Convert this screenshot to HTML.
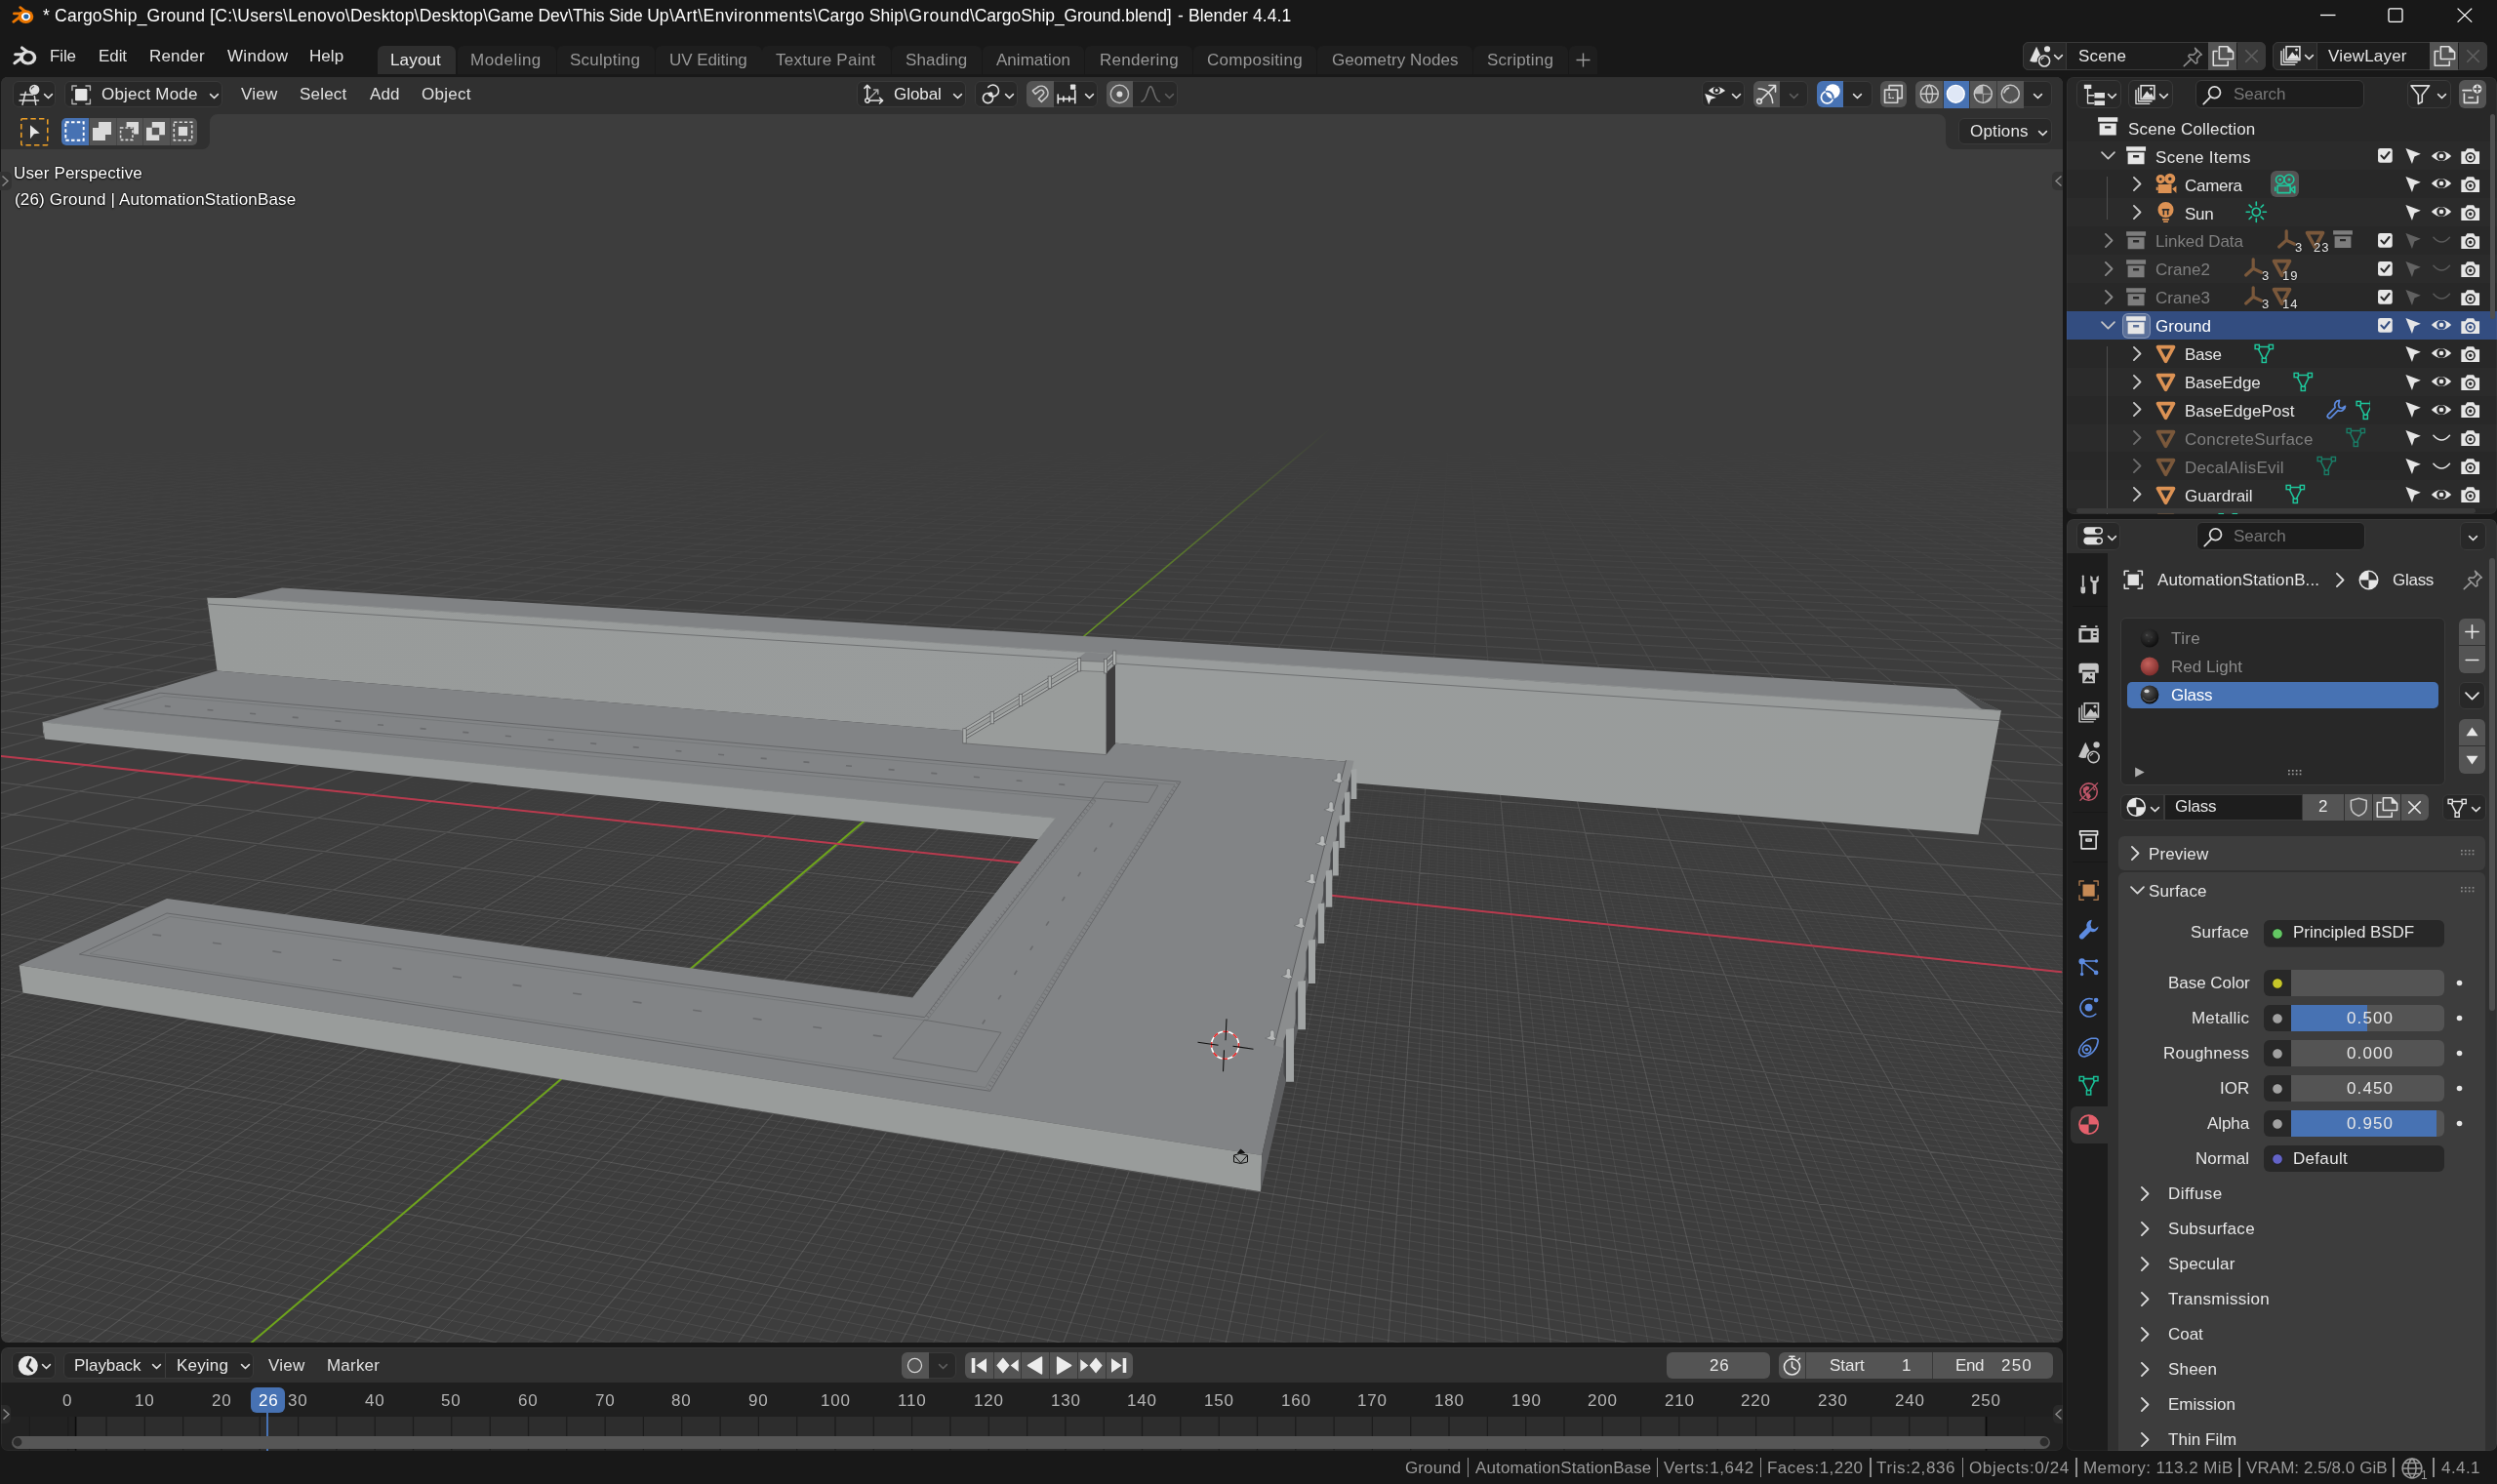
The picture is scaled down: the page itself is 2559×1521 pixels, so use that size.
<!DOCTYPE html>
<html><head><meta charset="utf-8"><title>Blender</title><style>html,body{margin:0;padding:0}
body{width:2559px;height:1521px;background:#181818;overflow:hidden;position:relative;font-family:"Liberation Sans",sans-serif;-webkit-font-smoothing:antialiased}
.b{position:absolute;box-sizing:border-box;display:block}
.t{position:absolute;white-space:nowrap;will-change:transform}
svg{overflow:visible}
#root{position:absolute;left:0;top:0;width:2559px;height:1521px;overflow:hidden;}
</style></head><body><div id="root">
<svg class="b" style="left:10.6px;top:4.6px" width="25.0" height="20.8" viewBox="0 0 24 20"><g fill="none" stroke="#ea7600" stroke-width="2.7" stroke-linecap="round" stroke-linejoin="round"><path d="M9.3 2.6L15.5 7.3"/><path d="M3.3 8.6H11"/><path d="M2.6 16.6L9.2 11.6"/></g><ellipse cx="14.8" cy="11.6" rx="7.6" ry="6.6" fill="#ea7600"/><ellipse cx="14.9" cy="11.5" rx="4.4" ry="3.9" fill="#fff"/><ellipse cx="15.2" cy="11.5" rx="2.5" ry="2.4" fill="#2265a8"/></svg>
<span class="t" style="left:44.00px;top:7px;font-size:17.5px;line-height:18px;color:#ffffff;letter-spacing:0.209px;">* CargoShip_Ground [C:\Users\Lenovo\Desktop\Desktop</span>
<span class="t" style="left:495.30px;top:7px;font-size:17.5px;line-height:18px;color:#ffffff;letter-spacing:-0.147px;">\Game Dev\This Side Up</span>
<span class="t" style="left:685.60px;top:7px;font-size:17.5px;line-height:18px;color:#ffffff;letter-spacing:0.484px;">\Art\Environments</span>
<span class="t" style="left:832.90px;top:7px;font-size:17.5px;line-height:18px;color:#ffffff;letter-spacing:0.053px;">\Cargo Ship</span>
<span class="t" style="left:925.90px;top:7px;font-size:17.5px;line-height:18px;color:#ffffff;letter-spacing:0.753px;">\Ground</span>
<span class="t" style="left:994.40px;top:7px;font-size:17.5px;line-height:18px;color:#ffffff;letter-spacing:-0.066px;">\CargoShip_Ground.blend]</span>
<span class="t" style="left:1206.60px;top:7px;font-size:17.5px;line-height:18px;color:#ffffff;letter-spacing:0.107px;">- Blender 4.4.1</span>
<svg class="b" style="left:2370px;top:0" width="189" height="32" viewBox="2370 0 189 32" fill="none" stroke="#fff" stroke-width="1.3"><path d="M2378 15.5H2393.5"/><rect x="2448" y="8.8" width="14" height="13.6" rx="1.6"/><path d="M2518.6 8.6L2533.2 22.6M2533.2 8.6L2518.6 22.6"/></svg>
<svg class="b" style="left:12.4px;top:46.4px" width="27.1" height="22.6" viewBox="0 0 24 20"><g fill="none" stroke="#dcdcdc" stroke-width="2.7" stroke-linecap="round" stroke-linejoin="round"><path d="M9.3 2.6L15.5 7.3"/><path d="M3.3 8.6H11"/><path d="M2.6 16.6L9.2 11.6"/></g><ellipse cx="14.8" cy="11.6" rx="7.6" ry="6.6" fill="#dcdcdc"/><ellipse cx="14.9" cy="11.5" rx="4.4" ry="3.9" fill="#181818"/></svg>
<span class="t" style="left:51.40px;top:49px;font-size:17px;line-height:17px;color:#e3e3e3;letter-spacing:-0.124px;">File</span>
<span class="t" style="left:101.00px;top:49px;font-size:17px;line-height:17px;color:#e3e3e3;letter-spacing:-0.074px;">Edit</span>
<span class="t" style="left:153.00px;top:49px;font-size:17px;line-height:17px;color:#e3e3e3;letter-spacing:0.157px;">Render</span>
<span class="t" style="left:232.50px;top:49px;font-size:17px;line-height:17px;color:#e3e3e3;letter-spacing:0.306px;">Window</span>
<span class="t" style="left:317.20px;top:49px;font-size:17px;line-height:17px;color:#e3e3e3;letter-spacing:0.059px;">Help</span>
<div class="b" style="left:386.60px;top:46.80px;width:80.40px;height:29.40px;background:#2e2e2e;border-radius:6px 6px 0 0;"></div>
<span class="t" style="left:400.00px;top:53px;font-size:17px;line-height:17px;color:#ededed;letter-spacing:0.160px;">Layout</span>
<div class="b" style="left:468.50px;top:46.80px;width:101.20px;height:29.40px;background:#1e1e1e;border-radius:6px 6px 0 0;"></div>
<span class="t" style="left:482.00px;top:53px;font-size:17px;line-height:17px;color:#989898;letter-spacing:0.476px;">Modeling</span>
<div class="b" style="left:570.80px;top:46.80px;width:100.20px;height:29.40px;background:#1e1e1e;border-radius:6px 6px 0 0;"></div>
<span class="t" style="left:584.30px;top:53px;font-size:17px;line-height:17px;color:#989898;letter-spacing:0.263px;">Sculpting</span>
<div class="b" style="left:672.00px;top:46.80px;width:108.50px;height:29.40px;background:#1e1e1e;border-radius:6px 6px 0 0;"></div>
<span class="t" style="left:686.00px;top:53px;font-size:17px;line-height:17px;color:#989898;letter-spacing:-0.062px;">UV Editing</span>
<div class="b" style="left:781.40px;top:46.80px;width:131.60px;height:29.40px;background:#1e1e1e;border-radius:6px 6px 0 0;"></div>
<span class="t" style="left:795.40px;top:53px;font-size:17px;line-height:17px;color:#989898;letter-spacing:0.237px;">Texture Paint</span>
<div class="b" style="left:914.00px;top:46.80px;width:92.00px;height:29.40px;background:#1e1e1e;border-radius:6px 6px 0 0;"></div>
<span class="t" style="left:928.30px;top:53px;font-size:17px;line-height:17px;color:#989898;letter-spacing:0.130px;">Shading</span>
<div class="b" style="left:1007.00px;top:46.80px;width:104.00px;height:29.40px;background:#1e1e1e;border-radius:6px 6px 0 0;"></div>
<span class="t" style="left:1021.00px;top:53px;font-size:17px;line-height:17px;color:#989898;letter-spacing:0.033px;">Animation</span>
<div class="b" style="left:1112.00px;top:46.80px;width:110.00px;height:29.40px;background:#1e1e1e;border-radius:6px 6px 0 0;"></div>
<span class="t" style="left:1126.60px;top:53px;font-size:17px;line-height:17px;color:#989898;letter-spacing:0.284px;">Rendering</span>
<div class="b" style="left:1223.00px;top:46.80px;width:126.00px;height:29.40px;background:#1e1e1e;border-radius:6px 6px 0 0;"></div>
<span class="t" style="left:1236.80px;top:53px;font-size:17px;line-height:17px;color:#989898;letter-spacing:0.319px;">Compositing</span>
<div class="b" style="left:1350.00px;top:46.80px;width:159.00px;height:29.40px;background:#1e1e1e;border-radius:6px 6px 0 0;"></div>
<span class="t" style="left:1364.50px;top:53px;font-size:17px;line-height:17px;color:#989898;letter-spacing:0.079px;">Geometry Nodes</span>
<div class="b" style="left:1510.00px;top:46.80px;width:97.00px;height:29.40px;background:#1e1e1e;border-radius:6px 6px 0 0;"></div>
<span class="t" style="left:1524.40px;top:53px;font-size:17px;line-height:17px;color:#989898;letter-spacing:0.217px;">Scripting</span>
<div class="b" style="left:1608.00px;top:46.80px;width:29.00px;height:29.40px;background:#1e1e1e;border-radius:6px 6px 0 0;"></div>
<svg class="b" style="left:1614px;top:53px" width="17" height="17" viewBox="0 0 17 17"><path d="M8.5 1.5V15.5M1.5 8.5H15.5" stroke="#9a9a9a" stroke-width="1.4" fill="none"/></svg>
<div class="b" style="left:2073.00px;top:43.00px;width:249.00px;height:28.60px;background:#1d1d1d;border-radius:6px;border:1px solid #3a3a3a;"></div>
<div class="b" style="left:2073.00px;top:43.00px;width:45.40px;height:28.60px;background:#282828;border-radius:6px 0 0 6px;border:1px solid #3a3a3a;"></div>
<svg class="b" style="left:2079.40px;top:46.20px;" width="22.60" height="22.60" viewBox="0 0 16 16"><path d="M5.7 1.2L10 10.6Q5.5 13.8 0.8 11.6z" fill="#e0e0e0" fill-rule="evenodd" /><path d="M11.3 3.0a2.2 2.2 0 1 0 4.4 0a2.2 2.2 0 1 0 -4.4 0z" fill="#e0e0e0" fill-rule="evenodd" /><circle cx="11.4" cy="11.7" r="3.9" fill="#282828" stroke="#282828" stroke-width="2.6"/><circle cx="11.4" cy="11.7" r="3.9" fill="#282828" stroke="#e0e0e0" stroke-width="1.1"/><path d="M9.4 10.6a2.3 2.3 0 0 1 1.5-1.4" fill="none" stroke="#e0e0e0" stroke-width="0.8" stroke-linecap="round" stroke-linejoin="round" /></svg>
<svg class="b" style="left:2098.20px;top:47.40px;" width="23.00" height="23.00" viewBox="0 0 16 16"><path d="M5.3 6.7L8 9.4L10.7 6.7" fill="none" stroke="#dcdcdc" stroke-width="1.15" stroke-linecap="round" stroke-linejoin="round" /></svg>
<span class="t" style="left:2130.40px;top:49px;font-size:17px;line-height:17px;color:#e6e6e6;letter-spacing:0.159px;">Scene</span>
<svg class="b" style="left:2235.60px;top:46.60px;" width="22.60" height="22.60" viewBox="0 0 16 16"><path d="M9.6 1.6l4.8 4.8-1.2 0.4-2.2 2.4 0.2 3-1.2 0.6-5.2-5.2 0.6-1.2 3 0.2 2.4-2.2zM6.6 9.8L1.6 14.6" fill="none" stroke="#8c8c8c" stroke-width="1.1" stroke-linecap="round" stroke-linejoin="round" /></svg>
<div class="b" style="left:2263.40px;top:43.00px;width:29.00px;height:28.60px;background:#545454;border-radius:0;"></div>
<svg class="b" style="left:2266.80px;top:46.20px;" width="22.60" height="22.60" viewBox="0 0 16 16"><path d="M5.2 1.3h6.1l4 4v4.9H5.2zM3.6 4.6H0.9V15h10.6v-3" fill="none" stroke="#dedede" stroke-width="1.1" stroke-linecap="round" stroke-linejoin="round" /><path d="M11.1 1.1v4.4h4.4z" fill="#dedede" fill-rule="evenodd" /></svg>
<div class="b" style="left:2293.00px;top:43.00px;width:29.00px;height:28.60px;background:#3a3a3a;border-radius:0 6px 6px 0;"></div>
<svg class="b" style="left:2296.00px;top:46.00px;" width="23.00" height="23.00" viewBox="0 0 16 16"><path d="M4 4L12 12M12 4L4 12" fill="none" stroke="#5e5e5e" stroke-width="1.2" stroke-linecap="round" stroke-linejoin="round" /></svg>
<div class="b" style="left:2329.40px;top:43.00px;width:220.00px;height:28.60px;background:#1d1d1d;border-radius:6px;border:1px solid #3a3a3a;"></div>
<div class="b" style="left:2329.40px;top:43.00px;width:45.60px;height:28.60px;background:#282828;border-radius:6px 0 0 6px;border:1px solid #3a3a3a;"></div>
<svg class="b" style="left:2335.60px;top:46.20px;" width="22.60" height="22.60" viewBox="0 0 16 16"><path d="M1.4 4.6v9.8h9.8M3.2 3v9.6h9.6" fill="none" stroke="#e0e0e0" stroke-width="1.0" stroke-linecap="round" stroke-linejoin="round" /><rect x="5" y="1.2" width="9.8" height="9.8" fill="#282828" stroke="#e0e0e0" stroke-width="1.1"/><path d="M5.6 10.4L9.4 5.2l2.2 2.8 1-1.2 2 3.6z" fill="#e0e0e0" fill-rule="evenodd" /><path d="M11.4 3.6a1 1 0 1 0 2 0a1 1 0 1 0 -2 0z" fill="#e0e0e0" fill-rule="evenodd" /></svg>
<svg class="b" style="left:2354.60px;top:47.40px;" width="23.00" height="23.00" viewBox="0 0 16 16"><path d="M5.3 6.7L8 9.4L10.7 6.7" fill="none" stroke="#dcdcdc" stroke-width="1.15" stroke-linecap="round" stroke-linejoin="round" /></svg>
<span class="t" style="left:2386.40px;top:49px;font-size:17px;line-height:17px;color:#e6e6e6;letter-spacing:0.170px;">ViewLayer</span>
<div class="b" style="left:2490.40px;top:43.00px;width:29.00px;height:28.60px;background:#545454;border-radius:0;"></div>
<svg class="b" style="left:2493.80px;top:46.20px;" width="22.60" height="22.60" viewBox="0 0 16 16"><path d="M5.2 1.3h6.1l4 4v4.9H5.2zM3.6 4.6H0.9V15h10.6v-3" fill="none" stroke="#dedede" stroke-width="1.1" stroke-linecap="round" stroke-linejoin="round" /><path d="M11.1 1.1v4.4h4.4z" fill="#dedede" fill-rule="evenodd" /></svg>
<div class="b" style="left:2520.00px;top:43.00px;width:29.40px;height:28.60px;background:#3a3a3a;border-radius:0 6px 6px 0;"></div>
<svg class="b" style="left:2523.20px;top:46.00px;" width="23.00" height="23.00" viewBox="0 0 16 16"><path d="M4 4L12 12M12 4L4 12" fill="none" stroke="#5e5e5e" stroke-width="1.2" stroke-linecap="round" stroke-linejoin="round" /></svg>
<div class="b" style="left:1.2px;top:79px;width:2112.4px;height:1297px;border-radius:7px;overflow:hidden;background:#3d3d3d"><div class="b" style="left:0.8px;top:0"><svg class="b" style="left:0;top:0" width="2112" height="1297" viewBox="2 79 2112 1297">
<defs>
<linearGradient id="gm1" x1="0" y1="437" x2="0" y2="900" gradientUnits="userSpaceOnUse"><stop offset="0" stop-color="#fff" stop-opacity="0"/><stop offset="0.274" stop-color="#fff" stop-opacity="0.24"/><stop offset="0.605" stop-color="#fff" stop-opacity="0.72"/><stop offset="0.784" stop-color="#fff" stop-opacity="0.92"/><stop offset="1" stop-color="#fff" stop-opacity="1"/></linearGradient>
<mask id="m1" maskUnits="userSpaceOnUse" x="0" y="0" width="2200" height="1400"><rect x="0" y="430" width="2200" height="970" fill="url(#gm1)"/></mask>
<linearGradient id="gm2" x1="0" y1="640" x2="0" y2="1000" gradientUnits="userSpaceOnUse"><stop offset="0" stop-color="#fff" stop-opacity="0"/><stop offset="1" stop-color="#fff" stop-opacity="1"/></linearGradient>
<mask id="m2" maskUnits="userSpaceOnUse" x="0" y="0" width="2200" height="1400"><rect x="0" y="640" width="2200" height="760" fill="url(#gm2)"/></mask>
<linearGradient id="gg" x1="1363" y1="439" x2="1112" y2="651" gradientUnits="userSpaceOnUse"><stop offset="0" stop-color="#6ea51b" stop-opacity="0"/><stop offset="0.5" stop-color="#6ea51b" stop-opacity="0.42"/><stop offset="1" stop-color="#6ea51b" stop-opacity="0.85"/></linearGradient>
<linearGradient id="wallg" x1="212" y1="0" x2="2050" y2="0" gradientUnits="userSpaceOnUse"><stop offset="0" stop-color="#989b9a"/><stop offset="0.5" stop-color="#999c9c"/><stop offset="1" stop-color="#999c9b"/></linearGradient>
</defs>
<rect x="2" y="79" width="2112" height="1297" fill="#3d3d3d"/>
<defs><mask id="m2d" maskUnits="userSpaceOnUse" x="0" y="0" width="2200" height="1400"><polygon points="7290,2113 5725,1686 4654,1402 3946,1221 3437,1097 3048,1007 2737,939 2480,887 2261,847 2070,815 1899,790 1743,770 1598,755 1463,744 1333,736 1207,731 1083,729 959,730 834,733 707,740 574,750 433,764 283,781 119,804 -63,833 -269,870 -508,917 -793,977 -1144,1057 -1595,1165 -2204,1319 -3089,1551 -4520,1939 -5164,2118" fill="#fff" fill-opacity="0.004"/><polygon points="7022,2113 5677,1731 4625,1440 3927,1254 3423,1125 3038,1032 2730,963 2474,909 2256,867 2066,834 1896,808 1741,788 1597,772 1461,760 1332,752 1206,747 1083,745 960,746 835,750 708,757 575,767 435,781 286,800 122,823 -59,853 -263,891 -501,939 -784,1002 -1132,1084 -1578,1196 -2179,1354 -3051,1593 -4452,1988 -4898,2118" fill="#fff" fill-opacity="0.028"/><polygon points="6753,2113 5626,1778 4594,1480 3906,1289 3408,1157 3027,1060 2721,988 2468,933 2251,889 2062,855 1892,828 1738,807 1595,791 1460,778 1331,770 1206,765 1083,762 960,763 836,767 709,775 577,785 438,800 289,819 126,844 -54,875 -257,914 -493,964 -774,1029 -1119,1114 -1560,1229 -2153,1392 -3009,1637 -4379,2041 -4631,2118" fill="#fff" fill-opacity="0.054"/><polygon points="6483,2113 5571,1830 4560,1524 3883,1327 3392,1190 3015,1091 2712,1016 2461,958 2246,913 2058,878 1889,850 1735,828 1593,811 1459,798 1330,789 1205,784 1083,782 960,782 837,787 710,794 579,805 440,821 292,840 130,866 -49,898 -251,939 -485,991 -763,1058 -1104,1146 -1540,1265 -2124,1433 -2965,1685 -4302,2098 -4364,2117" fill="#fff" fill-opacity="0.079"/><polygon points="6212,2114 5512,1885 4523,1571 3858,1368 3374,1227 3002,1124 2702,1046 2453,987 2240,940 2053,903 1885,874 1733,851 1591,833 1457,820 1329,811 1205,805 1083,802 961,803 838,808 712,816 581,827 443,843 295,864 135,890 -43,924 -244,966 -476,1020 -751,1090 -1089,1181 -1518,1304 -2093,1478 -2917,1736 -4092,2117" fill="#fff" fill-opacity="0.103"/><polygon points="5939,2114 5448,1945 4483,1623 3831,1413 3355,1267 2988,1160 2691,1080 2445,1018 2233,969 2048,931 1881,900 1729,876 1588,858 1455,844 1328,834 1204,828 1083,826 961,827 839,831 713,839 583,852 446,868 299,890 140,917 -37,952 -236,996 -466,1053 -738,1125 -1071,1219 -1495,1347 -2059,1526 -2865,1792 -3817,2117" fill="#fff" fill-opacity="0.130"/><polygon points="5665,2114 5378,2010 4440,1679 3802,1463 3334,1311 2972,1201 2679,1117 2435,1052 2226,1001 2042,961 1877,929 1726,904 1586,885 1453,870 1327,860 1204,854 1083,851 962,852 840,857 715,866 586,878 449,896 304,918 145,947 -30,984 -227,1030 -455,1088 -724,1163 -1053,1262 -1469,1394 -2022,1579 -2808,1853 -3541,2117" fill="#fff" fill-opacity="0.159"/><polygon points="5389,2114 5302,2080 4392,1741 3769,1517 3311,1360 2954,1245 2666,1158 2425,1090 2218,1037 2035,995 1872,962 1722,935 1583,915 1451,900 1325,889 1203,883 1083,880 963,881 841,886 717,895 589,908 453,927 308,950 151,980 -22,1019 -218,1067 -442,1128 -708,1206 -1032,1309 -1440,1446 -1981,1638 -2746,1920 -3262,2117" fill="#fff" fill-opacity="0.193"/><polygon points="5108,2114 4339,1809 3733,1578 3284,1415 2935,1295 2651,1204 2413,1133 2208,1077 2028,1033 1866,998 1717,971 1579,949 1449,933 1324,922 1202,915 1083,912 963,914 843,919 720,928 592,942 457,961 314,986 158,1018 -14,1058 -207,1108 -429,1172 -690,1254 -1008,1361 -1408,1504 -1936,1703 -2677,1993 -2982,2117" fill="#fff" fill-opacity="0.235"/><polygon points="4820,2114 4280,1885 3692,1646 3255,1476 2913,1351 2634,1255 2400,1181 2198,1123 2020,1076 1859,1039 1712,1010 1575,988 1446,971 1322,959 1201,952 1083,949 964,950 845,956 722,966 595,981 462,1001 320,1027 166,1060 -4,1102 -194,1155 -413,1223 -670,1308 -982,1420 -1373,1569 -1886,1775 -2601,2075 -2699,2117" fill="#fff" fill-opacity="0.287"/><polygon points="4530,2114 4214,1970 3647,1722 3222,1546 2888,1414 2615,1314 2385,1236 2186,1175 2010,1126 1852,1087 1706,1056 1571,1032 1443,1015 1320,1002 1200,994 1082,991 965,992 847,998 725,1009 600,1025 468,1046 327,1073 175,1109 7,1153 -180,1209 -395,1280 -648,1370 -952,1487 -1332,1642 -1829,1856 -2408,2117" fill="#fff" fill-opacity="0.358"/><polygon points="4236,2114 4140,2067 3594,1810 3184,1625 2859,1488 2593,1382 2367,1300 2172,1235 1999,1183 1843,1142 1700,1109 1566,1084 1439,1065 1317,1052 1199,1044 1082,1040 966,1042 849,1048 729,1059 605,1076 474,1098 335,1128 185,1165 20,1212 -164,1271 -375,1346 -621,1441 -918,1563 -1286,1726 -1765,1948 -2110,2117" fill="#fff" fill-opacity="0.461"/><polygon points="3930,2114 3534,1911 3139,1718 2825,1573 2567,1462 2347,1375 2156,1306 1987,1251 1833,1207 1692,1172 1560,1145 1435,1125 1314,1111 1198,1102 1082,1098 967,1100 852,1106 733,1118 610,1136 482,1160 345,1191 197,1231 36,1281 -145,1344 -351,1423 -591,1523 -878,1653 -1233,1823 -1691,2055 -1807,2116" fill="#fff" fill-opacity="0.621"/><polygon points="3614,2114 3463,2029 3087,1827 2785,1675 2536,1557 2323,1464 2137,1391 1971,1332 1821,1285 1682,1248 1552,1219 1429,1197 1311,1182 1196,1172 1082,1168 969,1170 855,1177 738,1190 617,1209 491,1235 357,1268 212,1311 54,1365 -122,1432 -322,1516 -554,1622 -830,1759 -1170,1937 -1491,2116" fill="#fff" fill-opacity="0.883"/></mask></defs>
<path mask="url(#m2d)" d="M1102.0 430.0L-3.0 716.2M1103.6 430.0L-3.0 717.8M1105.2 430.0L-3.0 719.4M1106.8 430.0L-3.0 721.1M1108.4 430.0L-3.0 722.7M1110.0 430.0L-3.0 724.4M1111.6 430.0L-3.0 726.0M1113.2 430.0L-3.0 727.7M1114.8 430.0L-3.0 729.4M1118.0 430.0L-3.0 732.8M1119.7 430.0L-3.0 734.6M1121.3 430.0L-3.0 736.3M1122.9 430.0L-3.0 738.1M1124.5 430.0L-3.0 739.9M1126.1 430.0L-3.0 741.7M1127.7 430.0L-3.0 743.5M1129.3 430.0L-3.0 745.3M1130.9 430.0L-3.0 747.2M1134.1 430.0L-3.0 750.9M1135.7 430.0L-3.0 752.8M1137.3 430.0L-3.0 754.7M1138.9 430.0L-3.0 756.6M1140.5 430.0L-3.0 758.6M1142.1 430.0L-3.0 760.6M1143.7 430.0L-3.0 762.5M1145.3 430.0L-3.0 764.6M1146.9 430.0L-3.0 766.6M1150.2 430.0L-3.0 770.7M1151.8 430.0L-3.0 772.8M1153.4 430.0L-3.0 774.9M1155.0 430.0L-3.0 777.0M1156.6 430.0L-3.0 779.1M1158.2 430.0L-3.0 781.3M1159.8 430.0L-3.0 783.5M1161.4 430.0L-3.0 785.7M1163.0 430.0L-3.0 787.9M1166.2 430.0L-3.0 792.4M1167.8 430.0L-3.0 794.7M1169.4 430.0L-3.0 797.0M1171.0 430.0L-3.0 799.3M1172.6 430.0L-3.0 801.7M1174.2 430.0L-3.0 804.1M1175.8 430.0L-3.0 806.5M1177.4 430.0L-3.0 808.9M1179.1 430.0L-3.0 811.4M1182.3 430.0L-3.0 816.4M1183.9 430.0L-3.0 818.9M1185.5 430.0L-3.0 821.5M1187.1 430.0L-3.0 824.0M1188.7 430.0L-3.0 826.7M1190.3 430.0L-3.0 829.3M1191.9 430.0L-3.0 832.0M1193.5 430.0L-3.0 834.7M1195.1 430.0L-3.0 837.4M1198.3 430.0L-3.0 842.9M1199.9 430.0L-3.0 845.8M1201.5 430.0L-3.0 848.6M1203.1 430.0L-3.0 851.5M1204.8 430.0L-3.0 854.4M1206.4 430.0L-3.0 857.4M1208.0 430.0L-3.0 860.3M1209.6 430.0L-3.0 863.3M1211.2 430.0L-3.0 866.4M1214.4 430.0L-3.0 872.6M1216.0 430.0L-3.0 875.8M1217.6 430.0L-3.0 878.9M1219.2 430.0L-3.0 882.2M1220.8 430.0L-3.0 885.4M1222.4 430.0L-3.0 888.7M1224.0 430.0L-3.0 892.1M1225.6 430.0L-3.0 895.5M1227.2 430.0L-3.0 898.9M1230.5 430.0L-3.0 905.9M1232.1 430.0L-3.0 909.4M1233.7 430.0L-3.0 913.0M1235.3 430.0L-3.0 916.7M1236.9 430.0L-3.0 920.4M1238.5 430.0L-3.0 924.1M1240.1 430.0L-3.0 927.9M1241.7 430.0L-3.0 931.7M1243.3 430.0L-3.0 935.6M1246.5 430.0L-3.0 943.5M1248.1 430.0L-3.0 947.5M1249.7 430.0L-3.0 951.6M1251.3 430.0L-3.0 955.8M1252.9 430.0L-3.0 960.0M1254.5 430.0L-3.0 964.2M1256.2 430.0L-3.0 968.5M1257.8 430.0L-3.0 972.9M1259.4 430.0L-3.0 977.3M1262.6 430.0L-3.0 986.4M1264.2 430.0L-3.0 991.0M1265.8 430.0L-3.0 995.7M1267.4 430.0L-3.0 1000.5M1269.0 430.0L-3.0 1005.3M1270.6 430.0L-3.0 1010.2M1272.2 430.0L-3.0 1015.1M1273.8 430.0L-3.0 1020.2M1275.4 430.0L-3.0 1025.3M1278.7 430.0L-3.0 1035.7M1280.3 430.0L-3.0 1041.1M1281.9 430.0L-3.0 1046.5M1283.5 430.0L-3.0 1052.0M1285.1 430.0L-3.0 1057.6M1286.7 430.0L-3.0 1063.3M1288.3 430.0L-3.0 1069.0M1289.9 430.0L-3.0 1074.9M1291.5 430.0L-3.0 1080.9M1294.7 430.0L-3.0 1093.1M1296.3 430.0L-3.0 1099.3M1297.9 430.0L-3.0 1105.7M1299.5 430.0L-3.0 1112.1M1301.2 430.0L-3.0 1118.7M1302.8 430.0L-3.0 1125.4M1304.4 430.0L-3.0 1132.1M1306.0 430.0L-3.0 1139.1M1307.6 430.0L-3.0 1146.1M1310.8 430.0L-3.0 1160.5M1312.4 430.0L-3.0 1167.9M1314.0 430.0L-3.0 1175.5M1315.6 430.0L-3.0 1183.1M1317.2 430.0L-3.0 1190.9M1318.8 430.0L-3.0 1198.9M1320.4 430.0L-3.0 1207.0M1322.0 430.0L-3.0 1215.3M1323.7 430.0L-3.0 1223.7M1326.9 430.0L-3.0 1241.0M1328.5 430.0L-3.0 1250.0M1330.1 430.0L-3.0 1259.1M1331.7 430.0L-3.0 1268.3M1333.3 430.0L-3.0 1277.8M1334.9 430.0L-3.0 1287.4M1336.5 430.0L-3.0 1297.3M1338.1 430.0L-3.0 1307.4M1339.7 430.0L-3.0 1317.6M1342.9 430.0L-3.0 1338.8M1344.6 430.0L-3.0 1349.8M1346.2 430.0L-3.0 1361.0M1347.8 430.0L-3.0 1372.4M1349.4 430.0L1.4 1381.0M1351.0 430.0L18.1 1381.0M1352.6 430.0L34.8 1381.0M1354.2 430.0L51.5 1381.0M1355.8 430.0L68.2 1381.0M1359.0 430.0L101.6 1381.0M1360.6 430.0L118.4 1381.0M1362.2 430.0L135.1 1381.0M1363.8 430.0L151.8 1381.0M1365.5 430.0L168.5 1381.0M1367.1 430.0L185.2 1381.0M1368.7 430.0L201.9 1381.0M1370.3 430.0L218.6 1381.0M1371.9 430.0L235.3 1381.0M1375.1 430.0L268.7 1381.0M1376.7 430.0L285.5 1381.0M1378.3 430.0L302.2 1381.0M1379.9 430.0L318.9 1381.0M1381.5 430.0L335.6 1381.0M1383.1 430.0L352.3 1381.0M1384.8 430.0L369.0 1381.0M1386.4 430.0L385.7 1381.0M1388.0 430.0L402.4 1381.0M1391.2 430.0L435.9 1381.0M1392.8 430.0L452.6 1381.0M1394.4 430.0L469.3 1381.0M1396.0 430.0L486.0 1381.0M1397.6 430.0L502.7 1381.0M1399.2 430.0L519.4 1381.0M1400.8 430.0L536.2 1381.0M1402.4 430.0L552.9 1381.0M1404.1 430.0L569.6 1381.0M1407.3 430.0L603.0 1381.0M1408.9 430.0L619.7 1381.0M1410.5 430.0L636.4 1381.0M1412.1 430.0L653.2 1381.0M1413.7 430.0L669.9 1381.0M1415.3 430.0L686.6 1381.0M1416.9 430.0L703.3 1381.0M1418.5 430.0L720.0 1381.0M1420.1 430.0L736.7 1381.0M1423.4 430.0L770.2 1381.0M1425.0 430.0L786.9 1381.0M1426.6 430.0L803.6 1381.0M1428.2 430.0L820.3 1381.0M1429.8 430.0L837.0 1381.0M1431.4 430.0L853.8 1381.0M1433.0 430.0L870.5 1381.0M1434.6 430.0L887.2 1381.0M1436.2 430.0L903.9 1381.0M1439.4 430.0L937.4 1381.0M1441.1 430.0L954.1 1381.0M1442.7 430.0L970.8 1381.0M1444.3 430.0L987.5 1381.0M1445.9 430.0L1004.2 1381.0M1447.5 430.0L1021.0 1381.0M1449.1 430.0L1037.7 1381.0M1450.7 430.0L1054.4 1381.0M1452.3 430.0L1071.1 1381.0M1455.5 430.0L1104.6 1381.0M1457.1 430.0L1121.3 1381.0M1458.8 430.0L1138.0 1381.0M1460.4 430.0L1154.7 1381.0M1462.0 430.0L1171.4 1381.0M1463.6 430.0L1188.2 1381.0M1465.2 430.0L1204.9 1381.0M1466.8 430.0L1221.6 1381.0M1468.4 430.0L1238.3 1381.0M1471.6 430.0L1271.8 1381.0M1473.2 430.0L1288.5 1381.0M1474.8 430.0L1305.2 1381.0M1476.5 430.0L1322.0 1381.0M1478.1 430.0L1338.7 1381.0M1479.7 430.0L1355.4 1381.0M1481.3 430.0L1372.1 1381.0M1482.9 430.0L1388.8 1381.0M1484.5 430.0L1405.6 1381.0M1487.7 430.0L1439.0 1381.0M1489.3 430.0L1455.7 1381.0M1490.9 430.0L1472.5 1381.0M1492.5 430.0L1489.2 1381.0M1494.2 430.0L1505.9 1381.0M1495.8 430.0L1522.6 1381.0M1497.4 430.0L1539.4 1381.0M1499.0 430.0L1556.1 1381.0M1500.6 430.0L1572.8 1381.0M1503.8 430.0L1606.3 1381.0M1505.4 430.0L1623.0 1381.0M1507.0 430.0L1639.7 1381.0M1508.6 430.0L1656.5 1381.0M1510.3 430.0L1673.2 1381.0M1511.9 430.0L1689.9 1381.0M1513.5 430.0L1706.6 1381.0M1515.1 430.0L1723.4 1381.0M1516.7 430.0L1740.1 1381.0M1519.9 430.0L1773.6 1381.0M1521.5 430.0L1790.3 1381.0M1523.1 430.0L1807.0 1381.0M1524.7 430.0L1823.8 1381.0M1526.3 430.0L1840.5 1381.0M1528.0 430.0L1857.2 1381.0M1529.6 430.0L1873.9 1381.0M1531.2 430.0L1890.7 1381.0M1532.8 430.0L1907.4 1381.0M1536.0 430.0L1940.9 1381.0M1537.6 430.0L1957.6 1381.0M1539.2 430.0L1974.3 1381.0M1540.8 430.0L1991.1 1381.0M1542.4 430.0L2007.8 1381.0M1544.1 430.0L2024.5 1381.0M1545.7 430.0L2041.3 1381.0M1547.3 430.0L2058.0 1381.0M1548.9 430.0L2074.7 1381.0M1552.1 430.0L2108.2 1381.0M1553.7 430.0L2119.0 1371.1M1555.3 430.0L2119.0 1344.3M1556.9 430.0L2119.0 1318.7M1558.6 430.0L2119.0 1294.4M1560.2 430.0L2119.0 1271.3M1561.8 430.0L2119.0 1249.3M1563.4 430.0L2119.0 1228.3M1565.0 430.0L2119.0 1208.2M1568.2 430.0L2119.0 1170.5M1569.8 430.0L2119.0 1152.9M1571.4 430.0L2119.0 1136.0M1573.0 430.0L2119.0 1119.8M1574.7 430.0L2119.0 1104.2M1576.3 430.0L2119.0 1089.2M1577.9 430.0L2119.0 1074.8M1579.5 430.0L2119.0 1060.9M1581.1 430.0L2119.0 1047.6M1584.3 430.0L2119.0 1022.2M1585.9 430.0L2119.0 1010.2M1587.5 430.0L2119.0 998.6M1589.1 430.0L2119.0 987.4M1590.8 430.0L2119.0 976.6M1592.4 430.0L2119.0 966.1M1594.0 430.0L2119.0 955.9M1595.6 430.0L2119.0 946.1M1597.2 430.0L2119.0 936.6M1600.4 430.0L2119.0 918.4M1602.0 430.0L2119.0 909.7M1603.6 430.0L2119.0 901.2M1605.3 430.0L2119.0 893.0M1606.9 430.0L2119.0 885.0M1608.5 430.0L2119.0 877.3M1610.1 430.0L2119.0 869.7M1611.7 430.0L2119.0 862.4M1613.3 430.0L2119.0 855.3M1616.5 430.0L2119.0 841.5M1618.1 430.0L2119.0 834.9M1619.8 430.0L2119.0 828.5M1621.4 430.0L2119.0 822.2M1623.0 430.0L2119.0 816.1M1624.6 430.0L2119.0 810.2M1626.2 430.0L2119.0 804.4M1627.8 430.0L2119.0 798.7M1629.4 430.0L2119.0 793.1M1632.6 430.0L2119.0 782.4M1634.3 430.0L2119.0 777.2M1635.9 430.0L2119.0 772.2M1637.5 430.0L2119.0 767.2M1639.1 430.0L2119.0 762.4M1640.7 430.0L2119.0 757.7M1642.3 430.0L2119.0 753.1M1643.9 430.0L2119.0 748.5M1645.5 430.0L2119.0 744.1M1648.8 430.0L2119.0 735.5M1650.4 430.0L2119.0 731.4M1652.0 430.0L2119.0 727.3M1653.6 430.0L2119.0 723.3M1655.2 430.0L2119.0 719.4M1656.8 430.0L2119.0 715.5M1658.4 430.0L2119.0 711.8M1660.0 430.0L2119.0 708.1M1661.6 430.0L2119.0 704.4M1664.9 430.0L2119.0 697.4M1666.5 430.0L2119.0 694.0M1668.1 430.0L2119.0 690.6M1669.7 430.0L2119.0 687.3M1671.3 430.0L2119.0 684.1M1672.9 430.0L2119.0 680.9M1674.5 430.0L2119.0 677.8M1676.2 430.0L2119.0 674.7M1677.8 430.0L2119.0 671.7M1681.0 430.0L2119.0 665.8M1682.6 430.0L2119.0 662.9M1684.2 430.0L2119.0 660.1M1685.8 430.0L2119.0 657.4M1687.4 430.0L2119.0 654.6M1689.0 430.0L2119.0 652.0M1690.7 430.0L2119.0 649.3M1692.3 430.0L2119.0 646.7M1693.9 430.0L2119.0 644.2M1697.1 430.0L2119.0 639.2M1698.7 430.0L2119.0 636.8M1700.3 430.0L2119.0 634.4M1701.9 430.0L2119.0 632.0M1703.6 430.0L2119.0 629.7M1705.2 430.0L2119.0 627.4M1706.8 430.0L2119.0 625.2M1708.4 430.0L2119.0 622.9M1710.0 430.0L2119.0 620.8M1713.2 430.0L2119.0 616.5M1714.8 430.0L2119.0 614.4M1716.4 430.0L2119.0 612.3M1718.1 430.0L2119.0 610.3M1719.7 430.0L2119.0 608.3M1721.3 430.0L2119.0 606.3M1722.9 430.0L2119.0 604.4M1724.5 430.0L2119.0 602.5M1726.1 430.0L2119.0 600.6M1729.3 430.0L2119.0 596.9M1731.0 430.0L2119.0 595.1M1732.6 430.0L2119.0 593.3M1734.2 430.0L2119.0 591.5M1735.8 430.0L2119.0 589.8M1737.4 430.0L2119.0 588.0M1739.0 430.0L2119.0 586.3M1740.6 430.0L2119.0 584.7M1742.2 430.0L2119.0 583.0M1745.5 430.0L2119.0 579.8M1747.1 430.0L2119.0 578.2M1748.7 430.0L2119.0 576.6M1750.3 430.0L2119.0 575.0M1751.9 430.0L2119.0 573.5M1753.5 430.0L2119.0 572.0M1755.1 430.0L2119.0 570.5M1756.8 430.0L2119.0 569.0M1758.4 430.0L2119.0 567.6M1761.6 430.0L2119.0 564.7M1763.2 430.0L2119.0 563.3M1764.8 430.0L2119.0 561.9M1766.4 430.0L2119.0 560.5M1768.0 430.0L2119.0 559.2M1769.7 430.0L2119.0 557.8M1771.3 430.0L2119.0 556.5M1772.9 430.0L2119.0 555.2M1774.5 430.0L2119.0 553.9M1777.7 430.0L2119.0 551.3M1779.3 430.0L2119.0 550.1M1780.9 430.0L2119.0 548.8M1782.6 430.0L2119.0 547.6M1784.2 430.0L2119.0 546.4M1785.8 430.0L2119.0 545.2M1787.4 430.0L2119.0 544.0M1789.0 430.0L2119.0 542.8M1790.6 430.0L2119.0 541.7M1793.9 430.0L2119.0 539.4M1795.5 430.0L2119.0 538.3M1797.1 430.0L2119.0 537.2M1798.7 430.0L2119.0 536.1M1800.3 430.0L2119.0 535.0M1801.9 430.0L2119.0 533.9M1803.5 430.0L2119.0 532.8M1805.1 430.0L2119.0 531.8M1806.8 430.0L2119.0 530.7M1810.0 430.0L2119.0 528.7M1811.6 430.0L2119.0 527.7M1813.2 430.0L2119.0 526.7M1814.8 430.0L2119.0 525.7M1816.4 430.0L2119.0 524.7M1818.1 430.0L2119.0 523.7M1819.7 430.0L2119.0 522.8M1821.3 430.0L2119.0 521.8M1822.9 430.0L2119.0 520.9M1826.1 430.0L2119.0 519.0M1827.7 430.0L2119.0 518.1M1829.3 430.0L2119.0 517.2M1831.0 430.0L2119.0 516.3M1832.6 430.0L2119.0 515.4M1834.2 430.0L2119.0 514.5M1835.8 430.0L2119.0 513.6M1837.4 430.0L2119.0 512.8M1839.0 430.0L2119.0 511.9M1842.3 430.0L2119.0 510.2M1843.9 430.0L2119.0 509.4M1845.5 430.0L2119.0 508.6M1847.1 430.0L2119.0 507.7M1848.7 430.0L2119.0 506.9M1850.3 430.0L2119.0 506.1M1851.9 430.0L2119.0 505.3M1853.5 430.0L2119.0 504.5M1855.2 430.0L2119.0 503.7M1858.4 430.0L2119.0 502.2M1860.0 430.0L2119.0 501.4M1861.6 430.0L2119.0 500.7M1863.2 430.0L2119.0 499.9M1864.8 430.0L2119.0 499.2M1866.5 430.0L2119.0 498.5M1868.1 430.0L2119.0 497.7M1869.7 430.0L2119.0 497.0M1871.3 430.0L2119.0 496.3M-3.0 1378.4L7.5 1381.0M-3.0 1364.2L65.6 1381.0M-3.0 1350.4L123.8 1381.0M-3.0 1336.9L181.9 1381.0M-3.0 1323.8L240.1 1381.0M-3.0 1311.1L298.2 1381.0M-3.0 1298.6L356.4 1381.0M-3.0 1286.5L414.5 1381.0M-3.0 1274.7L472.7 1381.0M-3.0 1251.9L589.0 1381.0M-3.0 1240.9L647.2 1381.0M-3.0 1230.1L705.4 1381.0M-3.0 1219.7L763.6 1381.0M-3.0 1209.4L821.7 1381.0M-3.0 1199.4L879.9 1381.0M-3.0 1189.6L938.1 1381.0M-3.0 1180.1L996.3 1381.0M-3.0 1170.7L1054.5 1381.0M-3.0 1152.6L1170.9 1381.0M-3.0 1143.8L1229.1 1381.0M-3.0 1135.2L1287.3 1381.0M-3.0 1126.8L1345.4 1381.0M-3.0 1118.6L1403.7 1381.0M-3.0 1110.5L1461.9 1381.0M-3.0 1102.6L1520.1 1381.0M-3.0 1094.9L1578.3 1381.0M-3.0 1087.3L1636.5 1381.0M-3.0 1072.6L1752.9 1381.0M-3.0 1065.4L1811.1 1381.0M-3.0 1058.4L1869.4 1381.0M-3.0 1051.5L1927.6 1381.0M-3.0 1044.8L1985.8 1381.0M-3.0 1038.1L2044.0 1381.0M-3.0 1031.6L2102.3 1381.0M-3.0 1025.3L2119.0 1374.2M-3.0 1019.0L2119.0 1364.7M-3.0 1006.8L2119.0 1346.4M-3.0 1000.8L2119.0 1337.5M-3.0 995.0L2119.0 1328.7M-3.0 989.2L2119.0 1320.1M-3.0 983.6L2119.0 1311.6M-3.0 978.0L2119.0 1303.2M-3.0 972.6L2119.0 1295.0M-3.0 967.2L2119.0 1287.0M-3.0 961.9L2119.0 1279.0M-3.0 951.6L2119.0 1263.6M-3.0 946.6L2119.0 1256.0M-3.0 941.7L2119.0 1248.6M-3.0 936.8L2119.0 1241.3M-3.0 932.0L2119.0 1234.1M-3.0 927.3L2119.0 1227.0M-3.0 922.7L2119.0 1220.1M-3.0 918.1L2119.0 1213.2M-3.0 913.6L2119.0 1206.4M-3.0 904.8L2119.0 1193.2M-3.0 900.5L2119.0 1186.8M-3.0 896.3L2119.0 1180.4M-3.0 892.1L2119.0 1174.1M-3.0 888.0L2119.0 1168.0M-3.0 884.0L2119.0 1161.9M-3.0 880.0L2119.0 1155.9M-3.0 876.0L2119.0 1150.0M-3.0 872.1L2119.0 1144.1M-3.0 864.6L2119.0 1132.7M-3.0 860.8L2119.0 1127.1M-3.0 857.2L2119.0 1121.6M-3.0 853.5L2119.0 1116.2M-3.0 850.0L2119.0 1110.8M-3.0 846.5L2119.0 1105.5M-3.0 843.0L2119.0 1100.3M-3.0 839.6L2119.0 1095.2M-3.0 836.2L2119.0 1090.1M-3.0 829.5L2119.0 1080.1M-3.0 826.3L2119.0 1075.3M-3.0 823.1L2119.0 1070.4M-3.0 819.9L2119.0 1065.7M-3.0 816.8L2119.0 1061.0M-3.0 813.7L2119.0 1056.3M-3.0 810.7L2119.0 1051.8M-3.0 807.6L2119.0 1047.2M-3.0 804.7L2119.0 1042.8M-3.0 798.8L2119.0 1034.0M-3.0 796.0L2119.0 1029.7M-3.0 793.1L2119.0 1025.4M-3.0 790.4L2119.0 1021.2M-3.0 787.6L2119.0 1017.1M-3.0 784.9L2119.0 1013.0M-3.0 782.2L2119.0 1008.9M-3.0 779.5L2119.0 1004.9M-3.0 776.9L2119.0 1001.0M-3.0 771.7L2119.0 993.2M-3.0 769.1L2119.0 989.4M-3.0 766.6L2119.0 985.6M-3.0 764.1L2119.0 981.9M-3.0 761.7L2119.0 978.2M-3.0 759.3L2119.0 974.5M-3.0 756.9L2119.0 970.9M-3.0 754.5L2119.0 967.3M-3.0 752.1L2119.0 963.8M-3.0 747.5L2119.0 956.9M-3.0 745.2L2119.0 953.4M-3.0 743.0L2119.0 950.1M-3.0 740.8L2119.0 946.7M-3.0 738.6L2119.0 943.4M-3.0 736.4L2119.0 940.1M-3.0 734.2L2119.0 936.9M-3.0 732.1L2119.0 933.7M-3.0 730.0L2119.0 930.5M-3.0 725.8L2119.0 924.3M-3.0 723.8L2119.0 921.2M-3.0 721.8L2119.0 918.2M-3.0 719.8L2119.0 915.2M-3.0 717.8L2119.0 912.2M-3.0 715.8L2119.0 909.2M-3.0 713.9L2119.0 906.3M-3.0 711.9L2119.0 903.4M-3.0 710.0L2119.0 900.6M-3.0 706.3L2119.0 894.9M-3.0 704.4L2119.0 892.1M-3.0 702.6L2119.0 889.4M-3.0 700.8L2119.0 886.7M-3.0 699.0L2119.0 884.0M-3.0 697.2L2119.0 881.3M-3.0 695.5L2119.0 878.7M-3.0 693.7L2119.0 876.0M-3.0 692.0L2119.0 873.4M-3.0 688.6L2119.0 868.3M-3.0 686.9L2119.0 865.8M-3.0 685.2L2119.0 863.3M-3.0 683.6L2119.0 860.8M-3.0 682.0L2119.0 858.4M-3.0 680.3L2119.0 855.9M-3.0 678.7L2119.0 853.5M-3.0 677.1L2119.0 851.1M-3.0 675.6L2119.0 848.8M-3.0 672.5L2119.0 844.1M-3.0 670.9L2119.0 841.8M-3.0 669.4L2119.0 839.5M-3.0 667.9L2119.0 837.3M-3.0 666.4L2119.0 835.0M-3.0 664.9L2119.0 832.8M-3.0 663.5L2119.0 830.6M-3.0 662.0L2119.0 828.4M-3.0 660.6L2119.0 826.2M-3.0 657.7L2119.0 822.0M-3.0 656.3L2119.0 819.9M-3.0 654.9L2119.0 817.8M-3.0 653.5L2119.0 815.7M-3.0 652.2L2119.0 813.6M-3.0 650.8L2119.0 811.6M-3.0 649.5L2119.0 809.6M-3.0 648.1L2119.0 807.6M-3.0 646.8L2119.0 805.6M-3.0 644.2L2119.0 801.7M-3.0 642.9L2119.0 799.7M-3.0 641.6L2119.0 797.8M-3.0 640.4L2119.0 795.9M-3.0 639.1L2119.0 794.0M-3.0 637.9L2119.0 792.1M-3.0 636.6L2119.0 790.3M-3.0 635.4L2119.0 788.4M-3.0 634.2L2119.0 786.6" stroke="#ffffff" stroke-opacity="0.075" stroke-width="1" fill="none"/>
<path mask="url(#m1)" d="M-2.5 430.0L-3.0 430.0M13.4 430.0L-3.0 431.1M29.4 430.0L-3.0 432.2M45.3 430.0L-3.0 433.4M61.2 430.0L-3.0 434.5M77.1 430.0L-3.0 435.7M93.1 430.0L-3.0 436.9M109.0 430.0L-3.0 438.2M124.9 430.0L-3.0 439.5M140.9 430.0L-3.0 440.8M156.8 430.0L-3.0 442.1M172.7 430.0L-3.0 443.5M188.7 430.0L-3.0 444.9M204.6 430.0L-3.0 446.3M220.6 430.0L-3.0 447.8M236.5 430.0L-3.0 449.3M252.5 430.0L-3.0 450.9M268.4 430.0L-3.0 452.4M284.4 430.0L-3.0 454.1M300.3 430.0L-3.0 455.8M316.3 430.0L-3.0 457.5M332.2 430.0L-3.0 459.2M348.2 430.0L-3.0 461.1M364.1 430.0L-3.0 462.9M380.1 430.0L-3.0 464.9M396.1 430.0L-3.0 466.8M412.0 430.0L-3.0 468.9M428.0 430.0L-3.0 471.0M444.0 430.0L-3.0 473.1M460.0 430.0L-3.0 475.4M475.9 430.0L-3.0 477.7M491.9 430.0L-3.0 480.1M507.9 430.0L-3.0 482.5M523.9 430.0L-3.0 485.1M539.8 430.0L-3.0 487.7M555.8 430.0L-3.0 490.4M571.8 430.0L-3.0 493.2M587.8 430.0L-3.0 496.1M603.8 430.0L-3.0 499.1M619.8 430.0L-3.0 502.2M635.8 430.0L-3.0 505.5M651.8 430.0L-3.0 508.8M667.8 430.0L-3.0 512.3M683.8 430.0L-3.0 515.9M699.8 430.0L-3.0 519.7M715.8 430.0L-3.0 523.7M731.8 430.0L-3.0 527.8M747.8 430.0L-3.0 532.0M763.8 430.0L-3.0 536.5M779.8 430.0L-3.0 541.2M795.8 430.0L-3.0 546.0M811.8 430.0L-3.0 551.1M827.8 430.0L-3.0 556.5M843.9 430.0L-3.0 562.1M859.9 430.0L-3.0 568.0M875.9 430.0L-3.0 574.2M891.9 430.0L-3.0 580.8M907.9 430.0L-3.0 587.7M924.0 430.0L-3.0 595.0M940.0 430.0L-3.0 602.7M956.0 430.0L-3.0 610.9M972.1 430.0L-3.0 619.6M988.1 430.0L-3.0 628.8M1004.1 430.0L-3.0 638.6M1020.2 430.0L-3.0 649.2M1036.2 430.0L-3.0 660.4M1052.3 430.0L-3.0 672.5M1068.3 430.0L-3.0 685.5M1084.3 430.0L-3.0 699.5M1100.4 430.0L-3.0 714.6M1116.4 430.0L-3.0 731.1M1132.5 430.0L-3.0 749.0M1148.5 430.0L-3.0 768.6M1164.6 430.0L-3.0 790.1M1180.7 430.0L-3.0 813.9M1196.7 430.0L-3.0 840.2M1212.8 430.0L-3.0 869.5M1228.8 430.0L-3.0 902.4M1244.9 430.0L-3.0 939.5M1261.0 430.0L-3.0 981.8M1277.0 430.0L-3.0 1030.5M1293.1 430.0L-3.0 1086.9M1309.2 430.0L-3.0 1153.2M1325.3 430.0L-3.0 1232.3M1341.3 430.0L-3.0 1328.1M1357.4 430.0L84.9 1381.0M1373.5 430.0L252.0 1381.0M1389.6 430.0L419.2 1381.0M1405.7 430.0L586.3 1381.0M1421.7 430.0L753.5 1381.0M1437.8 430.0L920.6 1381.0M1453.9 430.0L1087.8 1381.0M1470.0 430.0L1255.1 1381.0M1486.1 430.0L1422.3 1381.0M1502.2 430.0L1589.6 1381.0M1518.3 430.0L1756.8 1381.0M1534.4 430.0L1924.1 1381.0M1550.5 430.0L2091.5 1381.0M1566.6 430.0L2119.0 1188.9M1582.7 430.0L2119.0 1034.7M1598.8 430.0L2119.0 927.3M1614.9 430.0L2119.0 848.3M1631.0 430.0L2119.0 787.7M1647.1 430.0L2119.0 739.8M1663.3 430.0L2119.0 700.9M1679.4 430.0L2119.0 668.7M1695.5 430.0L2119.0 641.7M1711.6 430.0L2119.0 618.6M1727.7 430.0L2119.0 598.7M1743.9 430.0L2119.0 581.4M1760.0 430.0L2119.0 566.1M1776.1 430.0L2119.0 552.6M1792.2 430.0L2119.0 540.5M1808.4 430.0L2119.0 529.7M1824.5 430.0L2119.0 519.9M1840.6 430.0L2119.0 511.1M1856.8 430.0L2119.0 503.0M1872.9 430.0L2119.0 495.6M1889.1 430.0L2119.0 488.8M1905.2 430.0L2119.0 482.5M1921.3 430.0L2119.0 476.7M1937.5 430.0L2119.0 471.3M1953.6 430.0L2119.0 466.3M1969.8 430.0L2119.0 461.7M1985.9 430.0L2119.0 457.3M2002.1 430.0L2119.0 453.2M2018.3 430.0L2119.0 449.4M2034.4 430.0L2119.0 445.8M2050.6 430.0L2119.0 442.4M2066.7 430.0L2119.0 439.2M2082.9 430.0L2119.0 436.2M2099.1 430.0L2119.0 433.3M2115.2 430.0L2119.0 430.6M-3.0 1263.1L530.9 1381.0M-3.0 1161.5L1112.7 1381.0M-3.0 1079.9L1694.7 1381.0M-3.0 1012.8L2119.0 1355.5M-3.0 956.7L2119.0 1271.3M-3.0 909.2L2119.0 1199.8M-3.0 868.3L2119.0 1138.4M-3.0 832.8L2119.0 1085.1M-3.0 801.7L2119.0 1038.4M-3.0 774.3L2119.0 997.1M-3.0 749.8L2119.0 960.3M-3.0 727.9L2119.0 927.4M-3.0 708.1L2119.0 897.7M-3.0 690.3L2119.0 870.9M-3.0 674.0L2119.0 846.4M-3.0 659.1L2119.0 824.1M-3.0 645.5L2119.0 803.6M-3.0 633.0L2119.0 784.8M-3.0 621.4L2119.0 767.3M-3.0 610.6L2119.0 751.2M-3.0 600.6L2119.0 736.2M-3.0 591.3L2119.0 722.2M-3.0 582.7L2119.0 709.2M-3.0 574.5L2119.0 697.0M-3.0 566.9L2119.0 685.5M-3.0 559.8L2119.0 674.8M-3.0 553.0L2119.0 664.7M-3.0 546.7L2119.0 655.1M-3.0 540.7L2119.0 646.1M-3.0 535.0L2119.0 637.5M-3.0 529.6L2119.0 629.5M-3.0 524.5L2119.0 621.8M-3.0 519.6L2119.0 614.5M-3.0 515.0L2119.0 607.5M-3.0 510.6L2119.0 600.9M-3.0 506.4L2119.0 594.6M-3.0 502.4L2119.0 588.6M-3.0 498.6L2119.0 582.8M-3.0 494.9L2119.0 577.3M-3.0 491.4L2119.0 572.1M-3.0 488.0L2119.0 567.0M-3.0 484.8L2119.0 562.2M-3.0 481.7L2119.0 557.5M-3.0 478.7L2119.0 553.0M-3.0 475.9L2119.0 548.7M-3.0 473.1L2119.0 544.6M-3.0 470.5L2119.0 540.6M-3.0 467.9L2119.0 536.8M-3.0 465.4L2119.0 533.1M-3.0 463.1L2119.0 529.5M-3.0 460.8L2119.0 526.0M-3.0 458.5L2119.0 522.7M-3.0 456.4L2119.0 519.5M-3.0 454.3L2119.0 516.3M-3.0 452.3L2119.0 513.3M-3.0 450.4L2119.0 510.4M-3.0 448.5L2119.0 507.6M-3.0 446.6L2119.0 504.8M-3.0 444.9L2119.0 502.1M-3.0 443.1L2119.0 499.6M-3.0 441.5L2119.0 497.1M-3.0 439.9L2119.0 494.6M-3.0 438.3L2119.0 492.3M-3.0 436.7L2119.0 490.0M-3.0 435.3L2119.0 487.7M-3.0 433.8L2119.0 485.5M-3.0 432.4L2119.0 483.4M-3.0 431.0L2119.0 481.4M10.0 430.0L2119.0 479.4M66.4 430.0L2119.0 477.4M123.0 430.0L2119.0 475.5M179.5 430.0L2119.0 473.6M236.0 430.0L2119.0 471.8M292.6 430.0L2119.0 470.1M349.2 430.0L2119.0 468.3M405.9 430.0L2119.0 466.7M462.5 430.0L2119.0 465.0M519.2 430.0L2119.0 463.4M575.9 430.0L2119.0 461.9M632.6 430.0L2119.0 460.3M689.4 430.0L2119.0 458.8M746.1 430.0L2119.0 457.4M802.9 430.0L2119.0 455.9M859.8 430.0L2119.0 454.5M916.6 430.0L2119.0 453.2M973.5 430.0L2119.0 451.8M1030.3 430.0L2119.0 450.5M1087.3 430.0L2119.0 449.3M1144.2 430.0L2119.0 448.0M1201.2 430.0L2119.0 446.8M1258.1 430.0L2119.0 445.6M1315.2 430.0L2119.0 444.4M1372.2 430.0L2119.0 443.2M1429.2 430.0L2119.0 442.1M1486.3 430.0L2119.0 441.0M1543.4 430.0L2119.0 439.9M1600.6 430.0L2119.0 438.8M1657.7 430.0L2119.0 437.8M1714.9 430.0L2119.0 436.7M1772.1 430.0L2119.0 435.7M1829.3 430.0L2119.0 434.7M1886.6 430.0L2119.0 433.8M1943.8 430.0L2119.0 432.8M2001.1 430.0L2119.0 431.9M2058.4 430.0L2119.0 431.0M2115.8 430.0L2119.0 430.1" stroke="#ffffff" stroke-opacity="0.12" stroke-width="1.1" fill="none"/>
<path d="M1363.4 439.4L1105 657" stroke="url(#gg)" stroke-width="1.6" fill="none"/>
<path d="M1000 744L252.0 1381.0" stroke="#6ea51b" stroke-width="2" fill="none"/>
<path d="M0 774.8L2113 996.2" stroke="#b93a4e" stroke-width="2" fill="none"/>
<polygon points="212.2,612.8 242.5,613.1 2050.8,728.5 2027.5,855.6 1388.3,802.5 1380.7,780.7 222.5,687.6" fill="url(#wallg)" />
<polygon points="289.1,602.6 2004.5,705.9 2050.8,728.5 242.5,613.1" fill="#808284" />
<polygon points="2004.5,705.9 2031.0,726.7 2050.8,728.5" fill="#4a4b4c" />
<polyline points="212.2,619.0 600.0,644.1 1103.6,675.6" fill="none" stroke="#6f7172" stroke-width="1" />
<polyline points="1143.6,680.0 1740.0,719.2 2049.0,738.6" fill="none" stroke="#6f7172" stroke-width="1" />
<polyline points="242.5,613.1 2050.8,728.5" fill="none" stroke="#8f9292" stroke-width="1" />
<polygon points="222.5,687.6 1380.7,780.7 1293.2,1184.0 19.6,989.3 171.0,920.9 935.6,1022.5 1081.8,838.4 43.6,740.2" fill="#828486" />
<polygon points="43.6,740.2 1081.8,838.4 1064.4,860.2 46.1,757.6" fill="#979a9a" />
<polygon points="19.6,989.3 1293.2,1184.0 1291.9,1221.2 23.5,1017.4" fill="#999c9b" />
<polygon points="43.6,740.2 46.1,757.6 44.0,750.0" fill="#8b8e8e" />
<polygon points="987.4,749.5 987.4,761.8 1133.6,773.6 1133.6,689.6 1105.8,687.3 1105.3,676.5" fill="#999c9b" />
<polyline points="987.4,750.0 987.4,761.8 1133.6,773.6" fill="none" stroke="#6d6e6f" stroke-width="1" />
<polygon points="1112.8,668.4 1143.6,671.0 1143.6,677.0 1132.0,678.6 1107.6,677.4 1103.8,675.4" fill="#828486" />
<polygon points="1107.6,677.4 1131.7,678.4 1131.7,688.6 1107.6,687.5" fill="#a0a3a2" stroke="#6a6b6c" stroke-width="0.7"/>
<polygon points="1133.6,689.6 1143.0,681.1 1143.0,762.3 1133.6,773.6" fill="#3e3d3e" />
<polyline points="1133.0,677.6 1143.0,668.6" fill="none" stroke="#5c5d5e" stroke-width="3.2" />
<polyline points="1133.0,677.6 1143.0,668.6" fill="none" stroke="#a9acab" stroke-width="1.9" />
<polyline points="1133.0,683.6 1143.0,674.6" fill="none" stroke="#5c5d5e" stroke-width="3.2" />
<polyline points="1133.0,683.6 1143.0,674.6" fill="none" stroke="#a9acab" stroke-width="1.9" />
<rect x="1131.4" y="675.5" width="3.2" height="14.5" fill="#a9acab" stroke="#5c5d5e" stroke-width="0.7"/>
<rect x="1140.6" y="667.0" width="3.2" height="14.5" fill="#a9acab" stroke="#5c5d5e" stroke-width="0.7"/>
<polyline points="988.3,748.4 1105.3,677.9" fill="none" stroke="#5c5d5e" stroke-width="3.4" />
<polyline points="988.3,748.4 1105.3,677.9" fill="none" stroke="#a9acab" stroke-width="2.0" />
<polyline points="989.2,756.0 1105.8,686.2" fill="none" stroke="#5c5d5e" stroke-width="3.4" />
<polyline points="989.2,756.0 1105.8,686.2" fill="none" stroke="#a9acab" stroke-width="2.0" />
<rect x="986.8" y="746.8" width="3.4" height="15.0" fill="#a9acab" stroke="#5c5d5e" stroke-width="0.7"/>
<rect x="1015.1" y="729.4" width="3.4" height="12.4" fill="#a9acab" stroke="#5c5d5e" stroke-width="0.7"/>
<rect x="1044.3" y="711.5" width="3.4" height="11.9" fill="#a9acab" stroke="#5c5d5e" stroke-width="0.7"/>
<rect x="1074.1" y="693.1" width="3.4" height="12.4" fill="#a9acab" stroke="#5c5d5e" stroke-width="0.7"/>
<rect x="1104.3" y="674.6" width="3.4" height="13.4" fill="#a9acab" stroke="#5c5d5e" stroke-width="0.7"/>
<polyline points="106.4,726.6 164.0,710.2 600.0,748.1 1210.0,801.2 1097.2,980.1 1014.8,1118.3 81.3,978.1 171.0,936.0 947.5,1042.6 1120.3,817.9 600.0,770.4 106.4,726.6" fill="none" stroke="#636466" stroke-width="0.9" />
<polyline points="120.0,727.5 168.0,713.6 600.0,751.8 1204.0,804.2 1093.0,978.0 1010.0,1114.5 92.0,977.5 174.0,939.5 950.0,1046.0 1123.0,821.0 600.0,774.5 120.0,727.5" fill="none" stroke="#707274" stroke-width="0.7" />
<polyline points="1131.8,801.2 1186.9,805.0 1176.7,822.5 1120.3,817.9 1131.8,801.2" fill="none" stroke="#636466" stroke-width="0.8" />
<polyline points="947.5,1045.4 1026.0,1058.3 1000.8,1098.7 915.0,1084.6 947.5,1045.4" fill="none" stroke="#636466" stroke-width="0.8" />
<path d="M1207 802.8L1095 979" stroke="#6b6c6e" stroke-width="3.4" stroke-dasharray="1 3.2" fill="none" opacity="0.8"/>
<path d="M1095 979L1012.4 1116.4" stroke="#6b6c6e" stroke-width="3.4" stroke-dasharray="1 3.2" fill="none" opacity="0.8"/>
<path d="M1121.6 819.4L993.5 979" stroke="#6b6c6e" stroke-width="3.4" stroke-dasharray="1 3.2" fill="none" opacity="0.8"/>
<path d="M993.5 979L949 1044" stroke="#6b6c6e" stroke-width="3.4" stroke-dasharray="1 3.2" fill="none" opacity="0.8"/>
<path d="M168.8 723.6L174.8 724.2M212.5 727.5L218.4 728.0M256.1 731.3L262.1 731.8M299.7 735.1L305.7 735.6M343.4 738.9L349.4 739.4M387.0 742.7L393.0 743.3M430.6 746.6L436.6 747.1M474.3 750.4L480.3 750.9M517.9 754.2L523.9 754.7M561.6 758.0L567.5 758.5M605.2 761.8L611.2 762.4M648.8 765.6L654.8 766.2M692.5 769.5L698.4 770.0M736.1 773.3L742.1 773.8M779.7 777.1L785.7 777.6M823.4 780.9L829.4 781.4M867.0 784.7L873.0 785.3M910.6 788.6L916.6 789.1M954.3 792.4L960.3 792.9M997.9 796.2L1003.9 796.7M1041.6 800.0L1047.5 800.5M1085.2 803.8L1091.2 804.4" stroke="#6a6b6d" stroke-width="1.6" fill="none"/>
<path d="M156.3 957.7L165.2 958.9M217.9 966.3L226.8 967.5M279.4 974.9L288.3 976.2M340.9 983.5L349.8 984.8M402.5 992.1L411.4 993.4M464.0 1000.8L472.9 1002.0M525.5 1009.4L534.5 1010.6M587.1 1018.0L596.0 1019.2M648.6 1026.6L657.5 1027.9M710.2 1035.2L719.1 1036.5M771.7 1043.8L780.6 1045.1M833.2 1052.5L842.1 1053.7M894.8 1061.1L903.7 1062.3" stroke="#6a6b6d" stroke-width="1.6" fill="none"/>
<path d="M1140.2 843.5L1137.5 847.7M1123.9 868.7L1121.1 872.9M1107.5 894.0L1104.8 898.2M1091.2 919.2L1088.5 923.4M1074.9 944.4L1072.1 948.6M1058.5 969.6L1055.8 973.8M1042.2 994.8L1039.5 999.0M1025.9 1020.1L1023.1 1024.3M1009.5 1045.3L1006.8 1049.5" stroke="#6a6b6d" stroke-width="1.6" fill="none"/>
<linearGradient id="sideg" x1="1300" y1="1100" x2="1312" y2="1103" gradientUnits="userSpaceOnUse"><stop offset="0" stop-color="#505153"/><stop offset="1" stop-color="#6d6f70"/></linearGradient>
<polygon points="1293.2,1184.0 1380.7,780.7 1388.3,802.5 1291.9,1221.2" fill="#5e5f61" />
<polygon points="1379.4,779.1 1387.5,779.7 1337.0,1000.0 1321.5,1075.5 1306.0,1071.5 1324.1,1000.0" fill="#8b8d8e" />
<polyline points="1379.4,779.1 1324.1,1000.0 1306.0,1071.5" fill="none" stroke="#5d5e60" stroke-width="1" />
<polygon points="1385.2,792.0 1382.2,801.0 1382.2,811.0 1384.7,818.0" fill="#47484a" />
<polygon points="1384.7,789.0 1390.4,788.0 1390.4,819.0 1384.7,819.0" fill="#a1a4a4" />
<polygon points="1378.5,815.5 1375.5,824.5 1375.5,834.5 1378.0,841.5" fill="#47484a" />
<polygon points="1378.0,812.5 1383.4,811.5 1383.4,842.5 1378.0,842.5" fill="#a1a4a4" />
<polygon points="1373.1,839.0 1370.1,848.0 1370.1,861.0 1372.6,868.0" fill="#47484a" />
<polygon points="1372.6,836.0 1378.2,835.0 1378.2,869.0 1372.6,869.0" fill="#a1a4a4" />
<polygon points="1366.5,865.7 1363.5,874.7 1363.5,889.4 1366.0,896.4" fill="#47484a" />
<polygon points="1366.0,862.7 1371.8,861.7 1371.8,897.4 1366.0,897.4" fill="#a1a4a4" />
<polygon points="1359.3,895.6 1356.3,904.6 1356.3,921.8 1358.8,928.8" fill="#47484a" />
<polygon points="1358.8,892.6 1365.3,891.6 1365.3,929.8 1358.8,929.8" fill="#a1a4a4" />
<polygon points="1351.3,929.5 1348.3,938.5 1348.3,959.0 1350.8,966.0" fill="#47484a" />
<polygon points="1350.8,926.5 1357.2,925.5 1357.2,967.0 1350.8,967.0" fill="#a1a4a4" />
<polygon points="1341.5,966.7 1338.5,975.7 1338.5,1000.0 1341.0,1007.0" fill="#47484a" />
<polygon points="1341.0,963.7 1348.0,962.7 1348.0,1008.0 1341.0,1008.0" fill="#a1a4a4" />
<polygon points="1330.7,1009.0 1327.7,1018.0 1327.7,1047.3 1330.2,1054.3" fill="#47484a" />
<polygon points="1330.2,1006.0 1338.0,1005.0 1338.0,1055.3 1330.2,1055.3" fill="#a1a4a4" />
<polygon points="1318.5,1058.0 1315.5,1067.0 1315.5,1100.7 1318.0,1107.7" fill="#47484a" />
<polygon points="1318.0,1055.0 1326.0,1054.0 1326.0,1108.7 1318.0,1108.7" fill="#a1a4a4" />
<path d="M1365 800l5 -2v-4a2.2 2.2 0 0 1 4.4 0v5l2 2l-4 1.6z" fill="#b5b7b7" stroke="#66686a" stroke-width="0.7"/>
<path d="M1356.9 829.9l5 -2v-4a2.2 2.2 0 0 1 4.4 0v5l2 2l-4 1.6z" fill="#b5b7b7" stroke="#66686a" stroke-width="0.7"/>
<path d="M1348 864.7l5 -2v-4a2.2 2.2 0 0 1 4.4 0v5l2 2l-4 1.6z" fill="#b5b7b7" stroke="#66686a" stroke-width="0.7"/>
<path d="M1337.5 903.5l5 -2v-4a2.2 2.2 0 0 1 4.4 0v5l2 2l-4 1.6z" fill="#b5b7b7" stroke="#66686a" stroke-width="0.7"/>
<path d="M1326.2 948.7l5 -2v-4a2.2 2.2 0 0 1 4.4 0v5l2 2l-4 1.6z" fill="#b5b7b7" stroke="#66686a" stroke-width="0.7"/>
<path d="M1313.2 1000.7l5 -2v-4a2.2 2.2 0 0 1 4.4 0v5l2 2l-4 1.6z" fill="#b5b7b7" stroke="#66686a" stroke-width="0.7"/>
<path d="M1296.6 1064l5 -2v-4a2.2 2.2 0 0 1 4.4 0v5l2 2l-4 1.6z" fill="#b5b7b7" stroke="#66686a" stroke-width="0.7"/>
<polyline points="43.6,740.2 1081.8,838.4 935.6,1022.5" fill="none" stroke="#8d9091" stroke-width="0.8" />
<circle cx="1255.5" cy="1071.2" r="14" fill="none" stroke="#fff" stroke-width="1.6"/>
<circle cx="1255.5" cy="1071.2" r="14" fill="none" stroke="#ec2b2b" stroke-width="1.6" stroke-dasharray="5.5 5.5" stroke-dashoffset="2.7"/>
<path d="M1227.5 1068.2l21 3M1263.5 1072.2l21 3M1257.0 1044.2l-1 22M1254.5 1076.2l-1 22" stroke="#111" stroke-width="1.1" fill="none"/>
<g transform="translate(1263.5,1177)" fill="none" stroke="#111" stroke-width="1"><path d="M1 7l6-1.5l8 1.5v7l-7 1.5l-7-1.5zM1 7l7 8M15 7l-7 8"/><path d="M5 5l3-4l4 3.5z" fill="#111"/></g>
</svg></div></div>
<div class="b" style="left:1.20px;top:79.00px;width:2112.40px;height:37.50px;background:#303030;border-radius:7px 7px 0 0;"></div>
<div class="b" style="left:1.20px;top:116.50px;width:213.80px;height:36.00px;background:#303030;border-radius:0 0 8px 0;"></div>
<div class="b" style="left:1994.00px;top:116.50px;width:119.60px;height:36.00px;background:#303030;border-radius:0 0 0 8px;"></div>
<svg class="b" style="left:215px;top:116.5px" width="8" height="8"><path d="M0 0H8A8 8 0 0 0 0 8z" fill="#303030"/></svg>
<svg class="b" style="left:1986px;top:116.5px" width="8" height="8"><path d="M8 0H0A8 8 0 0 1 8 8z" fill="#303030"/></svg>
<div class="b" style="left:12.60px;top:82.70px;width:44.70px;height:27.70px;background:#282828;border-radius:6px;border:1px solid #3a3a3a;"></div>
<svg class="b" style="left:18.20px;top:85.60px;" width="22.40" height="22.40" viewBox="0 0 16 16"><path d="M2.2 7.9h9M1.4 12.1h14M5.9 5.9L3.6 15.2M12.4 9L13.4 15.2" fill="none" stroke="#dcdcdc" stroke-width="1.05" stroke-linecap="round" stroke-linejoin="round" /><circle cx="12.3" cy="4.2" r="3.7" fill="#dcdcdc"/><path d="M10.2 3.6a2.2 2.2 0 0 1 1.7-1.6" fill="none" stroke="#282828" stroke-width="0.8" stroke-linecap="round" stroke-linejoin="round" /></svg>
<svg class="b" style="left:37.50px;top:86.60px;" width="23.00" height="23.00" viewBox="0 0 16 16"><path d="M5.3 6.7L8 9.4L10.7 6.7" fill="none" stroke="#dcdcdc" stroke-width="1.15" stroke-linecap="round" stroke-linejoin="round" /></svg>
<div class="b" style="left:65.70px;top:82.70px;width:162.60px;height:27.70px;background:#282828;border-radius:6px;border:1px solid #3a3a3a;"></div>
<svg class="b" style="left:71.60px;top:85.60px;" width="22.40" height="22.40" viewBox="0 0 16 16"><path d="M1.4 4.6v-3.2h3.2M11.4 1.4h3.2v3.2M14.6 11.4v3.2h-3.2M4.6 14.6H1.4v-3.2" fill="none" stroke="#e4e4e4" stroke-width="1.0" stroke-linecap="round" stroke-linejoin="round" opacity="0.75"/><rect x="3.6" y="3.6" width="8.8" height="8.8" rx="0.8" fill="#e4e4e4"/></svg>
<span class="t" style="left:104.40px;top:88px;font-size:17px;line-height:17px;color:#e6e6e6;letter-spacing:0.202px;">Object Mode</span>
<svg class="b" style="left:207.50px;top:86.80px;" width="23.00" height="23.00" viewBox="0 0 16 16"><path d="M5.3 6.7L8 9.4L10.7 6.7" fill="none" stroke="#dcdcdc" stroke-width="1.15" stroke-linecap="round" stroke-linejoin="round" /></svg>
<span class="t" style="left:247.30px;top:88px;font-size:17px;line-height:17px;color:#e0e0e0;letter-spacing:0.214px;">View</span>
<span class="t" style="left:307.40px;top:88px;font-size:17px;line-height:17px;color:#e0e0e0;letter-spacing:0.192px;">Select</span>
<span class="t" style="left:379.00px;top:88px;font-size:17px;line-height:17px;color:#e0e0e0;letter-spacing:0.117px;">Add</span>
<span class="t" style="left:432.00px;top:88px;font-size:17px;line-height:17px;color:#e0e0e0;letter-spacing:0.278px;">Object</span>
<div class="b" style="left:878.00px;top:82.70px;width:112.00px;height:27.70px;background:#282828;border-radius:6px;border:1px solid #3a3a3a;"></div>
<svg class="b" style="left:883.60px;top:85.40px;" width="22.60" height="22.60" viewBox="0 0 16 16"><path d="M3.4 13V1.8M1.4 3.8L3.4 1.6L5.4 3.8M3.6 12.8h10.8M12.4 10.8l2.2 2l-2.2 2" fill="none" stroke="#e0e0e0" stroke-width="1.1" stroke-linecap="round" stroke-linejoin="round" /><path d="M4.4 11.8L11 5.2M8.2 5h3v3" fill="none" stroke="#e0e0e0" stroke-width="1.0" stroke-linecap="round" stroke-linejoin="round" opacity="0.7"/><circle cx="3.4" cy="12.8" r="1.5" fill="#282828" stroke="#e0e0e0" stroke-width="1.05"/></svg>
<span class="t" style="left:916.40px;top:88px;font-size:17px;line-height:17px;color:#e6e6e6;letter-spacing:-0.057px;">Global</span>
<svg class="b" style="left:969.90px;top:86.80px;" width="23.00" height="23.00" viewBox="0 0 16 16"><path d="M5.3 6.7L8 9.4L10.7 6.7" fill="none" stroke="#dcdcdc" stroke-width="1.15" stroke-linecap="round" stroke-linejoin="round" /></svg>
<div class="b" style="left:999.00px;top:82.70px;width:44.00px;height:27.70px;background:#282828;border-radius:6px;border:1px solid #3a3a3a;"></div>
<svg class="b" style="left:1004.40px;top:85.40px;" width="22.60" height="22.60" viewBox="0 0 16 16"><path d="M5.3999999999999995 5.6a4.2 4.2 0 1 0 8.4 0a4.2 4.2 0 1 0 -8.4 0z" fill="none" stroke="#e0e0e0" stroke-width="1.15" stroke-linecap="round" stroke-linejoin="round" stroke-dasharray="20 6.4" stroke-dashoffset="-3"/><path d="M2.4 11a3.6 3.6 0 1 0 7.2 0a3.6 3.6 0 1 0 -7.2 0z" fill="none" stroke="#e0e0e0" stroke-width="1.15" stroke-linecap="round" stroke-linejoin="round" /><circle cx="8" cy="8" r="1.5" fill="#e0e0e0"/></svg>
<svg class="b" style="left:1022.80px;top:86.80px;" width="23.00" height="23.00" viewBox="0 0 16 16"><path d="M5.3 6.7L8 9.4L10.7 6.7" fill="none" stroke="#dcdcdc" stroke-width="1.15" stroke-linecap="round" stroke-linejoin="round" /></svg>
<div class="b" style="left:1052.00px;top:82.70px;width:73.00px;height:27.70px;background:#282828;border-radius:6px;border:1px solid #3a3a3a;"></div>
<div class="b" style="left:1052.00px;top:82.70px;width:27.50px;height:27.70px;background:#545454;border-radius:6px 0 0 6px;"></div>
<svg class="b" style="left:1054.40px;top:85.20px;" width="22.80" height="22.80" viewBox="0 0 16 16"><path d="M3 5.6L6.6 3a4.9 4.9 0 0 1 6.4 7.2L9.4 13.6L7.2 11.4L10.6 8a1.8 1.8 0 0 0-2.4-2.6L5 8z" fill="none" stroke="#c8c8c8" stroke-width="1.1" stroke-linecap="round" stroke-linejoin="round" /></svg>
<svg class="b" style="left:1082.40px;top:85.00px;" width="22.60" height="22.60" viewBox="0 0 16 16"><path d="M1.6 8.6v6M14 5.6v9M1.6 11.6H14M5.6 10v3.2M9.8 10v3.2" fill="none" stroke="#e0e0e0" stroke-width="1.2" stroke-linecap="round" stroke-linejoin="round" /><rect x="10.6" y="1" width="3.8" height="3.8" rx="0.6" fill="#e0e0e0"/></svg>
<svg class="b" style="left:1105.20px;top:86.80px;" width="23.00" height="23.00" viewBox="0 0 16 16"><path d="M5.3 6.7L8 9.4L10.7 6.7" fill="none" stroke="#dcdcdc" stroke-width="1.15" stroke-linecap="round" stroke-linejoin="round" /></svg>
<div class="b" style="left:1134.00px;top:82.70px;width:73.00px;height:27.70px;background:#282828;border-radius:6px;border:1px solid #3a3a3a;"></div>
<div class="b" style="left:1134.00px;top:82.70px;width:27.00px;height:27.70px;background:#545454;border-radius:6px 0 0 6px;"></div>
<svg class="b" style="left:1136.20px;top:85.20px;" width="22.80" height="22.80" viewBox="0 0 16 16"><path d="M1.5999999999999996 8a6.4 6.4 0 1 0 12.8 0a6.4 6.4 0 1 0 -12.8 0z" fill="none" stroke="#d8d8d8" stroke-width="1.0" stroke-linecap="round" stroke-linejoin="round" opacity="0.8"/><circle cx="8" cy="8" r="2.1" fill="#d8d8d8"/></svg>
<svg class="b" style="left:1167.60px;top:85.40px;" width="22.40" height="22.40" viewBox="0 0 16 16"><path d="M1.4 13.6C5.4 13.6 5.6 2.6 8 2.6S10.6 13.6 14.6 13.6" fill="none" stroke="#6e6e6e" stroke-width="1.1" stroke-linecap="round" stroke-linejoin="round" /></svg>
<svg class="b" style="left:1187.20px;top:86.80px;" width="23.00" height="23.00" viewBox="0 0 16 16"><path d="M5.3 6.7L8 9.4L10.7 6.7" fill="none" stroke="#5c5c5c" stroke-width="1.15" stroke-linecap="round" stroke-linejoin="round" /></svg>
<div class="b" style="left:1743.90px;top:82.70px;width:44.10px;height:27.70px;background:#282828;border-radius:6px;border:1px solid #3a3a3a;"></div>
<svg class="b" style="left:1745.60px;top:85.20px;" width="23.00" height="23.00" viewBox="0 0 16 16"><path d="M3.4 5.6Q9 0 15.4 5.6Q9 10.6 3.4 5.6zM6.699999999999999 5.2a2.5 2.5 0 1 0 5.0 0a2.5 2.5 0 1 0 -5.0 0zM8.1 5.2a1.1 1.1 0 1 0 2.2 0a1.1 1.1 0 1 0 -2.2 0z" fill="#e4e4e4" fill-rule="evenodd" /><path d="M0.8 7.6L9 10.4L5.2 11.6L3.6 15.4z" fill="#e4e4e4" fill-rule="evenodd" /></svg>
<svg class="b" style="left:1767.80px;top:86.80px;" width="23.00" height="23.00" viewBox="0 0 16 16"><path d="M5.3 6.7L8 9.4L10.7 6.7" fill="none" stroke="#dcdcdc" stroke-width="1.15" stroke-linecap="round" stroke-linejoin="round" /></svg>
<div class="b" style="left:1796.90px;top:82.70px;width:56.00px;height:27.70px;background:#282828;border-radius:6px;border:1px solid #3a3a3a;"></div>
<div class="b" style="left:1796.90px;top:82.70px;width:27.40px;height:27.70px;background:#545454;border-radius:6px 0 0 6px;"></div>
<svg class="b" style="left:1799.20px;top:85.20px;" width="22.80" height="22.80" viewBox="0 0 16 16"><path d="M2.2 4.2C8 4 12 8 12.4 14.4M3.6 12.6L14 2.2M9.8 1.8h4.6v4.6" fill="none" stroke="#dcdcdc" stroke-width="1.1" stroke-linecap="round" stroke-linejoin="round" /><circle cx="2.8" cy="13.2" r="1.7" fill="none" stroke="#dcdcdc" stroke-width="1.1"/></svg>
<svg class="b" style="left:1827.20px;top:86.80px;" width="23.00" height="23.00" viewBox="0 0 16 16"><path d="M5.3 6.7L8 9.4L10.7 6.7" fill="none" stroke="#5c5c5c" stroke-width="1.15" stroke-linecap="round" stroke-linejoin="round" /></svg>
<div class="b" style="left:1862.00px;top:82.70px;width:56.50px;height:27.70px;background:#282828;border-radius:6px;border:1px solid #3a3a3a;"></div>
<div class="b" style="left:1862.00px;top:82.70px;width:27.00px;height:27.70px;background:#4772b3;border-radius:6px 0 0 6px;"></div>
<svg class="b" style="left:1864.40px;top:85.20px;" width="22.80" height="22.80" viewBox="0 0 16 16"><path d="M1.7000000000000002 10.4a4.3 4.3 0 1 0 8.6 0a4.3 4.3 0 1 0 -8.6 0z" fill="none" stroke="#ffffff" stroke-width="1.2" stroke-linecap="round" stroke-linejoin="round" /><circle cx="10" cy="6" r="5.2" fill="#ffffff"/><path d="M5.25 6.17A4.3 4.3 0 0 1 10.23 11.15" fill="none" stroke="#4772b3" stroke-width="1.3" stroke-linecap="round" stroke-linejoin="round" /></svg>
<svg class="b" style="left:1892.30px;top:86.80px;" width="23.00" height="23.00" viewBox="0 0 16 16"><path d="M5.3 6.7L8 9.4L10.7 6.7" fill="none" stroke="#dcdcdc" stroke-width="1.15" stroke-linecap="round" stroke-linejoin="round" /></svg>
<div class="b" style="left:1927.00px;top:82.70px;width:27.00px;height:27.70px;background:#545454;border-radius:6px;"></div>
<svg class="b" style="left:1929.20px;top:85.20px;" width="22.80" height="22.80" viewBox="0 0 16 16"><path d="M5 4.4V1.8h9.2V11h-2.6M1.8 5h9.2v9.2H1.8z" fill="none" stroke="#d2d2d2" stroke-width="1.15" stroke-linecap="round" stroke-linejoin="round" /><path d="M5 7.6v3.2h3" fill="none" stroke="#d2d2d2" stroke-width="1.0" stroke-linecap="round" stroke-linejoin="round" stroke-dasharray="1.6 1.2"/></svg>
<div class="b" style="left:1963.00px;top:82.70px;width:140.00px;height:27.70px;background:#282828;border-radius:6px;border:1px solid #3a3a3a;"></div>
<div class="b" style="left:1963px;top:82.5px;width:111px;height:28.0px;border-radius:6px 0 0 6px;overflow:hidden"><div class="b" style="left:0px;top:0;width:28px;height:100%;background:#545454"></div><div class="b" style="left:28px;top:0;width:27px;height:100%;background:#4772b3"></div><div class="b" style="left:55px;top:0;width:28px;height:100%;background:#545454"></div><div class="b" style="left:83px;top:0;width:28px;height:100%;background:#545454"></div><div class="b" style="left:28px;top:0;width:1px;height:100%;background:#3a3a3a"></div><div class="b" style="left:55px;top:0;width:1px;height:100%;background:#3a3a3a"></div><div class="b" style="left:83px;top:0;width:1px;height:100%;background:#3a3a3a"></div></div>
<svg class="b" style="left:1965.58px;top:85.20px;" width="22.60" height="22.60" viewBox="0 0 16 16"><path d="M1.5999999999999996 8a6.4 6.4 0 1 0 12.8 0a6.4 6.4 0 1 0 -12.8 0zM1.6 8h12.8M8 1.6C5 4 5 12 8 14.4M8 1.6C11 4 11 12 8 14.4" fill="none" stroke="#c8c8c8" stroke-width="1.0" stroke-linecap="round" stroke-linejoin="round" /></svg>
<svg class="b" style="left:1993.33px;top:85.20px;" width="22.60" height="22.60" viewBox="0 0 16 16"><circle cx="8" cy="8" r="6.3" fill="#dfe7f6" stroke="#fff" stroke-width="1"/></svg>
<svg class="b" style="left:2021.08px;top:85.20px;" width="22.60" height="22.60" viewBox="0 0 16 16"><path d="M1.5999999999999996 8a6.4 6.4 0 1 0 12.8 0a6.4 6.4 0 1 0 -12.8 0z" fill="none" stroke="#c8c8c8" stroke-width="1.0" stroke-linecap="round" stroke-linejoin="round" /><path d="M8 8V1.6A6.4 6.4 0 0 0 1.6 8z" fill="#c8c8c8" fill-rule="evenodd" opacity="0.85"/><path d="M8 8h6.4M8 8v6.4M9.6 14l4.4-4.4M11.8 13l1.4-1.4" fill="none" stroke="#c8c8c8" stroke-width="0.8" stroke-linecap="round" stroke-linejoin="round" opacity="0.7"/></svg>
<svg class="b" style="left:2048.82px;top:85.20px;" width="22.60" height="22.60" viewBox="0 0 16 16"><path d="M1.5999999999999996 8a6.4 6.4 0 1 0 12.8 0a6.4 6.4 0 1 0 -12.8 0z" fill="none" stroke="#c8c8c8" stroke-width="1.0" stroke-linecap="round" stroke-linejoin="round" /><path d="M3.6 7a4.6 4.6 0 0 1 3.2-3.4" fill="none" stroke="#c8c8c8" stroke-width="1.2" stroke-linecap="round" stroke-linejoin="round" /><path d="M8 14l1-1M10 13.6l1.6-1.6M12 12.4l1.4-1.4" fill="none" stroke="#c8c8c8" stroke-width="0.8" stroke-linecap="round" stroke-linejoin="round" opacity="0.7"/></svg>
<svg class="b" style="left:2077.00px;top:86.80px;" width="23.00" height="23.00" viewBox="0 0 16 16"><path d="M5.3 6.7L8 9.4L10.7 6.7" fill="none" stroke="#dcdcdc" stroke-width="1.15" stroke-linecap="round" stroke-linejoin="round" /></svg>
<div class="b" style="left:2006.80px;top:121.30px;width:96.20px;height:26.90px;background:#282828;border-radius:6px;border:1px solid #3a3a3a;"></div>
<span class="t" style="left:2018.60px;top:126px;font-size:17px;line-height:17px;color:#e6e6e6;letter-spacing:0.159px;">Options</span>
<svg class="b" style="left:2082.30px;top:124.80px;" width="23.00" height="23.00" viewBox="0 0 16 16"><path d="M5.3 6.7L8 9.4L10.7 6.7" fill="none" stroke="#dcdcdc" stroke-width="1.15" stroke-linecap="round" stroke-linejoin="round" /></svg>
<svg class="b" style="left:20px;top:120px" width="31" height="31" viewBox="0 0 31 31"><rect x="1.8" y="1.8" width="27" height="27" rx="1" fill="none" stroke="#f2a226" stroke-width="1.5" stroke-dasharray="5.4 3.2"/><path d="M11 8.3L20.7 16.6L14.9 17.3L11 22.2z" fill="#e6e6e6"/></svg>
<div class="b" style="left:63px;top:121.0px;width:139px;height:27.5px;border-radius:5px;overflow:hidden"><div class="b" style="left:0px;top:0;width:28px;height:100%;background:#4772b3"></div><div class="b" style="left:28px;top:0;width:28px;height:100%;background:#545454"></div><div class="b" style="left:56px;top:0;width:27px;height:100%;background:#545454"></div><div class="b" style="left:83px;top:0;width:28px;height:100%;background:#545454"></div><div class="b" style="left:111px;top:0;width:28px;height:100%;background:#545454"></div><div class="b" style="left:28px;top:0;width:1px;height:100%;background:#454545"></div><div class="b" style="left:56px;top:0;width:1px;height:100%;background:#454545"></div><div class="b" style="left:83px;top:0;width:1px;height:100%;background:#454545"></div><div class="b" style="left:111px;top:0;width:1px;height:100%;background:#454545"></div></div>
<svg class="b" style="left:65.4px;top:123.2px" width="23" height="23" viewBox="0 0 16 16"><rect x="1.6" y="1.6" width="12.8" height="12.8" fill="none" stroke="#fff" stroke-width="1.3" stroke-dasharray="2.4 1.6"/></svg>
<svg class="b" style="left:93.1px;top:123.2px" width="23" height="23" viewBox="0 0 16 16"><path d="M5.6 1.4h9v9h-4.2v4.2h-9v-9h4.2z" fill="#dadada"/></svg>
<svg class="b" style="left:120.8px;top:123.2px" width="23" height="23" viewBox="0 0 16 16"><path d="M6 1.4h8.6v8.6h-3.4V4.8H6z" fill="#dadada"/><rect x="1.8" y="5.6" width="8.6" height="8.6" fill="none" stroke="#dadada" stroke-width="1.1" stroke-dasharray="2 1.4"/></svg>
<svg class="b" style="left:148.4px;top:123.2px" width="23" height="23" viewBox="0 0 16 16"><path d="M5.4 1.4h9.2v9.2h-4v4h-9.2v-9.2h4z M5.4 5.4v5.2h5.2v-5.2z" fill="#dadada" fill-rule="evenodd"/></svg>
<svg class="b" style="left:176.1px;top:123.2px" width="23" height="23" viewBox="0 0 16 16"><rect x="1.6" y="1.6" width="12.8" height="12.8" fill="none" stroke="#dadada" stroke-width="1.1" stroke-dasharray="2.2 1.5"/><rect x="4.8" y="4.8" width="6.4" height="6.4" fill="#dadada"/></svg>
<span class="t" style="left:14.30px;top:169px;font-size:17px;line-height:17px;color:#ffffff;letter-spacing:0.154px;text-shadow:0 0 2px #000,0 1px 2px rgba(0,0,0,.8);">User Perspective</span>
<span class="t" style="left:14.80px;top:196px;font-size:17px;line-height:17px;color:#ffffff;letter-spacing:0.175px;text-shadow:0 0 2px #000,0 1px 2px rgba(0,0,0,.8);">(26) Ground | AutomationStationBase</span>
<div class="b" style="left:0.00px;top:175.50px;width:11.50px;height:19.50px;background:#333333;border-radius:0 5px 5px 0;"></div>
<svg class="b" style="left:1px;top:179px" width="9" height="13"><path d="M1.5 1.5L7 6.5L1.5 11.5" fill="none" stroke="#8c8c8c" stroke-width="1.4"/></svg>
<div class="b" style="left:2103.00px;top:175.50px;width:10.60px;height:19.50px;background:#333333;border-radius:5px 0 0 5px;"></div>
<svg class="b" style="left:2104.5px;top:179px" width="9" height="13"><path d="M7.5 1.5L2 6.5L7.5 11.5" fill="none" stroke="#8c8c8c" stroke-width="1.4"/></svg>
<div class="b" style="left:2118px;top:79px;width:440.5px;height:448px;background:#282828;border-radius:7px;overflow:hidden">
<div class="b" style="left:-2118px;top:-79px"><div class="b" style="left:2118.00px;top:145.05px;width:442.00px;height:28.95px;background:#2b2b2b;"></div><div class="b" style="left:2118.00px;top:202.95px;width:442.00px;height:28.95px;background:#2b2b2b;"></div><div class="b" style="left:2118.00px;top:260.85px;width:442.00px;height:28.95px;background:#2b2b2b;"></div><div class="b" style="left:2118.00px;top:318.75px;width:442.00px;height:28.95px;background:#334d80;"></div><div class="b" style="left:2118.00px;top:376.65px;width:442.00px;height:28.95px;background:#2b2b2b;"></div><div class="b" style="left:2118.00px;top:434.55px;width:442.00px;height:28.95px;background:#2b2b2b;"></div><div class="b" style="left:2118.00px;top:492.45px;width:442.00px;height:28.95px;background:#2b2b2b;"></div><div class="b" style="left:2118.00px;top:79.00px;width:442.00px;height:37.10px;background:#282828;"></div><div class="b" style="left:2128.40px;top:82.40px;width:45.60px;height:28.20px;background:#282828;border-radius:6px;border:1px solid #3a3a3a;"></div><svg class="b" style="left:2134.60px;top:85.60px;" width="22.60" height="22.60" viewBox="0 0 16 16"><path d="M0.6 0.6h5.3v3H0.6z M8.1 6.4h7.5v3.8H8.1z M8.1 12.2h7.5v3.4H8.1z" fill="#dedede" fill-rule="evenodd" /><path d="M3.2 3.8v10.2h4.4M3.2 8.3h4.4" fill="none" stroke="#dedede" stroke-width="0.95" stroke-linecap="round" stroke-linejoin="round" /></svg><svg class="b" style="left:2153.00px;top:86.80px;" width="23.00" height="23.00" viewBox="0 0 16 16"><path d="M5.3 6.7L8 9.4L10.7 6.7" fill="none" stroke="#dcdcdc" stroke-width="1.15" stroke-linecap="round" stroke-linejoin="round" /></svg><div class="b" style="left:2181.40px;top:82.40px;width:45.60px;height:28.20px;background:#282828;border-radius:6px;border:1px solid #3a3a3a;"></div><svg class="b" style="left:2187.40px;top:85.60px;" width="22.60" height="22.60" viewBox="0 0 16 16"><path d="M1.4 4.6v9.8h9.8M3.2 3v9.6h9.6" fill="none" stroke="#dedede" stroke-width="1.0" stroke-linecap="round" stroke-linejoin="round" /><rect x="5" y="1.2" width="9.8" height="9.8" fill="#282828" stroke="#dedede" stroke-width="1.1"/><path d="M5.6 10.4L9.4 5.2l2.2 2.8 1-1.2 2 3.6z" fill="#dedede" fill-rule="evenodd" /><path d="M11.4 3.6a1 1 0 1 0 2 0a1 1 0 1 0 -2 0z" fill="#dedede" fill-rule="evenodd" /></svg><svg class="b" style="left:2206.00px;top:86.80px;" width="23.00" height="23.00" viewBox="0 0 16 16"><path d="M5.3 6.7L8 9.4L10.7 6.7" fill="none" stroke="#dcdcdc" stroke-width="1.15" stroke-linecap="round" stroke-linejoin="round" /></svg><div class="b" style="left:2249.60px;top:82.40px;width:173.40px;height:28.20px;background:#1d1d1d;border-radius:6px;border:1px solid #3a3a3a;"></div><svg class="b" style="left:2256.00px;top:85.60px;" width="22.60" height="22.60" viewBox="0 0 16 16"><path d="M5.3999999999999995 6.2a4.2 4.2 0 1 0 8.4 0a4.2 4.2 0 1 0 -8.4 0zM6.6 9.4L1.6 14.6" fill="none" stroke="#dcdcdc" stroke-width="1.25" stroke-linecap="round" stroke-linejoin="round" /></svg><span class="t" style="left:2288.60px;top:88px;font-size:17px;line-height:17px;color:#777;letter-spacing:-0.078px;">Search</span><div class="b" style="left:2466.60px;top:82.40px;width:45.40px;height:28.20px;background:#282828;border-radius:6px;border:1px solid #3a3a3a;"></div><svg class="b" style="left:2469.40px;top:85.40px;" width="22.60" height="22.60" viewBox="0 0 16 16"><path d="M1.4 2h13.2L9.4 8.6v5.2l-2.8 1.4V8.6z" fill="none" stroke="#dedede" stroke-width="1.15" stroke-linecap="round" stroke-linejoin="round" /></svg><svg class="b" style="left:2491.00px;top:86.80px;" width="23.00" height="23.00" viewBox="0 0 16 16"><path d="M5.3 6.7L8 9.4L10.7 6.7" fill="none" stroke="#dcdcdc" stroke-width="1.15" stroke-linecap="round" stroke-linejoin="round" /></svg><div class="b" style="left:2519.60px;top:82.40px;width:28.40px;height:28.20px;background:#545454;border-radius:6px;"></div><svg class="b" style="left:2522.40px;top:85.20px;" width="22.60" height="22.60" viewBox="0 0 16 16"><path d="M1.4 5.4h8M2.4 7.8v6.6h9.8V9.8M5.6 10.6h3.2" fill="none" stroke="#dedede" stroke-width="1.15" stroke-linecap="round" stroke-linejoin="round" /><circle cx="11.9" cy="4.3" r="3.7" fill="#dedede" stroke="#545454" stroke-width="0.9"/><path d="M11.9 2.3v4M9.9 4.3h4" fill="none" stroke="#545454" stroke-width="1.15" stroke-linecap="round" stroke-linejoin="round" /></svg><svg class="b" style="left:2148.80px;top:118.17px;" width="22.40" height="22.40" viewBox="0 0 16 16"><path d="M0.8 1.6h14.4v3.2H0.8z M1.9 6h12.2v8.6H1.9z M5.8 8h4.4v1.7H5.8z" fill="#e6e6e6" fill-rule="evenodd" /></svg><span class="t" style="left:2180.50px;top:124px;font-size:17px;line-height:17px;color:#e6e6e6;letter-spacing:0.182px;">Scene Collection</span><svg class="b" style="left:2149.00px;top:148.12px;" width="23.00" height="23.00" viewBox="0 0 16 16"><path d="M3.5 5.7L8 10.2L12.5 5.7" fill="none" stroke="#c8c8c8" stroke-width="1.2" stroke-linecap="round" stroke-linejoin="round" /></svg><svg class="b" style="left:2177.80px;top:147.92px;" width="22.20" height="22.20" viewBox="0 0 16 16"><path d="M0.8 1.6h14.4v3.2H0.8z M1.9 6h12.2v8.6H1.9z M5.8 8h4.4v1.7H5.8z" fill="#e6e6e6" fill-rule="evenodd" /></svg><span class="t" style="left:2209.40px;top:153px;font-size:17px;line-height:17px;color:#e6e6e6;letter-spacing:0.310px;">Scene Items</span><svg class="b" style="left:2435.60px;top:151.12px;" width="16.80" height="16.80" viewBox="0 0 16 16"><rect x="1" y="1" width="14" height="14" rx="2.2" fill="#e6e6e6"/><path d="M4.2 8.2L6.9 11L12 4.8" fill="none" stroke="#282828" stroke-width="2.0" stroke-linecap="round" stroke-linejoin="round" /></svg><svg class="b" style="left:2463.00px;top:149.92px;" width="19.60" height="19.60" viewBox="0 0 16 16"><path d="M2 1.6L14.6 6.3L9.3 8.6L7.3 14.6z" fill="#e6e6e6" fill-rule="evenodd" /></svg><svg class="b" style="left:2491.40px;top:148.52px;" width="22.00" height="22.00" viewBox="0 0 16 16"><path d="M0.6 8Q8 0.8 15.4 8Q8 15.2 0.6 8zM4.5 8a3.5 3.5 0 1 0 7.0 0a3.5 3.5 0 1 0 -7.0 0zM6.3 8a1.7 1.7 0 1 0 3.4 0a1.7 1.7 0 1 0 -3.4 0z" fill="#e6e6e6" fill-rule="evenodd" /></svg><svg class="b" style="left:2520.80px;top:148.92px;" width="21.40" height="21.40" viewBox="0 0 16 16"><path d="M1 4.6h3.2l1.3-2.2h5l1.3 2.2H15v9.6H1zM4.1 9.2a3.9 3.9 0 1 0 7.8 0a3.9 3.9 0 1 0 -7.8 0zM5.3 9.2a2.7 2.7 0 1 0 5.4 0a2.7 2.7 0 1 0 -5.4 0zM6.7 9.2a1.3 1.3 0 1 0 2.6 0a1.3 1.3 0 1 0 -2.6 0z" fill="#e6e6e6" fill-rule="evenodd" /></svg><svg class="b" style="left:2178.00px;top:176.88px;" width="23.00" height="23.00" viewBox="0 0 16 16"><path d="M6.2 3.4L10.8 8L6.2 12.6" fill="none" stroke="#c8c8c8" stroke-width="1.25" stroke-linecap="round" stroke-linejoin="round" /></svg><svg class="b" style="left:2207.60px;top:177.07px;" width="23.00" height="23.00" viewBox="0 0 16 16"><path d="M1.0999999999999996 4.6a3.2 3.2 0 1 0 6.4 0a3.2 3.2 0 1 0 -6.4 0zM3.3 4.6a1.0 1.0 0 1 0 2.0 0a1.0 1.0 0 1 0 -2.0 0zM7.2 4.3a3.8 3.8 0 1 0 7.6 0a3.8 3.8 0 1 0 -7.6 0zM9.8 4.3a1.2 1.2 0 1 0 2.4 0a1.2 1.2 0 1 0 -2.4 0zM2.6 8.4h9.6v6.2H2.6z M12.6 11.5L15.6 9.4v5.2z M1.2 10.2h1.2v2.4H1.2z" fill="#dc9254" fill-rule="evenodd" /></svg><span class="t" style="left:2238.60px;top:182px;font-size:17px;line-height:17px;color:#e6e6e6;letter-spacing:-0.278px;">Camera</span><div class="b" style="left:2327.00px;top:175.20px;width:28.80px;height:26.60px;background:#545454;border-radius:6px;"></div><svg class="b" style="left:2329.80px;top:176.90px;" width="23.20" height="23.20" viewBox="0 0 16 16"><path d="M1.6999999999999997 5a2.9 2.9 0 1 0 5.8 0a2.9 2.9 0 1 0 -5.8 0zM7.6 4.8a3.4 3.4 0 1 0 6.8 0a3.4 3.4 0 1 0 -6.8 0zM2.8 9.2h9v5H2.8z M12.2 11.6L15 9.8v4.4z M1.2 10.4v2.4" fill="none" stroke="#1ec79c" stroke-width="1.1" stroke-linecap="round" stroke-linejoin="round" /><path d="M4.1 5a0.5 0.5 0 1 0 1.0 0a0.5 0.5 0 1 0 -1.0 0zM10.4 4.8a0.6 0.6 0 1 0 1.2 0a0.6 0.6 0 1 0 -1.2 0z" fill="none" stroke="#1ec79c" stroke-width="0.9" stroke-linecap="round" stroke-linejoin="round" /></svg><svg class="b" style="left:2463.00px;top:178.88px;" width="19.60" height="19.60" viewBox="0 0 16 16"><path d="M2 1.6L14.6 6.3L9.3 8.6L7.3 14.6z" fill="#e6e6e6" fill-rule="evenodd" /></svg><svg class="b" style="left:2491.40px;top:177.47px;" width="22.00" height="22.00" viewBox="0 0 16 16"><path d="M0.6 8Q8 0.8 15.4 8Q8 15.2 0.6 8zM4.5 8a3.5 3.5 0 1 0 7.0 0a3.5 3.5 0 1 0 -7.0 0zM6.3 8a1.7 1.7 0 1 0 3.4 0a1.7 1.7 0 1 0 -3.4 0z" fill="#e6e6e6" fill-rule="evenodd" /></svg><svg class="b" style="left:2520.80px;top:177.88px;" width="21.40" height="21.40" viewBox="0 0 16 16"><path d="M1 4.6h3.2l1.3-2.2h5l1.3 2.2H15v9.6H1zM4.1 9.2a3.9 3.9 0 1 0 7.8 0a3.9 3.9 0 1 0 -7.8 0zM5.3 9.2a2.7 2.7 0 1 0 5.4 0a2.7 2.7 0 1 0 -5.4 0zM6.7 9.2a1.3 1.3 0 1 0 2.6 0a1.3 1.3 0 1 0 -2.6 0z" fill="#e6e6e6" fill-rule="evenodd" /></svg><svg class="b" style="left:2178.00px;top:205.82px;" width="23.00" height="23.00" viewBox="0 0 16 16"><path d="M6.2 3.4L10.8 8L6.2 12.6" fill="none" stroke="#c8c8c8" stroke-width="1.25" stroke-linecap="round" stroke-linejoin="round" /></svg><svg class="b" style="left:2207.60px;top:206.02px;" width="23.00" height="23.00" viewBox="0 0 16 16"><path d="M2.4000000000000004 6.3a5.6 5.6 0 1 0 11.2 0a5.6 5.6 0 1 0 -11.2 0zM5.6 12.6h4.8v1.1H5.6z M6.3 14.3h3.4v1H6.3z" fill="#dc9254" fill-rule="evenodd" /><path d="M5.8 6.2h4.4M6.5 6.4v3.2M9.5 6.4v3.2" fill="none" stroke="#2b2b2b" stroke-width="1.1" stroke-linecap="round" stroke-linejoin="round" /></svg><span class="t" style="left:2238.60px;top:211px;font-size:17px;line-height:17px;color:#e6e6e6;letter-spacing:-0.217px;">Sun</span><svg class="b" style="left:2300.60px;top:205.62px;" width="22.60" height="22.60" viewBox="0 0 16 16"><path d="M5.1 8a2.9 2.9 0 1 0 5.8 0a2.9 2.9 0 1 0 -5.8 0zM8 0.8v2.4M8 12.8v2.4M0.8 8h2.4M12.8 8h2.4M2.9 2.9l1.7 1.7M11.4 11.4l1.7 1.7M2.9 13.1l1.7-1.7M11.4 4.6l1.7-1.7" fill="none" stroke="#1ec79c" stroke-width="1.15" stroke-linecap="round" stroke-linejoin="round" /></svg><svg class="b" style="left:2463.00px;top:207.82px;" width="19.60" height="19.60" viewBox="0 0 16 16"><path d="M2 1.6L14.6 6.3L9.3 8.6L7.3 14.6z" fill="#e6e6e6" fill-rule="evenodd" /></svg><svg class="b" style="left:2491.40px;top:206.42px;" width="22.00" height="22.00" viewBox="0 0 16 16"><path d="M0.6 8Q8 0.8 15.4 8Q8 15.2 0.6 8zM4.5 8a3.5 3.5 0 1 0 7.0 0a3.5 3.5 0 1 0 -7.0 0zM6.3 8a1.7 1.7 0 1 0 3.4 0a1.7 1.7 0 1 0 -3.4 0z" fill="#e6e6e6" fill-rule="evenodd" /></svg><svg class="b" style="left:2520.80px;top:206.82px;" width="21.40" height="21.40" viewBox="0 0 16 16"><path d="M1 4.6h3.2l1.3-2.2h5l1.3 2.2H15v9.6H1zM4.1 9.2a3.9 3.9 0 1 0 7.8 0a3.9 3.9 0 1 0 -7.8 0zM5.3 9.2a2.7 2.7 0 1 0 5.4 0a2.7 2.7 0 1 0 -5.4 0zM6.7 9.2a1.3 1.3 0 1 0 2.6 0a1.3 1.3 0 1 0 -2.6 0z" fill="#e6e6e6" fill-rule="evenodd" /></svg><svg class="b" style="left:2149.00px;top:234.97px;" width="23.00" height="23.00" viewBox="0 0 16 16"><path d="M6.2 3.4L10.8 8L6.2 12.6" fill="none" stroke="#8a8a8a" stroke-width="1.25" stroke-linecap="round" stroke-linejoin="round" /></svg><svg class="b" style="left:2177.80px;top:234.77px;" width="22.20" height="22.20" viewBox="0 0 16 16"><path d="M0.8 1.6h14.4v3.2H0.8z M1.9 6h12.2v8.6H1.9z M5.8 8h4.4v1.7H5.8z" fill="#7d7d7d" fill-rule="evenodd" /></svg><span class="t" style="left:2209.40px;top:239px;font-size:17px;line-height:17px;color:#7f7f7f;letter-spacing:-0.085px;">Linked Data</span><svg class="b" style="left:2331.60px;top:233.77px;" width="22.40" height="22.40" viewBox="0 0 16 16"><path d="M8 2V8.8L2.6 13.6M8 8.8L14 11.6" fill="none" stroke="#7a583b" stroke-width="2.3" stroke-linecap="round" stroke-linejoin="round" /></svg><span class="t" style="left:2352.00px;top:247px;font-size:13px;line-height:13px;color:#e6e6e6;letter-spacing:1px;text-shadow:0 0 2px #222,0 0 2px #222;">3</span><svg class="b" style="left:2360.60px;top:233.77px;" width="23.00" height="23.00" viewBox="0 0 16 16"><path d="M2.4 3.2H13.6L8 13.4z" fill="none" stroke="#7a583b" stroke-width="2.5" stroke-linecap="round" stroke-linejoin="round" /></svg><span class="t" style="left:2371.40px;top:247px;font-size:13px;line-height:13px;color:#e6e6e6;letter-spacing:1px;text-shadow:0 0 2px #222,0 0 2px #222;">23</span><svg class="b" style="left:2390.20px;top:234.17px;" width="22.00" height="22.00" viewBox="0 0 16 16"><path d="M0.8 1.6h14.4v3.2H0.8z M1.9 6h12.2v8.6H1.9z M5.8 8h4.4v1.7H5.8z" fill="#7d7d7d" fill-rule="evenodd" /></svg><svg class="b" style="left:2435.60px;top:237.97px;" width="16.80" height="16.80" viewBox="0 0 16 16"><rect x="1" y="1" width="14" height="14" rx="2.2" fill="#e6e6e6"/><path d="M4.2 8.2L6.9 11L12 4.8" fill="none" stroke="#282828" stroke-width="2.0" stroke-linecap="round" stroke-linejoin="round" /></svg><svg class="b" style="left:2463.00px;top:236.77px;opacity:0.3;" width="19.60" height="19.60" viewBox="0 0 16 16"><path d="M2 1.6L14.6 6.3L9.3 8.6L7.3 14.6z" fill="#e6e6e6" fill-rule="evenodd" /></svg><svg class="b" style="left:2492.40px;top:235.17px;" width="20.40" height="20.40" viewBox="0 0 16 16"><path d="M1.5 6.5Q8 14 14.5 6.5" fill="none" stroke="#5a5a5a" stroke-width="1.2" stroke-linecap="round" stroke-linejoin="round" /></svg><svg class="b" style="left:2520.80px;top:235.77px;" width="21.40" height="21.40" viewBox="0 0 16 16"><path d="M1 4.6h3.2l1.3-2.2h5l1.3 2.2H15v9.6H1zM4.1 9.2a3.9 3.9 0 1 0 7.8 0a3.9 3.9 0 1 0 -7.8 0zM5.3 9.2a2.7 2.7 0 1 0 5.4 0a2.7 2.7 0 1 0 -5.4 0zM6.7 9.2a1.3 1.3 0 1 0 2.6 0a1.3 1.3 0 1 0 -2.6 0z" fill="#e6e6e6" fill-rule="evenodd" /></svg><svg class="b" style="left:2149.00px;top:263.93px;" width="23.00" height="23.00" viewBox="0 0 16 16"><path d="M6.2 3.4L10.8 8L6.2 12.6" fill="none" stroke="#8a8a8a" stroke-width="1.25" stroke-linecap="round" stroke-linejoin="round" /></svg><svg class="b" style="left:2177.80px;top:263.73px;" width="22.20" height="22.20" viewBox="0 0 16 16"><path d="M0.8 1.6h14.4v3.2H0.8z M1.9 6h12.2v8.6H1.9z M5.8 8h4.4v1.7H5.8z" fill="#7d7d7d" fill-rule="evenodd" /></svg><span class="t" style="left:2209.40px;top:268px;font-size:17px;line-height:17px;color:#7f7f7f;letter-spacing:0.057px;">Crane2</span><svg class="b" style="left:2298.20px;top:262.73px;" width="22.40" height="22.40" viewBox="0 0 16 16"><path d="M8 2V8.8L2.6 13.6M8 8.8L14 11.6" fill="none" stroke="#7a583b" stroke-width="2.3" stroke-linecap="round" stroke-linejoin="round" /></svg><span class="t" style="left:2318.40px;top:276px;font-size:13px;line-height:13px;color:#e6e6e6;letter-spacing:1px;text-shadow:0 0 2px #222,0 0 2px #222;">3</span><svg class="b" style="left:2327.40px;top:262.73px;" width="23.00" height="23.00" viewBox="0 0 16 16"><path d="M2.4 3.2H13.6L8 13.4z" fill="none" stroke="#7a583b" stroke-width="2.5" stroke-linecap="round" stroke-linejoin="round" /></svg><span class="t" style="left:2339.20px;top:276px;font-size:13px;line-height:13px;color:#e6e6e6;letter-spacing:1px;text-shadow:0 0 2px #222,0 0 2px #222;">19</span><svg class="b" style="left:2435.60px;top:266.93px;" width="16.80" height="16.80" viewBox="0 0 16 16"><rect x="1" y="1" width="14" height="14" rx="2.2" fill="#e6e6e6"/><path d="M4.2 8.2L6.9 11L12 4.8" fill="none" stroke="#282828" stroke-width="2.0" stroke-linecap="round" stroke-linejoin="round" /></svg><svg class="b" style="left:2463.00px;top:265.73px;opacity:0.3;" width="19.60" height="19.60" viewBox="0 0 16 16"><path d="M2 1.6L14.6 6.3L9.3 8.6L7.3 14.6z" fill="#e6e6e6" fill-rule="evenodd" /></svg><svg class="b" style="left:2492.40px;top:264.13px;" width="20.40" height="20.40" viewBox="0 0 16 16"><path d="M1.5 6.5Q8 14 14.5 6.5" fill="none" stroke="#5a5a5a" stroke-width="1.2" stroke-linecap="round" stroke-linejoin="round" /></svg><svg class="b" style="left:2520.80px;top:264.73px;" width="21.40" height="21.40" viewBox="0 0 16 16"><path d="M1 4.6h3.2l1.3-2.2h5l1.3 2.2H15v9.6H1zM4.1 9.2a3.9 3.9 0 1 0 7.8 0a3.9 3.9 0 1 0 -7.8 0zM5.3 9.2a2.7 2.7 0 1 0 5.4 0a2.7 2.7 0 1 0 -5.4 0zM6.7 9.2a1.3 1.3 0 1 0 2.6 0a1.3 1.3 0 1 0 -2.6 0z" fill="#e6e6e6" fill-rule="evenodd" /></svg><svg class="b" style="left:2149.00px;top:292.88px;" width="23.00" height="23.00" viewBox="0 0 16 16"><path d="M6.2 3.4L10.8 8L6.2 12.6" fill="none" stroke="#8a8a8a" stroke-width="1.25" stroke-linecap="round" stroke-linejoin="round" /></svg><svg class="b" style="left:2177.80px;top:292.67px;" width="22.20" height="22.20" viewBox="0 0 16 16"><path d="M0.8 1.6h14.4v3.2H0.8z M1.9 6h12.2v8.6H1.9z M5.8 8h4.4v1.7H5.8z" fill="#7d7d7d" fill-rule="evenodd" /></svg><span class="t" style="left:2209.40px;top:297px;font-size:17px;line-height:17px;color:#7f7f7f;letter-spacing:0.057px;">Crane3</span><svg class="b" style="left:2298.20px;top:291.67px;" width="22.40" height="22.40" viewBox="0 0 16 16"><path d="M8 2V8.8L2.6 13.6M8 8.8L14 11.6" fill="none" stroke="#7a583b" stroke-width="2.3" stroke-linecap="round" stroke-linejoin="round" /></svg><span class="t" style="left:2318.40px;top:305px;font-size:13px;line-height:13px;color:#e6e6e6;letter-spacing:1px;text-shadow:0 0 2px #222,0 0 2px #222;">3</span><svg class="b" style="left:2327.40px;top:291.67px;" width="23.00" height="23.00" viewBox="0 0 16 16"><path d="M2.4 3.2H13.6L8 13.4z" fill="none" stroke="#7a583b" stroke-width="2.5" stroke-linecap="round" stroke-linejoin="round" /></svg><span class="t" style="left:2339.20px;top:305px;font-size:13px;line-height:13px;color:#e6e6e6;letter-spacing:1px;text-shadow:0 0 2px #222,0 0 2px #222;">14</span><svg class="b" style="left:2435.60px;top:295.88px;" width="16.80" height="16.80" viewBox="0 0 16 16"><rect x="1" y="1" width="14" height="14" rx="2.2" fill="#e6e6e6"/><path d="M4.2 8.2L6.9 11L12 4.8" fill="none" stroke="#282828" stroke-width="2.0" stroke-linecap="round" stroke-linejoin="round" /></svg><svg class="b" style="left:2463.00px;top:294.67px;opacity:0.3;" width="19.60" height="19.60" viewBox="0 0 16 16"><path d="M2 1.6L14.6 6.3L9.3 8.6L7.3 14.6z" fill="#e6e6e6" fill-rule="evenodd" /></svg><svg class="b" style="left:2492.40px;top:293.07px;" width="20.40" height="20.40" viewBox="0 0 16 16"><path d="M1.5 6.5Q8 14 14.5 6.5" fill="none" stroke="#5a5a5a" stroke-width="1.2" stroke-linecap="round" stroke-linejoin="round" /></svg><svg class="b" style="left:2520.80px;top:293.67px;" width="21.40" height="21.40" viewBox="0 0 16 16"><path d="M1 4.6h3.2l1.3-2.2h5l1.3 2.2H15v9.6H1zM4.1 9.2a3.9 3.9 0 1 0 7.8 0a3.9 3.9 0 1 0 -7.8 0zM5.3 9.2a2.7 2.7 0 1 0 5.4 0a2.7 2.7 0 1 0 -5.4 0zM6.7 9.2a1.3 1.3 0 1 0 2.6 0a1.3 1.3 0 1 0 -2.6 0z" fill="#e6e6e6" fill-rule="evenodd" /></svg><div class="b" style="left:2175.00px;top:320.60px;width:28.50px;height:26.00px;background:rgba(255,255,255,0.2);border-radius:6px;border:1px solid rgba(255,255,255,0.25);"></div><svg class="b" style="left:2149.00px;top:321.83px;" width="23.00" height="23.00" viewBox="0 0 16 16"><path d="M3.5 5.7L8 10.2L12.5 5.7" fill="none" stroke="#c8c8c8" stroke-width="1.2" stroke-linecap="round" stroke-linejoin="round" /></svg><svg class="b" style="left:2177.80px;top:321.62px;" width="22.20" height="22.20" viewBox="0 0 16 16"><path d="M0.8 1.6h14.4v3.2H0.8z M1.9 6h12.2v8.6H1.9z M5.8 8h4.4v1.7H5.8z" fill="#e6e6e6" fill-rule="evenodd" /></svg><span class="t" style="left:2209.40px;top:326px;font-size:17px;line-height:17px;color:#ffffff;letter-spacing:0.049px;">Ground</span><svg class="b" style="left:2435.60px;top:324.83px;" width="16.80" height="16.80" viewBox="0 0 16 16"><rect x="1" y="1" width="14" height="14" rx="2.2" fill="#e6e6e6"/><path d="M4.2 8.2L6.9 11L12 4.8" fill="none" stroke="#334d80" stroke-width="2.0" stroke-linecap="round" stroke-linejoin="round" /></svg><svg class="b" style="left:2463.00px;top:323.62px;" width="19.60" height="19.60" viewBox="0 0 16 16"><path d="M2 1.6L14.6 6.3L9.3 8.6L7.3 14.6z" fill="#e6e6e6" fill-rule="evenodd" /></svg><svg class="b" style="left:2491.40px;top:322.23px;" width="22.00" height="22.00" viewBox="0 0 16 16"><path d="M0.6 8Q8 0.8 15.4 8Q8 15.2 0.6 8zM4.5 8a3.5 3.5 0 1 0 7.0 0a3.5 3.5 0 1 0 -7.0 0zM6.3 8a1.7 1.7 0 1 0 3.4 0a1.7 1.7 0 1 0 -3.4 0z" fill="#e6e6e6" fill-rule="evenodd" /></svg><svg class="b" style="left:2520.80px;top:322.62px;" width="21.40" height="21.40" viewBox="0 0 16 16"><path d="M1 4.6h3.2l1.3-2.2h5l1.3 2.2H15v9.6H1zM4.1 9.2a3.9 3.9 0 1 0 7.8 0a3.9 3.9 0 1 0 -7.8 0zM5.3 9.2a2.7 2.7 0 1 0 5.4 0a2.7 2.7 0 1 0 -5.4 0zM6.7 9.2a1.3 1.3 0 1 0 2.6 0a1.3 1.3 0 1 0 -2.6 0z" fill="#e6e6e6" fill-rule="evenodd" /></svg><svg class="b" style="left:2178.00px;top:350.57px;" width="23.00" height="23.00" viewBox="0 0 16 16"><path d="M6.2 3.4L10.8 8L6.2 12.6" fill="none" stroke="#c8c8c8" stroke-width="1.25" stroke-linecap="round" stroke-linejoin="round" /></svg><svg class="b" style="left:2207.60px;top:350.78px;" width="23.00" height="23.00" viewBox="0 0 16 16"><path d="M2.4 3.2H13.6L8 13.4z" fill="none" stroke="#dc9254" stroke-width="2.5" stroke-linecap="round" stroke-linejoin="round" /></svg><span class="t" style="left:2238.60px;top:355px;font-size:17px;line-height:17px;color:#e6e6e6;letter-spacing:-0.262px;">Base</span><svg class="b" style="left:2309.00px;top:350.57px;" width="22.60" height="22.60" viewBox="0 0 16 16"><path d="M3 3.2H13L8 13z" fill="none" stroke="#1ec79c" stroke-width="1.1" stroke-linecap="round" stroke-linejoin="round" /><rect x="1.5" y="1.7000000000000002" width="3" height="3" fill="#282828" stroke="#1ec79c" stroke-width="1"/><rect x="11.5" y="1.7000000000000002" width="3" height="3" fill="#282828" stroke="#1ec79c" stroke-width="1"/><rect x="6.5" y="11.5" width="3" height="3" fill="#282828" stroke="#1ec79c" stroke-width="1"/></svg><svg class="b" style="left:2463.00px;top:352.57px;" width="19.60" height="19.60" viewBox="0 0 16 16"><path d="M2 1.6L14.6 6.3L9.3 8.6L7.3 14.6z" fill="#e6e6e6" fill-rule="evenodd" /></svg><svg class="b" style="left:2491.40px;top:351.18px;" width="22.00" height="22.00" viewBox="0 0 16 16"><path d="M0.6 8Q8 0.8 15.4 8Q8 15.2 0.6 8zM4.5 8a3.5 3.5 0 1 0 7.0 0a3.5 3.5 0 1 0 -7.0 0zM6.3 8a1.7 1.7 0 1 0 3.4 0a1.7 1.7 0 1 0 -3.4 0z" fill="#e6e6e6" fill-rule="evenodd" /></svg><svg class="b" style="left:2520.80px;top:351.57px;" width="21.40" height="21.40" viewBox="0 0 16 16"><path d="M1 4.6h3.2l1.3-2.2h5l1.3 2.2H15v9.6H1zM4.1 9.2a3.9 3.9 0 1 0 7.8 0a3.9 3.9 0 1 0 -7.8 0zM5.3 9.2a2.7 2.7 0 1 0 5.4 0a2.7 2.7 0 1 0 -5.4 0zM6.7 9.2a1.3 1.3 0 1 0 2.6 0a1.3 1.3 0 1 0 -2.6 0z" fill="#e6e6e6" fill-rule="evenodd" /></svg><svg class="b" style="left:2178.00px;top:379.52px;" width="23.00" height="23.00" viewBox="0 0 16 16"><path d="M6.2 3.4L10.8 8L6.2 12.6" fill="none" stroke="#c8c8c8" stroke-width="1.25" stroke-linecap="round" stroke-linejoin="round" /></svg><svg class="b" style="left:2207.60px;top:379.73px;" width="23.00" height="23.00" viewBox="0 0 16 16"><path d="M2.4 3.2H13.6L8 13.4z" fill="none" stroke="#dc9254" stroke-width="2.5" stroke-linecap="round" stroke-linejoin="round" /></svg><span class="t" style="left:2238.60px;top:384px;font-size:17px;line-height:17px;color:#e6e6e6;letter-spacing:-0.094px;">BaseEdge</span><svg class="b" style="left:2348.90px;top:379.52px;" width="22.60" height="22.60" viewBox="0 0 16 16"><path d="M3 3.2H13L8 13z" fill="none" stroke="#1ec79c" stroke-width="1.1" stroke-linecap="round" stroke-linejoin="round" /><rect x="1.5" y="1.7000000000000002" width="3" height="3" fill="#2b2b2b" stroke="#1ec79c" stroke-width="1"/><rect x="11.5" y="1.7000000000000002" width="3" height="3" fill="#2b2b2b" stroke="#1ec79c" stroke-width="1"/><rect x="6.5" y="11.5" width="3" height="3" fill="#2b2b2b" stroke="#1ec79c" stroke-width="1"/></svg><svg class="b" style="left:2463.00px;top:381.52px;" width="19.60" height="19.60" viewBox="0 0 16 16"><path d="M2 1.6L14.6 6.3L9.3 8.6L7.3 14.6z" fill="#e6e6e6" fill-rule="evenodd" /></svg><svg class="b" style="left:2491.40px;top:380.12px;" width="22.00" height="22.00" viewBox="0 0 16 16"><path d="M0.6 8Q8 0.8 15.4 8Q8 15.2 0.6 8zM4.5 8a3.5 3.5 0 1 0 7.0 0a3.5 3.5 0 1 0 -7.0 0zM6.3 8a1.7 1.7 0 1 0 3.4 0a1.7 1.7 0 1 0 -3.4 0z" fill="#e6e6e6" fill-rule="evenodd" /></svg><svg class="b" style="left:2520.80px;top:380.52px;" width="21.40" height="21.40" viewBox="0 0 16 16"><path d="M1 4.6h3.2l1.3-2.2h5l1.3 2.2H15v9.6H1zM4.1 9.2a3.9 3.9 0 1 0 7.8 0a3.9 3.9 0 1 0 -7.8 0zM5.3 9.2a2.7 2.7 0 1 0 5.4 0a2.7 2.7 0 1 0 -5.4 0zM6.7 9.2a1.3 1.3 0 1 0 2.6 0a1.3 1.3 0 1 0 -2.6 0z" fill="#e6e6e6" fill-rule="evenodd" /></svg><svg class="b" style="left:2178.00px;top:408.48px;" width="23.00" height="23.00" viewBox="0 0 16 16"><path d="M6.2 3.4L10.8 8L6.2 12.6" fill="none" stroke="#c8c8c8" stroke-width="1.25" stroke-linecap="round" stroke-linejoin="round" /></svg><svg class="b" style="left:2207.60px;top:408.68px;" width="23.00" height="23.00" viewBox="0 0 16 16"><path d="M2.4 3.2H13.6L8 13.4z" fill="none" stroke="#dc9254" stroke-width="2.5" stroke-linecap="round" stroke-linejoin="round" /></svg><span class="t" style="left:2238.60px;top:413px;font-size:17px;line-height:17px;color:#e6e6e6;">BaseEdgePost</span><svg class="b" style="left:2383.40px;top:408.48px;" width="22.80" height="22.80" viewBox="0 0 16 16"><path d="M10.2 1.6a3.6 3.6 0 0 0-3.1 5.2L1.9 12a1.5 1.5 0 0 0 2.1 2.1l5.2-5.2a3.6 3.6 0 0 0 5.2-3.1l-2.3 1.6-2-0.6-0.6-2z" fill="none" stroke="#5d8be0" stroke-width="1.2" stroke-linecap="round" stroke-linejoin="round" /></svg><div class="b" style="left:2412.5px;top:407.1px;width:16.7px;height:26px;overflow:hidden"><svg class="b" style="left:0.40px;top:1.60px;" width="22.60" height="22.60" viewBox="0 0 16 16"><path d="M3 3.2H13L8 13z" fill="none" stroke="#1ec79c" stroke-width="1.1" stroke-linecap="round" stroke-linejoin="round" /><rect x="1.5" y="1.7000000000000002" width="3" height="3" fill="#282828" stroke="#1ec79c" stroke-width="1"/><rect x="11.5" y="1.7000000000000002" width="3" height="3" fill="#282828" stroke="#1ec79c" stroke-width="1"/><rect x="6.5" y="11.5" width="3" height="3" fill="#282828" stroke="#1ec79c" stroke-width="1"/></svg></div><svg class="b" style="left:2463.00px;top:410.48px;" width="19.60" height="19.60" viewBox="0 0 16 16"><path d="M2 1.6L14.6 6.3L9.3 8.6L7.3 14.6z" fill="#e6e6e6" fill-rule="evenodd" /></svg><svg class="b" style="left:2491.40px;top:409.08px;" width="22.00" height="22.00" viewBox="0 0 16 16"><path d="M0.6 8Q8 0.8 15.4 8Q8 15.2 0.6 8zM4.5 8a3.5 3.5 0 1 0 7.0 0a3.5 3.5 0 1 0 -7.0 0zM6.3 8a1.7 1.7 0 1 0 3.4 0a1.7 1.7 0 1 0 -3.4 0z" fill="#e6e6e6" fill-rule="evenodd" /></svg><svg class="b" style="left:2520.80px;top:409.48px;" width="21.40" height="21.40" viewBox="0 0 16 16"><path d="M1 4.6h3.2l1.3-2.2h5l1.3 2.2H15v9.6H1zM4.1 9.2a3.9 3.9 0 1 0 7.8 0a3.9 3.9 0 1 0 -7.8 0zM5.3 9.2a2.7 2.7 0 1 0 5.4 0a2.7 2.7 0 1 0 -5.4 0zM6.7 9.2a1.3 1.3 0 1 0 2.6 0a1.3 1.3 0 1 0 -2.6 0z" fill="#e6e6e6" fill-rule="evenodd" /></svg><svg class="b" style="left:2178.00px;top:437.42px;" width="23.00" height="23.00" viewBox="0 0 16 16"><path d="M6.2 3.4L10.8 8L6.2 12.6" fill="none" stroke="#6c6c6c" stroke-width="1.25" stroke-linecap="round" stroke-linejoin="round" /></svg><svg class="b" style="left:2207.60px;top:437.62px;" width="23.00" height="23.00" viewBox="0 0 16 16"><path d="M2.4 3.2H13.6L8 13.4z" fill="none" stroke="#7a583b" stroke-width="2.5" stroke-linecap="round" stroke-linejoin="round" /></svg><span class="t" style="left:2238.60px;top:442px;font-size:17px;line-height:17px;color:#7f7f7f;letter-spacing:0.269px;">ConcreteSurface</span><svg class="b" style="left:2402.90px;top:437.42px;" width="22.60" height="22.60" viewBox="0 0 16 16"><path d="M3 3.2H13L8 13z" fill="none" stroke="#1a7c66" stroke-width="1.1" stroke-linecap="round" stroke-linejoin="round" /><rect x="1.5" y="1.7000000000000002" width="3" height="3" fill="#2b2b2b" stroke="#1a7c66" stroke-width="1"/><rect x="11.5" y="1.7000000000000002" width="3" height="3" fill="#2b2b2b" stroke="#1a7c66" stroke-width="1"/><rect x="6.5" y="11.5" width="3" height="3" fill="#2b2b2b" stroke="#1a7c66" stroke-width="1"/></svg><svg class="b" style="left:2463.00px;top:439.42px;" width="19.60" height="19.60" viewBox="0 0 16 16"><path d="M2 1.6L14.6 6.3L9.3 8.6L7.3 14.6z" fill="#e6e6e6" fill-rule="evenodd" /></svg><svg class="b" style="left:2492.40px;top:437.82px;" width="20.40" height="20.40" viewBox="0 0 16 16"><path d="M1.5 6.5Q8 14 14.5 6.5" fill="none" stroke="#e6e6e6" stroke-width="1.2" stroke-linecap="round" stroke-linejoin="round" /></svg><svg class="b" style="left:2520.80px;top:438.42px;" width="21.40" height="21.40" viewBox="0 0 16 16"><path d="M1 4.6h3.2l1.3-2.2h5l1.3 2.2H15v9.6H1zM4.1 9.2a3.9 3.9 0 1 0 7.8 0a3.9 3.9 0 1 0 -7.8 0zM5.3 9.2a2.7 2.7 0 1 0 5.4 0a2.7 2.7 0 1 0 -5.4 0zM6.7 9.2a1.3 1.3 0 1 0 2.6 0a1.3 1.3 0 1 0 -2.6 0z" fill="#e6e6e6" fill-rule="evenodd" /></svg><svg class="b" style="left:2178.00px;top:466.38px;" width="23.00" height="23.00" viewBox="0 0 16 16"><path d="M6.2 3.4L10.8 8L6.2 12.6" fill="none" stroke="#6c6c6c" stroke-width="1.25" stroke-linecap="round" stroke-linejoin="round" /></svg><svg class="b" style="left:2207.60px;top:466.58px;" width="23.00" height="23.00" viewBox="0 0 16 16"><path d="M2.4 3.2H13.6L8 13.4z" fill="none" stroke="#7a583b" stroke-width="2.5" stroke-linecap="round" stroke-linejoin="round" /></svg><span class="t" style="left:2238.60px;top:471px;font-size:17px;line-height:17px;color:#7f7f7f;letter-spacing:0.185px;">DecalAIisEvil</span><svg class="b" style="left:2372.80px;top:466.38px;" width="22.60" height="22.60" viewBox="0 0 16 16"><path d="M3 3.2H13L8 13z" fill="none" stroke="#1a7c66" stroke-width="1.1" stroke-linecap="round" stroke-linejoin="round" /><rect x="1.5" y="1.7000000000000002" width="3" height="3" fill="#282828" stroke="#1a7c66" stroke-width="1"/><rect x="11.5" y="1.7000000000000002" width="3" height="3" fill="#282828" stroke="#1a7c66" stroke-width="1"/><rect x="6.5" y="11.5" width="3" height="3" fill="#282828" stroke="#1a7c66" stroke-width="1"/></svg><svg class="b" style="left:2463.00px;top:468.38px;" width="19.60" height="19.60" viewBox="0 0 16 16"><path d="M2 1.6L14.6 6.3L9.3 8.6L7.3 14.6z" fill="#e6e6e6" fill-rule="evenodd" /></svg><svg class="b" style="left:2492.40px;top:466.78px;" width="20.40" height="20.40" viewBox="0 0 16 16"><path d="M1.5 6.5Q8 14 14.5 6.5" fill="none" stroke="#e6e6e6" stroke-width="1.2" stroke-linecap="round" stroke-linejoin="round" /></svg><svg class="b" style="left:2520.80px;top:467.38px;" width="21.40" height="21.40" viewBox="0 0 16 16"><path d="M1 4.6h3.2l1.3-2.2h5l1.3 2.2H15v9.6H1zM4.1 9.2a3.9 3.9 0 1 0 7.8 0a3.9 3.9 0 1 0 -7.8 0zM5.3 9.2a2.7 2.7 0 1 0 5.4 0a2.7 2.7 0 1 0 -5.4 0zM6.7 9.2a1.3 1.3 0 1 0 2.6 0a1.3 1.3 0 1 0 -2.6 0z" fill="#e6e6e6" fill-rule="evenodd" /></svg><svg class="b" style="left:2178.00px;top:495.32px;" width="23.00" height="23.00" viewBox="0 0 16 16"><path d="M6.2 3.4L10.8 8L6.2 12.6" fill="none" stroke="#c8c8c8" stroke-width="1.25" stroke-linecap="round" stroke-linejoin="round" /></svg><svg class="b" style="left:2207.60px;top:495.52px;" width="23.00" height="23.00" viewBox="0 0 16 16"><path d="M2.4 3.2H13.6L8 13.4z" fill="none" stroke="#dc9254" stroke-width="2.5" stroke-linecap="round" stroke-linejoin="round" /></svg><span class="t" style="left:2238.60px;top:500px;font-size:17px;line-height:17px;color:#e6e6e6;letter-spacing:-0.036px;">Guardrail</span><svg class="b" style="left:2341.00px;top:495.32px;" width="22.60" height="22.60" viewBox="0 0 16 16"><path d="M3 3.2H13L8 13z" fill="none" stroke="#1ec79c" stroke-width="1.1" stroke-linecap="round" stroke-linejoin="round" /><rect x="1.5" y="1.7000000000000002" width="3" height="3" fill="#2b2b2b" stroke="#1ec79c" stroke-width="1"/><rect x="11.5" y="1.7000000000000002" width="3" height="3" fill="#2b2b2b" stroke="#1ec79c" stroke-width="1"/><rect x="6.5" y="11.5" width="3" height="3" fill="#2b2b2b" stroke="#1ec79c" stroke-width="1"/></svg><svg class="b" style="left:2463.00px;top:497.32px;" width="19.60" height="19.60" viewBox="0 0 16 16"><path d="M2 1.6L14.6 6.3L9.3 8.6L7.3 14.6z" fill="#e6e6e6" fill-rule="evenodd" /></svg><svg class="b" style="left:2491.40px;top:495.92px;" width="22.00" height="22.00" viewBox="0 0 16 16"><path d="M0.6 8Q8 0.8 15.4 8Q8 15.2 0.6 8zM4.5 8a3.5 3.5 0 1 0 7.0 0a3.5 3.5 0 1 0 -7.0 0zM6.3 8a1.7 1.7 0 1 0 3.4 0a1.7 1.7 0 1 0 -3.4 0z" fill="#e6e6e6" fill-rule="evenodd" /></svg><svg class="b" style="left:2520.80px;top:496.32px;" width="21.40" height="21.40" viewBox="0 0 16 16"><path d="M1 4.6h3.2l1.3-2.2h5l1.3 2.2H15v9.6H1zM4.1 9.2a3.9 3.9 0 1 0 7.8 0a3.9 3.9 0 1 0 -7.8 0zM5.3 9.2a2.7 2.7 0 1 0 5.4 0a2.7 2.7 0 1 0 -5.4 0zM6.7 9.2a1.3 1.3 0 1 0 2.6 0a1.3 1.3 0 1 0 -2.6 0z" fill="#e6e6e6" fill-rule="evenodd" /></svg><svg class="b" style="left:2207.60px;top:524.48px;" width="23.00" height="23.00" viewBox="0 0 16 16"><path d="M2.4 3.2H13.6L8 13.4z" fill="none" stroke="#dc9254" stroke-width="2.5" stroke-linecap="round" stroke-linejoin="round" /></svg><svg class="b" style="left:2272.00px;top:524.27px;" width="22.60" height="22.60" viewBox="0 0 16 16"><path d="M3 3.2H13L8 13z" fill="none" stroke="#1ec79c" stroke-width="1.1" stroke-linecap="round" stroke-linejoin="round" /><rect x="1.5" y="1.7000000000000002" width="3" height="3" fill="#282828" stroke="#1ec79c" stroke-width="1"/><rect x="11.5" y="1.7000000000000002" width="3" height="3" fill="#282828" stroke="#1ec79c" stroke-width="1"/><rect x="6.5" y="11.5" width="3" height="3" fill="#282828" stroke="#1ec79c" stroke-width="1"/></svg><div class="b" style="left:2159.00px;top:181.00px;width:1.20px;height:44.00px;background:#4d4d4d;"></div><div class="b" style="left:2159.00px;top:355.00px;width:1.20px;height:172.00px;background:#4d4d4d;"></div><div class="b" style="left:2551.50px;top:117.40px;width:5.50px;height:209.20px;background:#4f4f4f;border-radius:3px;"></div><div class="b" style="left:2128.00px;top:521.40px;width:409.00px;height:4.60px;background:#3a3a3a;border-radius:3px;"></div></div>
<div class="b" style="left:0;top:0;width:100%;height:100%;border:1px solid rgba(255,255,255,0.04);border-radius:7px"></div>
</div>
<div class="b" style="left:2118px;top:532px;width:440.5px;height:954.5px;background:#303030;border-radius:7px;overflow:hidden">
<div class="b" style="left:-2118px;top:-532px"><div class="b" style="left:2128.20px;top:535.40px;width:45.30px;height:28.20px;background:#282828;border-radius:6px;border:1px solid #3a3a3a;"></div><svg class="b" style="left:2134.00px;top:538.40px;" width="22.40" height="22.40" viewBox="0 0 16 16"><rect x="1" y="1.6" width="14" height="5.4" rx="2.7" fill="#e0e0e0"/><rect x="1" y="9" width="14" height="5.4" rx="2.7" fill="#e0e0e0"/><rect x="9.2" y="2.6" width="4.8" height="3.4" rx="1.7" fill="#282828"/><rect x="10.4" y="10" width="3.6" height="3.4" rx="1.7" fill="#282828"/></svg><svg class="b" style="left:2152.60px;top:539.60px;" width="23.00" height="23.00" viewBox="0 0 16 16"><path d="M5.3 6.7L8 9.4L10.7 6.7" fill="none" stroke="#dcdcdc" stroke-width="1.15" stroke-linecap="round" stroke-linejoin="round" /></svg><div class="b" style="left:2250.60px;top:535.40px;width:173.20px;height:28.20px;background:#1d1d1d;border-radius:6px;border:1px solid #3a3a3a;"></div><svg class="b" style="left:2257.00px;top:538.60px;" width="22.60" height="22.60" viewBox="0 0 16 16"><path d="M5.3999999999999995 6.2a4.2 4.2 0 1 0 8.4 0a4.2 4.2 0 1 0 -8.4 0zM6.6 9.4L1.6 14.6" fill="none" stroke="#dcdcdc" stroke-width="1.25" stroke-linecap="round" stroke-linejoin="round" /></svg><span class="t" style="left:2289.40px;top:541px;font-size:17px;line-height:17px;color:#777;letter-spacing:-0.045px;">Search</span><div class="b" style="left:2520.50px;top:535.40px;width:27.80px;height:28.20px;background:#282828;border-radius:6px;border:1px solid #3a3a3a;"></div><svg class="b" style="left:2522.90px;top:539.80px;" width="23.00" height="23.00" viewBox="0 0 16 16"><path d="M5.3 6.7L8 9.4L10.7 6.7" fill="none" stroke="#dcdcdc" stroke-width="1.15" stroke-linecap="round" stroke-linejoin="round" /></svg><div class="b" style="left:2118.00px;top:567.40px;width:42.20px;height:922.60px;background:#1d1d1d;"></div><div class="b" style="left:2122.20px;top:1134.40px;width:38.00px;height:37.60px;background:#303030;border-radius:6px 0 0 6px;"></div><svg class="b" style="left:2129.40px;top:587.90px;" width="23.20" height="23.20" viewBox="0 0 16 16"><path d="M4 1.6v7" fill="none" stroke="#c4c4c4" stroke-width="1.3" stroke-linecap="round" stroke-linejoin="round" /><path d="M2.4 9.4h3.2v3.2a1.6 1.6 0 0 1-3.2 0z" fill="#c4c4c4" fill-rule="evenodd" /><path d="M9.2 1.4v3.8l1.6 1.4v6.6a1.3 1.3 0 0 0 2.6 0V6.6L15 5.2V1.4l-1.6 1v2.4h-2.6V2.4z" fill="#c4c4c4" fill-rule="evenodd" /></svg><svg class="b" style="left:2129.40px;top:638.30px;" width="23.20" height="23.20" viewBox="0 0 16 16"><path d="M1 4.2h14v10H1z M2.4 2h4v1.4h-4z M12.6 2.2h1.6v1.2h-1.6z" fill="#c4c4c4" fill-rule="evenodd" /><rect x="3" y="6" width="6.4" height="6" fill="#1d1d1d"/><rect x="11.2" y="6.2" width="2.4" height="1.4" fill="#1d1d1d"/><rect x="11.2" y="9" width="2.4" height="1.4" fill="#1d1d1d"/></svg><svg class="b" style="left:2129.40px;top:678.90px;" width="23.20" height="23.20" viewBox="0 0 16 16"><path d="M1 2.6a2 2 0 0 1 2-2h10a2 2 0 0 1 2 2v4.8h-2.4V5.4H3.4v2H1z M3.6 6.6h8.8v8H3.6z" fill="#c4c4c4" fill-rule="evenodd" /><path d="M4.8 13.4l2.4-3.2 1.6 1.8 1-1 1.6 2.4zM9.0 8.6a0.8 0.8 0 1 0 1.6 0a0.8 0.8 0 1 0 -1.6 0z" fill="#1d1d1d" fill-rule="evenodd" /></svg><svg class="b" style="left:2129.40px;top:718.90px;" width="23.20" height="23.20" viewBox="0 0 16 16"><path d="M1.4 4.6v9.8h9.8M3.2 3v9.6h9.6" fill="none" stroke="#c4c4c4" stroke-width="1.0" stroke-linecap="round" stroke-linejoin="round" /><rect x="5" y="1.2" width="9.8" height="9.8" fill="#1d1d1d" stroke="#c4c4c4" stroke-width="1.1"/><path d="M5.6 10.4L9.4 5.2l2.2 2.8 1-1.2 2 3.6z" fill="#c4c4c4" fill-rule="evenodd" /><path d="M11.4 3.6a1 1 0 1 0 2 0a1 1 0 1 0 -2 0z" fill="#c4c4c4" fill-rule="evenodd" /></svg><svg class="b" style="left:2129.40px;top:759.00px;" width="23.20" height="23.20" viewBox="0 0 16 16"><path d="M5.7 1.2L10 10.6Q5.5 13.8 0.8 11.6z" fill="#c4c4c4" fill-rule="evenodd" /><path d="M11.3 3.0a2.2 2.2 0 1 0 4.4 0a2.2 2.2 0 1 0 -4.4 0z" fill="#c4c4c4" fill-rule="evenodd" /><circle cx="11.4" cy="11.7" r="3.9" fill="#1d1d1d" stroke="#1d1d1d" stroke-width="2.6"/><circle cx="11.4" cy="11.7" r="3.9" fill="#1d1d1d" stroke="#c4c4c4" stroke-width="1.1"/><path d="M9.4 10.6a2.3 2.3 0 0 1 1.5-1.4" fill="none" stroke="#c4c4c4" stroke-width="0.8" stroke-linecap="round" stroke-linejoin="round" /></svg><svg class="b" style="left:2129.40px;top:799.60px;" width="23.20" height="23.20" viewBox="0 0 16 16"><path d="M2 8a6 6 0 1 0 12 0a6 6 0 1 0 -12 0z" fill="none" stroke="#bd5568" stroke-width="1.1" stroke-linecap="round" stroke-linejoin="round" /><path d="M4 5.4l2.6-1.6 2 0.8-0.6 1.8-2 0.8 0.2 1.6 2.4 0.6 1 2-1.6 1.8-1.4-0.6-0.4-2.6-2-1.4z M11 4.4l2 2.2-1.4 0.6z" fill="#bd5568" fill-rule="evenodd" /><path d="M2 14L14.2 1.8" fill="none" stroke="#bd5568" stroke-width="0.9" stroke-linecap="round" stroke-linejoin="round" /></svg><svg class="b" style="left:2129.40px;top:849.40px;" width="23.20" height="23.20" viewBox="0 0 16 16"><path d="M1.8 2h12.4v2.6H1.8zM2.8 4.8v9.6h10.4V4.8M6.2 7.6h3.6v1.4H6.2z" fill="none" stroke="#e0e0e0" stroke-width="1.1" stroke-linecap="round" stroke-linejoin="round" /></svg><svg class="b" style="left:2129.40px;top:901.30px;" width="23.20" height="23.20" viewBox="0 0 16 16"><path d="M1.4 4.4v-3h3M11.6 1.4h3v3M14.6 11.6v3h-3M4.4 14.6h-3v-3" fill="none" stroke="#c68a55" stroke-width="1.0" stroke-linecap="round" stroke-linejoin="round" opacity="0.8"/><rect x="3.8" y="3.8" width="8.4" height="8.4" fill="#c68a55"/></svg><svg class="b" style="left:2129.40px;top:941.00px;" width="23.20" height="23.20" viewBox="0 0 16 16"><path d="M10.2 1.2a4 4 0 0 0-3.5 5.6L1.5 12a1.9 1.9 0 0 0 2.6 2.6l5.2-5.2a4 4 0 0 0 5.6-3.5l-2.6 1.8-2.3-0.7-0.7-2.3z" fill="#5d8be0" fill-rule="evenodd" /></svg><svg class="b" style="left:2129.40px;top:981.10px;" width="23.20" height="23.20" viewBox="0 0 16 16"><path d="M3.4 3.2L12.6 10.4M3.2 4v7.4M4.6 2.8h8" fill="none" stroke="#5d8be0" stroke-width="1.0" stroke-linecap="round" stroke-linejoin="round" /><circle cx="3.2" cy="3" r="2.2" fill="#5d8be0"/><circle cx="13.2" cy="11" r="1.6" fill="#5d8be0"/><circle cx="3.2" cy="12" r="1.2" fill="#5d8be0"/><circle cx="13.4" cy="2.8" r="1.2" fill="#5d8be0"/></svg><svg class="b" style="left:2129.40px;top:1021.10px;" width="23.20" height="23.20" viewBox="0 0 16 16"><path d="M13 12.6A6.4 6.4 0 1 1 10.4 2" fill="none" stroke="#5d8be0" stroke-width="1.1" stroke-linecap="round" stroke-linejoin="round" /><circle cx="8" cy="8" r="2.7" fill="#5d8be0"/><circle cx="13.2" cy="2.8" r="1.6" fill="#5d8be0"/></svg><svg class="b" style="left:2129.40px;top:1061.70px;" width="23.20" height="23.20" viewBox="0 0 16 16"><path d="M9.8 1.6h3.2a1.6 1.6 0 0 1 1.6 1.8c-0.6 5.4-4.4 10-9.4 11a3.6 3.6 0 0 1-4-4.6C2.2 6 5.8 2.6 9.8 1.6z" fill="none" stroke="#5d8be0" stroke-width="1.1" stroke-linecap="round" stroke-linejoin="round" /><path d="M3.6999999999999997 9.4a2.9 2.9 0 1 0 5.8 0a2.9 2.9 0 1 0 -5.8 0z" fill="none" stroke="#5d8be0" stroke-width="1.1" stroke-linecap="round" stroke-linejoin="round" /><circle cx="6.6" cy="9.4" r="1.2" fill="#5d8be0"/></svg><svg class="b" style="left:2129.40px;top:1101.20px;" width="23.20" height="23.20" viewBox="0 0 16 16"><path d="M3 3.2H13L8 13z" fill="none" stroke="#19bf96" stroke-width="1.1" stroke-linecap="round" stroke-linejoin="round" /><rect x="1.5" y="1.7000000000000002" width="3" height="3" fill="#1d1d1d" stroke="#19bf96" stroke-width="1"/><rect x="11.5" y="1.7000000000000002" width="3" height="3" fill="#1d1d1d" stroke="#19bf96" stroke-width="1"/><rect x="6.5" y="11.5" width="3" height="3" fill="#1d1d1d" stroke="#19bf96" stroke-width="1"/></svg><svg class="b" style="left:2129.40px;top:1141.20px;" width="23.20" height="23.20" viewBox="0 0 16 16"><circle cx="8" cy="8" r="6.6" fill="#e4606c"/><path d="M8 8V1.4A6.6 6.6 0 0 0 1.4 8z M8 8v6.6A6.6 6.6 0 0 0 14.6 8z" fill="#303030" fill-rule="evenodd" /><circle cx="8" cy="8" r="6.6" fill="none" stroke="#e4606c" stroke-width="1.2"/></svg><div class="b" style="left:2124.00px;top:621.00px;width:36.20px;height:1.00px;background:#171717;"></div><div class="b" style="left:2124.00px;top:831.50px;width:36.20px;height:1.00px;background:#171717;"></div><div class="b" style="left:2124.00px;top:882.50px;width:36.20px;height:1.00px;background:#171717;"></div><svg class="b" style="left:2174.60px;top:582.80px;" width="22.60" height="22.60" viewBox="0 0 16 16"><path d="M1.6 4.6v-3h3M11.4 1.6h3v3M14.4 11.4v3h-3M4.6 14.4h-3v-3" fill="none" stroke="#e0e0e0" stroke-width="1.1" stroke-linecap="round" stroke-linejoin="round" /><rect x="4" y="4" width="8" height="8" fill="#e0e0e0"/></svg><span class="t" style="left:2211.20px;top:586px;font-size:17px;line-height:17px;color:#e6e6e6;letter-spacing:0.074px;">AutomationStationB...</span><svg class="b" style="left:2386.40px;top:582.60px;" width="23.00" height="23.00" viewBox="0 0 16 16"><path d="M6.2 3.4L10.8 8L6.2 12.6" fill="none" stroke="#dcdcdc" stroke-width="1.25" stroke-linecap="round" stroke-linejoin="round" /></svg><svg class="b" style="left:2415.60px;top:582.60px;" width="23.00" height="23.00" viewBox="0 0 16 16"><circle cx="8" cy="8" r="6.4" fill="#e6e6e6"/><path d="M8 8V1.6A6.4 6.4 0 0 1 14.4 8z M8 8v6.4A6.4 6.4 0 0 1 1.6 8z" fill="#303030" fill-rule="evenodd" /><circle cx="8" cy="8" r="6.4" fill="none" stroke="#e6e6e6" stroke-width="1.1"/></svg><span class="t" style="left:2452.30px;top:586px;font-size:17px;line-height:17px;color:#e6e6e6;letter-spacing:-0.271px;">Glass</span><svg class="b" style="left:2522.60px;top:582.60px;" width="22.60" height="22.60" viewBox="0 0 16 16"><path d="M9.6 1.6l4.8 4.8-1.2 0.4-2.2 2.4 0.2 3-1.2 0.6-5.2-5.2 0.6-1.2 3 0.2 2.4-2.2zM6.6 9.8L1.6 14.6" fill="none" stroke="#9a9a9a" stroke-width="1.1" stroke-linecap="round" stroke-linejoin="round" /></svg><div class="b" style="left:2172.60px;top:633.30px;width:333.60px;height:171.90px;background:#282828;border-radius:6px;border:1px solid #3a3a3a;"></div><div class="b" style="left:2180.00px;top:699.10px;width:318.80px;height:26.70px;background:#4772b3;border-radius:5px;"></div><svg class="b" style="left:2192.9px;top:644px" width="20" height="20"><defs><radialGradient id="gtire" cx="0.4" cy="0.35" r="0.7"><stop offset="0" stop-color="#3a3a3a"/><stop offset="1" stop-color="#0c0c0c"/></radialGradient></defs><circle cx="10" cy="10" r="9.4" fill="url(#gtire)"/><circle cx="7" cy="7" r="0.7" fill="#666"/><circle cx="12" cy="9" r="0.6" fill="#555"/><circle cx="9" cy="13" r="0.6" fill="#555"/></svg><span class="t" style="left:2225.40px;top:646px;font-size:17px;line-height:17px;color:#8c8c8c;letter-spacing:0.388px;">Tire</span><svg class="b" style="left:2192.9px;top:673.1px" width="20" height="20"><defs><radialGradient id="gred" cx="0.4" cy="0.35" r="0.7"><stop offset="0" stop-color="#c4625c"/><stop offset="1" stop-color="#7d2b2a"/></radialGradient></defs><circle cx="10" cy="10" r="9.4" fill="url(#gred)"/></svg><span class="t" style="left:2225.40px;top:675px;font-size:17px;line-height:17px;color:#8c8c8c;letter-spacing:0.025px;">Red Light</span><svg class="b" style="left:2192.9px;top:702.4px" width="20" height="20"><defs><radialGradient id="gglass" cx="0.4" cy="0.35" r="0.7"><stop offset="0" stop-color="#5a5a5a"/><stop offset="1" stop-color="#0a0a0a"/></radialGradient></defs><circle cx="10" cy="10" r="9.4" fill="url(#gglass)"/><ellipse cx="7" cy="6.4" rx="2.6" ry="1.8" fill="#e8e8e8" opacity="0.85"/><path d="M3 13a8 8 0 0 0 13 1" stroke="#888" stroke-width="1" fill="none" opacity="0.6"/></svg><span class="t" style="left:2225.40px;top:704px;font-size:17px;line-height:17px;color:#ffffff;letter-spacing:-0.251px;">Glass</span><svg class="b" style="left:2181.40px;top:780.00px;" width="23.00" height="23.00" viewBox="0 0 16 16"><path d="M5 4.6L11.6 8L5 11.4z" fill="#b0b0b0" fill-rule="evenodd" /></svg><svg class="b" style="left:2345px;top:789px" width="15" height="6"><rect x="0.0" y="0.0" width="1.7" height="1.7" fill="#9a9a9a"/><rect x="0.0" y="3.6" width="1.7" height="1.7" fill="#9a9a9a"/><rect x="3.9" y="0.0" width="1.7" height="1.7" fill="#9a9a9a"/><rect x="3.9" y="3.6" width="1.7" height="1.7" fill="#9a9a9a"/><rect x="7.8" y="0.0" width="1.7" height="1.7" fill="#9a9a9a"/><rect x="7.8" y="3.6" width="1.7" height="1.7" fill="#9a9a9a"/><rect x="11.7" y="0.0" width="1.7" height="1.7" fill="#9a9a9a"/><rect x="11.7" y="3.6" width="1.7" height="1.7" fill="#9a9a9a"/></svg><div class="b" style="left:2519.60px;top:634.20px;width:27.50px;height:27.00px;background:#545454;border-radius:6px 6px 0 0;"></div><svg class="b" style="left:2521.80px;top:636.20px;" width="23.00" height="23.00" viewBox="0 0 16 16"><path d="M8 3.4v9.2M3.4 8h9.2" fill="none" stroke="#e6e6e6" stroke-width="1.15" stroke-linecap="round" stroke-linejoin="round" /></svg><div class="b" style="left:2519.60px;top:661.90px;width:27.50px;height:28.60px;background:#545454;border-radius:0 0 6px 6px;"></div><svg class="b" style="left:2521.80px;top:664.80px;" width="23.00" height="23.00" viewBox="0 0 16 16"><path d="M3.6 8h8.8" fill="none" stroke="#e6e6e6" stroke-width="1.15" stroke-linecap="round" stroke-linejoin="round" /></svg><div class="b" style="left:2519.60px;top:699.40px;width:27.50px;height:27.60px;background:#282828;border-radius:6px;border:1px solid #3a3a3a;"></div><svg class="b" style="left:2521.80px;top:701.60px;" width="23.00" height="23.00" viewBox="0 0 16 16"><path d="M3.5 5.7L8 10.2L12.5 5.7" fill="none" stroke="#e6e6e6" stroke-width="1.2" stroke-linecap="round" stroke-linejoin="round" /></svg><div class="b" style="left:2519.60px;top:737.00px;width:27.50px;height:27.40px;background:#545454;border-radius:6px 6px 0 0;"></div><svg class="b" style="left:2521.80px;top:739.40px;" width="23.00" height="23.00" viewBox="0 0 16 16"><path d="M8 4.6L12.2 10.6H3.8z" fill="#e6e6e6" fill-rule="evenodd" /></svg><div class="b" style="left:2519.60px;top:765.10px;width:27.50px;height:27.70px;background:#545454;border-radius:0 0 6px 6px;"></div><svg class="b" style="left:2521.80px;top:767.40px;" width="23.00" height="23.00" viewBox="0 0 16 16"><path d="M8 11.4L12.2 5.4H3.8z" fill="#e6e6e6" fill-rule="evenodd" /></svg><div class="b" style="left:2172.60px;top:813.60px;width:45.10px;height:27.50px;background:#282828;border-radius:6px 0 0 6px;border:1px solid #3a3a3a;"></div><svg class="b" style="left:2178.00px;top:816.00px;" width="22.60" height="22.60" viewBox="0 0 16 16"><circle cx="8" cy="8" r="6.4" fill="#e6e6e6"/><path d="M8 8V1.6A6.4 6.4 0 0 1 14.4 8z M8 8v6.4A6.4 6.4 0 0 1 1.6 8z" fill="#282828" fill-rule="evenodd" /><circle cx="8" cy="8" r="6.4" fill="none" stroke="#e6e6e6" stroke-width="1.1"/></svg><svg class="b" style="left:2197.00px;top:817.60px;" width="23.00" height="23.00" viewBox="0 0 16 16"><path d="M5.3 6.7L8 9.4L10.7 6.7" fill="none" stroke="#dcdcdc" stroke-width="1.15" stroke-linecap="round" stroke-linejoin="round" /></svg><div class="b" style="left:2217.70px;top:813.60px;width:142.60px;height:27.50px;background:#1d1d1d;border-radius:0;border:1px solid #3a3a3a;"></div><span class="t" style="left:2229.00px;top:818px;font-size:17px;line-height:17px;color:#e6e6e6;letter-spacing:-0.211px;">Glass</span><div class="b" style="left:2360.30px;top:813.60px;width:41.70px;height:27.50px;background:#545454;border-radius:0;"></div><span class="t" style="left:2376.27px;top:818px;font-size:17px;line-height:17px;color:#e6e6e6;">2</span><div class="b" style="left:2402.80px;top:813.60px;width:28.00px;height:27.50px;background:#545454;border-radius:0;"></div><svg class="b" style="left:2405.60px;top:816.20px;" width="22.60" height="22.60" viewBox="0 0 16 16"><path d="M8 1.6l5.6 1.6v4.4c0 3.4-2.4 5.6-5.6 6.8c-3.2-1.2-5.6-3.4-5.6-6.8V3.2z" fill="none" stroke="#c4c4c4" stroke-width="1.1" stroke-linecap="round" stroke-linejoin="round" /></svg><div class="b" style="left:2431.60px;top:813.60px;width:28.20px;height:27.50px;background:#545454;border-radius:0;"></div><svg class="b" style="left:2434.60px;top:816.20px;" width="22.60" height="22.60" viewBox="0 0 16 16"><path d="M5.2 1.3h6.1l4 4v4.9H5.2zM3.6 4.6H0.9V15h10.6v-3" fill="none" stroke="#dedede" stroke-width="1.1" stroke-linecap="round" stroke-linejoin="round" /><path d="M11.1 1.1v4.4h4.4z" fill="#dedede" fill-rule="evenodd" /></svg><div class="b" style="left:2460.60px;top:813.60px;width:28.40px;height:27.50px;background:#545454;border-radius:0 6px 6px 0;"></div><svg class="b" style="left:2463.40px;top:816.00px;" width="23.00" height="23.00" viewBox="0 0 16 16"><path d="M4 4L12 12M12 4L4 12" fill="none" stroke="#e6e6e6" stroke-width="1.2" stroke-linecap="round" stroke-linejoin="round" /></svg><div class="b" style="left:2502.70px;top:813.60px;width:45.00px;height:27.50px;background:#282828;border-radius:6px;border:1px solid #3a3a3a;"></div><svg class="b" style="left:2507.40px;top:816.60px;" width="22.40" height="22.40" viewBox="0 0 16 16"><path d="M3 3.2H13L8 13z" fill="none" stroke="#e0e0e0" stroke-width="1.1" stroke-linecap="round" stroke-linejoin="round" /><rect x="1.5" y="1.7000000000000002" width="3" height="3" fill="#282828" stroke="#e0e0e0" stroke-width="1"/><rect x="11.5" y="1.7000000000000002" width="3" height="3" fill="#282828" stroke="#e0e0e0" stroke-width="1"/><rect x="6.5" y="11.5" width="3" height="3" fill="#282828" stroke="#e0e0e0" stroke-width="1"/></svg><svg class="b" style="left:2526.40px;top:817.60px;" width="23.00" height="23.00" viewBox="0 0 16 16"><path d="M5.3 6.7L8 9.4L10.7 6.7" fill="none" stroke="#dcdcdc" stroke-width="1.15" stroke-linecap="round" stroke-linejoin="round" /></svg><div class="b" style="left:2171.20px;top:856.50px;width:375.90px;height:35.00px;background:#3d3d3d;border-radius:6px;"></div><svg class="b" style="left:2175.60px;top:862.80px;" width="23.00" height="23.00" viewBox="0 0 16 16"><path d="M6.2 3.4L10.8 8L6.2 12.6" fill="none" stroke="#dcdcdc" stroke-width="1.25" stroke-linecap="round" stroke-linejoin="round" /></svg><span class="t" style="left:2202.30px;top:867px;font-size:17px;line-height:17px;color:#e6e6e6;letter-spacing:0.119px;">Preview</span><svg class="b" style="left:2521.6px;top:870.6px" width="15" height="6"><rect x="0.0" y="0.0" width="1.7" height="1.7" fill="#8a8a8a"/><rect x="0.0" y="3.6" width="1.7" height="1.7" fill="#8a8a8a"/><rect x="3.9" y="0.0" width="1.7" height="1.7" fill="#8a8a8a"/><rect x="3.9" y="3.6" width="1.7" height="1.7" fill="#8a8a8a"/><rect x="7.8" y="0.0" width="1.7" height="1.7" fill="#8a8a8a"/><rect x="7.8" y="3.6" width="1.7" height="1.7" fill="#8a8a8a"/><rect x="11.7" y="0.0" width="1.7" height="1.7" fill="#8a8a8a"/><rect x="11.7" y="3.6" width="1.7" height="1.7" fill="#8a8a8a"/></svg><div class="b" style="left:2171.20px;top:894.20px;width:375.90px;height:605.80px;background:#3d3d3d;border-radius:6px;"></div><svg class="b" style="left:2178.80px;top:901.40px;" width="23.00" height="23.00" viewBox="0 0 16 16"><path d="M3.5 5.7L8 10.2L12.5 5.7" fill="none" stroke="#dcdcdc" stroke-width="1.2" stroke-linecap="round" stroke-linejoin="round" /></svg><span class="t" style="left:2202.30px;top:905px;font-size:17px;line-height:17px;color:#e6e6e6;letter-spacing:0.159px;">Surface</span><svg class="b" style="left:2521.6px;top:908.8px" width="15" height="6"><rect x="0.0" y="0.0" width="1.7" height="1.7" fill="#8a8a8a"/><rect x="0.0" y="3.6" width="1.7" height="1.7" fill="#8a8a8a"/><rect x="3.9" y="0.0" width="1.7" height="1.7" fill="#8a8a8a"/><rect x="3.9" y="3.6" width="1.7" height="1.7" fill="#8a8a8a"/><rect x="7.8" y="0.0" width="1.7" height="1.7" fill="#8a8a8a"/><rect x="7.8" y="3.6" width="1.7" height="1.7" fill="#8a8a8a"/><rect x="11.7" y="0.0" width="1.7" height="1.7" fill="#8a8a8a"/><rect x="11.7" y="3.6" width="1.7" height="1.7" fill="#8a8a8a"/></svg><div class="b" style="left:2320.00px;top:943.20px;width:184.70px;height:26.60px;background:#282828;border-radius:6px;box-shadow:0 1px 0 #2f2f2f;"></div><svg class="b" style="left:2328.2px;top:950.5px" width="12" height="12"><circle cx="6" cy="6" r="5.3" fill="#63c763" stroke="#1a1a1a" stroke-width="0.8"/></svg><span class="t" style="left:2350.00px;top:947px;font-size:17px;line-height:17px;color:#e6e6e6;letter-spacing:-0.035px;">Principled BSDF</span><span class="t" style="left:2245.30px;top:947px;font-size:17px;line-height:17px;color:#e6e6e6;letter-spacing:0.201px;">Surface</span><div class="b" style="left:2320.00px;top:994.20px;width:27.60px;height:27.20px;background:#282828;border-radius:6px 0 0 6px;"></div><div class="b" style="left:2348.2px;top:994.2px;width:156.5px;height:27.2px;background:#545454;border-radius:0 6px 6px 0;overflow:hidden"></div><svg class="b" style="left:2328.2px;top:1001.8px" width="12" height="12"><circle cx="6" cy="6" r="5.3" fill="#c7c729" stroke="#1a1a1a" stroke-width="0.8"/></svg><span class="t" style="left:2221.60px;top:999px;font-size:17px;line-height:17px;color:#e6e6e6;letter-spacing:-0.040px;">Base Color</span><svg class="b" style="left:2517px;top:1004.3px" width="7" height="7"><circle cx="3.5" cy="3.5" r="2.8" fill="#e6e6e6"/></svg><div class="b" style="left:2320.00px;top:1030.20px;width:27.60px;height:27.20px;background:#282828;border-radius:6px 0 0 6px;"></div><div class="b" style="left:2348.2px;top:1030.2px;width:156.5px;height:27.2px;background:#545454;border-radius:0 6px 6px 0;overflow:hidden"><div class="b" style="left:0;top:0;height:27.2px;width:78.2px;background:#4772b3"></div></div><svg class="b" style="left:2328.2px;top:1037.8px" width="12" height="12"><circle cx="6" cy="6" r="5.3" fill="#a1a1a1" stroke="#1a1a1a" stroke-width="0.8"/></svg><span class="t" style="left:2246.20px;top:1035px;font-size:17px;line-height:17px;color:#e6e6e6;letter-spacing:0.184px;">Metallic</span><span class="t" style="left:2404.93px;top:1035px;font-size:17px;line-height:17px;color:#e6e6e6;letter-spacing:1.1px;">0.500</span><svg class="b" style="left:2517px;top:1040.3px" width="7" height="7"><circle cx="3.5" cy="3.5" r="2.8" fill="#e6e6e6"/></svg><div class="b" style="left:2320.00px;top:1066.20px;width:27.60px;height:27.20px;background:#282828;border-radius:6px 0 0 6px;"></div><div class="b" style="left:2348.2px;top:1066.2px;width:156.5px;height:27.2px;background:#545454;border-radius:0 6px 6px 0;overflow:hidden"></div><svg class="b" style="left:2328.2px;top:1073.8px" width="12" height="12"><circle cx="6" cy="6" r="5.3" fill="#a1a1a1" stroke="#1a1a1a" stroke-width="0.8"/></svg><span class="t" style="left:2217.10px;top:1071px;font-size:17px;line-height:17px;color:#e6e6e6;letter-spacing:0.244px;">Roughness</span><span class="t" style="left:2404.93px;top:1071px;font-size:17px;line-height:17px;color:#e6e6e6;letter-spacing:1.1px;">0.000</span><svg class="b" style="left:2517px;top:1076.3px" width="7" height="7"><circle cx="3.5" cy="3.5" r="2.8" fill="#e6e6e6"/></svg><div class="b" style="left:2320.00px;top:1102.00px;width:27.60px;height:27.20px;background:#282828;border-radius:6px 0 0 6px;"></div><div class="b" style="left:2348.2px;top:1102.0px;width:156.5px;height:27.2px;background:#545454;border-radius:0 6px 6px 0;overflow:hidden"></div><svg class="b" style="left:2328.2px;top:1109.6px" width="12" height="12"><circle cx="6" cy="6" r="5.3" fill="#a1a1a1" stroke="#1a1a1a" stroke-width="0.8"/></svg><span class="t" style="left:2274.90px;top:1107px;font-size:17px;line-height:17px;color:#e6e6e6;letter-spacing:0.059px;">IOR</span><span class="t" style="left:2404.93px;top:1107px;font-size:17px;line-height:17px;color:#e6e6e6;letter-spacing:1.1px;">0.450</span><svg class="b" style="left:2517px;top:1112.1px" width="7" height="7"><circle cx="3.5" cy="3.5" r="2.8" fill="#e6e6e6"/></svg><div class="b" style="left:2320.00px;top:1138.00px;width:27.60px;height:27.20px;background:#282828;border-radius:6px 0 0 6px;"></div><div class="b" style="left:2348.2px;top:1138.0px;width:156.5px;height:27.2px;background:#545454;border-radius:0 6px 6px 0;overflow:hidden"><div class="b" style="left:0;top:0;height:27.2px;width:149.2px;background:#4772b3"></div></div><svg class="b" style="left:2328.2px;top:1145.6px" width="12" height="12"><circle cx="6" cy="6" r="5.3" fill="#a1a1a1" stroke="#1a1a1a" stroke-width="0.8"/></svg><span class="t" style="left:2262.20px;top:1143px;font-size:17px;line-height:17px;color:#e6e6e6;letter-spacing:-0.076px;">Alpha</span><span class="t" style="left:2404.93px;top:1143px;font-size:17px;line-height:17px;color:#e6e6e6;letter-spacing:1.1px;">0.950</span><svg class="b" style="left:2517px;top:1148.1px" width="7" height="7"><circle cx="3.5" cy="3.5" r="2.8" fill="#e6e6e6"/></svg><div class="b" style="left:2320.00px;top:1174.20px;width:184.70px;height:26.60px;background:#282828;border-radius:6px;"></div><svg class="b" style="left:2328.2px;top:1181.6px" width="12" height="12"><circle cx="6" cy="6" r="5.3" fill="#6363c7" stroke="#1a1a1a" stroke-width="0.8"/></svg><span class="t" style="left:2350.00px;top:1179px;font-size:17px;line-height:17px;color:#e6e6e6;letter-spacing:0.305px;">Default</span><span class="t" style="left:2250.30px;top:1179px;font-size:17px;line-height:17px;color:#e6e6e6;letter-spacing:0.035px;">Normal</span><svg class="b" style="left:2186.00px;top:1211.60px;" width="23.00" height="23.00" viewBox="0 0 16 16"><path d="M6.2 3.4L10.8 8L6.2 12.6" fill="none" stroke="#dcdcdc" stroke-width="1.25" stroke-linecap="round" stroke-linejoin="round" /></svg><span class="t" style="left:2222.20px;top:1215px;font-size:17px;line-height:17px;color:#e6e6e6;letter-spacing:0.442px;">Diffuse</span><svg class="b" style="left:2186.00px;top:1247.60px;" width="23.00" height="23.00" viewBox="0 0 16 16"><path d="M6.2 3.4L10.8 8L6.2 12.6" fill="none" stroke="#dcdcdc" stroke-width="1.25" stroke-linecap="round" stroke-linejoin="round" /></svg><span class="t" style="left:2222.20px;top:1251px;font-size:17px;line-height:17px;color:#e6e6e6;letter-spacing:0.290px;">Subsurface</span><svg class="b" style="left:2186.00px;top:1283.60px;" width="23.00" height="23.00" viewBox="0 0 16 16"><path d="M6.2 3.4L10.8 8L6.2 12.6" fill="none" stroke="#dcdcdc" stroke-width="1.25" stroke-linecap="round" stroke-linejoin="round" /></svg><span class="t" style="left:2222.20px;top:1287px;font-size:17px;line-height:17px;color:#e6e6e6;letter-spacing:0.175px;">Specular</span><svg class="b" style="left:2186.00px;top:1319.60px;" width="23.00" height="23.00" viewBox="0 0 16 16"><path d="M6.2 3.4L10.8 8L6.2 12.6" fill="none" stroke="#dcdcdc" stroke-width="1.25" stroke-linecap="round" stroke-linejoin="round" /></svg><span class="t" style="left:2222.20px;top:1323px;font-size:17px;line-height:17px;color:#e6e6e6;letter-spacing:0.304px;">Transmission</span><svg class="b" style="left:2186.00px;top:1355.60px;" width="23.00" height="23.00" viewBox="0 0 16 16"><path d="M6.2 3.4L10.8 8L6.2 12.6" fill="none" stroke="#dcdcdc" stroke-width="1.25" stroke-linecap="round" stroke-linejoin="round" /></svg><span class="t" style="left:2222.20px;top:1359px;font-size:17px;line-height:17px;color:#e6e6e6;letter-spacing:-0.028px;">Coat</span><svg class="b" style="left:2186.00px;top:1391.60px;" width="23.00" height="23.00" viewBox="0 0 16 16"><path d="M6.2 3.4L10.8 8L6.2 12.6" fill="none" stroke="#dcdcdc" stroke-width="1.25" stroke-linecap="round" stroke-linejoin="round" /></svg><span class="t" style="left:2222.20px;top:1395px;font-size:17px;line-height:17px;color:#e6e6e6;letter-spacing:0.188px;">Sheen</span><svg class="b" style="left:2186.00px;top:1427.60px;" width="23.00" height="23.00" viewBox="0 0 16 16"><path d="M6.2 3.4L10.8 8L6.2 12.6" fill="none" stroke="#dcdcdc" stroke-width="1.25" stroke-linecap="round" stroke-linejoin="round" /></svg><span class="t" style="left:2222.20px;top:1431px;font-size:17px;line-height:17px;color:#e6e6e6;">Emission</span><svg class="b" style="left:2186.00px;top:1463.60px;" width="23.00" height="23.00" viewBox="0 0 16 16"><path d="M6.2 3.4L10.8 8L6.2 12.6" fill="none" stroke="#dcdcdc" stroke-width="1.25" stroke-linecap="round" stroke-linejoin="round" /></svg><span class="t" style="left:2222.20px;top:1467px;font-size:17px;line-height:17px;color:#e6e6e6;letter-spacing:0.045px;">Thin Film</span><div class="b" style="left:2551.30px;top:572.00px;width:5.70px;height:463.60px;background:#4f4f4f;border-radius:3px;"></div></div>
<div class="b" style="left:0;top:0;width:100%;height:100%;border:1px solid rgba(255,255,255,0.04);border-radius:7px"></div>
</div>
<div class="b" style="left:1.2px;top:1380.8px;width:2112.4px;height:105.8px;background:#1f1f1f;border-radius:7px;overflow:hidden">
<div class="b" style="left:-1.2px;top:-1380.8px"><div class="b" style="left:0.00px;top:1380.00px;width:2114.00px;height:37.00px;background:#303030;"></div><div class="b" style="left:0.00px;top:1451.70px;width:2114.00px;height:35.30px;background:#222222;"></div><div class="b" style="left:77.56px;top:1451.70px;width:1957.89px;height:34.80px;background:#2d2d2d;"></div><svg class="b" style="left:0;top:1451.7px" width="2114" height="35"><rect x="29.8" y="0" width="1.2" height="35" fill="#1c1c1c"/><rect x="69.1" y="0" width="1.2" height="35" fill="#1c1c1c"/><rect x="108.4" y="0" width="1.2" height="35" fill="#1c1c1c"/><rect x="147.7" y="0" width="1.2" height="35" fill="#1c1c1c"/><rect x="187.0" y="0" width="1.2" height="35" fill="#1c1c1c"/><rect x="226.4" y="0" width="1.2" height="35" fill="#1c1c1c"/><rect x="265.7" y="0" width="1.2" height="35" fill="#1c1c1c"/><rect x="305.0" y="0" width="1.2" height="35" fill="#1c1c1c"/><rect x="344.3" y="0" width="1.2" height="35" fill="#1c1c1c"/><rect x="383.6" y="0" width="1.2" height="35" fill="#1c1c1c"/><rect x="422.9" y="0" width="1.2" height="35" fill="#1c1c1c"/><rect x="462.2" y="0" width="1.2" height="35" fill="#1c1c1c"/><rect x="501.6" y="0" width="1.2" height="35" fill="#1c1c1c"/><rect x="540.9" y="0" width="1.2" height="35" fill="#1c1c1c"/><rect x="580.2" y="0" width="1.2" height="35" fill="#1c1c1c"/><rect x="619.5" y="0" width="1.2" height="35" fill="#1c1c1c"/><rect x="658.8" y="0" width="1.2" height="35" fill="#1c1c1c"/><rect x="698.1" y="0" width="1.2" height="35" fill="#1c1c1c"/><rect x="737.5" y="0" width="1.2" height="35" fill="#1c1c1c"/><rect x="776.8" y="0" width="1.2" height="35" fill="#1c1c1c"/><rect x="816.1" y="0" width="1.2" height="35" fill="#1c1c1c"/><rect x="855.4" y="0" width="1.2" height="35" fill="#1c1c1c"/><rect x="894.7" y="0" width="1.2" height="35" fill="#1c1c1c"/><rect x="934.0" y="0" width="1.2" height="35" fill="#1c1c1c"/><rect x="973.3" y="0" width="1.2" height="35" fill="#1c1c1c"/><rect x="1012.7" y="0" width="1.2" height="35" fill="#1c1c1c"/><rect x="1052.0" y="0" width="1.2" height="35" fill="#1c1c1c"/><rect x="1091.3" y="0" width="1.2" height="35" fill="#1c1c1c"/><rect x="1130.6" y="0" width="1.2" height="35" fill="#1c1c1c"/><rect x="1169.9" y="0" width="1.2" height="35" fill="#1c1c1c"/><rect x="1209.2" y="0" width="1.2" height="35" fill="#1c1c1c"/><rect x="1248.6" y="0" width="1.2" height="35" fill="#1c1c1c"/><rect x="1287.9" y="0" width="1.2" height="35" fill="#1c1c1c"/><rect x="1327.2" y="0" width="1.2" height="35" fill="#1c1c1c"/><rect x="1366.5" y="0" width="1.2" height="35" fill="#1c1c1c"/><rect x="1405.8" y="0" width="1.2" height="35" fill="#1c1c1c"/><rect x="1445.1" y="0" width="1.2" height="35" fill="#1c1c1c"/><rect x="1484.4" y="0" width="1.2" height="35" fill="#1c1c1c"/><rect x="1523.8" y="0" width="1.2" height="35" fill="#1c1c1c"/><rect x="1563.1" y="0" width="1.2" height="35" fill="#1c1c1c"/><rect x="1602.4" y="0" width="1.2" height="35" fill="#1c1c1c"/><rect x="1641.7" y="0" width="1.2" height="35" fill="#1c1c1c"/><rect x="1681.0" y="0" width="1.2" height="35" fill="#1c1c1c"/><rect x="1720.3" y="0" width="1.2" height="35" fill="#1c1c1c"/><rect x="1759.6" y="0" width="1.2" height="35" fill="#1c1c1c"/><rect x="1799.0" y="0" width="1.2" height="35" fill="#1c1c1c"/><rect x="1838.3" y="0" width="1.2" height="35" fill="#1c1c1c"/><rect x="1877.6" y="0" width="1.2" height="35" fill="#1c1c1c"/><rect x="1916.9" y="0" width="1.2" height="35" fill="#1c1c1c"/><rect x="1956.2" y="0" width="1.2" height="35" fill="#1c1c1c"/><rect x="1995.5" y="0" width="1.2" height="35" fill="#1c1c1c"/><rect x="2034.9" y="0" width="1.2" height="35" fill="#1c1c1c"/><rect x="2074.2" y="0" width="1.2" height="35" fill="#1c1c1c"/><rect x="2113.5" y="0" width="1.2" height="35" fill="#1c1c1c"/><rect x="76.8" y="0" width="1.6" height="35" fill="#0c0c0c"/><rect x="2034.7" y="0" width="1.6" height="35" fill="#0c0c0c"/></svg><span class="t" style="left:64.07px;top:1427px;font-size:17px;line-height:17px;color:#b4b4b4;letter-spacing:0.8px;">0</span><span class="t" style="left:137.97px;top:1427px;font-size:17px;line-height:17px;color:#b4b4b4;letter-spacing:0.8px;">10</span><span class="t" style="left:216.60px;top:1427px;font-size:17px;line-height:17px;color:#b4b4b4;letter-spacing:0.8px;">20</span><span class="t" style="left:295.23px;top:1427px;font-size:17px;line-height:17px;color:#b4b4b4;letter-spacing:0.8px;">30</span><span class="t" style="left:373.86px;top:1427px;font-size:17px;line-height:17px;color:#b4b4b4;letter-spacing:0.8px;">40</span><span class="t" style="left:452.49px;top:1427px;font-size:17px;line-height:17px;color:#b4b4b4;letter-spacing:0.8px;">50</span><span class="t" style="left:531.12px;top:1427px;font-size:17px;line-height:17px;color:#b4b4b4;letter-spacing:0.8px;">60</span><span class="t" style="left:609.75px;top:1427px;font-size:17px;line-height:17px;color:#b4b4b4;letter-spacing:0.8px;">70</span><span class="t" style="left:688.38px;top:1427px;font-size:17px;line-height:17px;color:#b4b4b4;letter-spacing:0.8px;">80</span><span class="t" style="left:767.01px;top:1427px;font-size:17px;line-height:17px;color:#b4b4b4;letter-spacing:0.8px;">90</span><span class="t" style="left:840.92px;top:1427px;font-size:17px;line-height:17px;color:#b4b4b4;letter-spacing:0.8px;">100</span><span class="t" style="left:920.18px;top:1427px;font-size:17px;line-height:17px;color:#b4b4b4;letter-spacing:0.8px;">110</span><span class="t" style="left:998.18px;top:1427px;font-size:17px;line-height:17px;color:#b4b4b4;letter-spacing:0.8px;">120</span><span class="t" style="left:1076.81px;top:1427px;font-size:17px;line-height:17px;color:#b4b4b4;letter-spacing:0.8px;">130</span><span class="t" style="left:1155.44px;top:1427px;font-size:17px;line-height:17px;color:#b4b4b4;letter-spacing:0.8px;">140</span><span class="t" style="left:1234.07px;top:1427px;font-size:17px;line-height:17px;color:#b4b4b4;letter-spacing:0.8px;">150</span><span class="t" style="left:1312.70px;top:1427px;font-size:17px;line-height:17px;color:#b4b4b4;letter-spacing:0.8px;">160</span><span class="t" style="left:1391.33px;top:1427px;font-size:17px;line-height:17px;color:#b4b4b4;letter-spacing:0.8px;">170</span><span class="t" style="left:1469.96px;top:1427px;font-size:17px;line-height:17px;color:#b4b4b4;letter-spacing:0.8px;">180</span><span class="t" style="left:1548.59px;top:1427px;font-size:17px;line-height:17px;color:#b4b4b4;letter-spacing:0.8px;">190</span><span class="t" style="left:1627.22px;top:1427px;font-size:17px;line-height:17px;color:#b4b4b4;letter-spacing:0.8px;">200</span><span class="t" style="left:1705.85px;top:1427px;font-size:17px;line-height:17px;color:#b4b4b4;letter-spacing:0.8px;">210</span><span class="t" style="left:1784.48px;top:1427px;font-size:17px;line-height:17px;color:#b4b4b4;letter-spacing:0.8px;">220</span><span class="t" style="left:1863.11px;top:1427px;font-size:17px;line-height:17px;color:#b4b4b4;letter-spacing:0.8px;">230</span><span class="t" style="left:1941.74px;top:1427px;font-size:17px;line-height:17px;color:#b4b4b4;letter-spacing:0.8px;">240</span><span class="t" style="left:2020.37px;top:1427px;font-size:17px;line-height:17px;color:#b4b4b4;letter-spacing:0.8px;">250</span><div class="b" style="left:273.00px;top:1440.00px;width:2.20px;height:46.50px;background:#4772b3;"></div><div class="b" style="left:11.60px;top:1472.10px;width:2089.60px;height:12.60px;background:#565656;border-radius:7px;"></div><svg class="b" style="left:13.2px;top:1473.4px" width="10" height="10"><circle cx="5" cy="5" r="4.4" fill="#2c2c2c"/></svg><svg class="b" style="left:2090.1px;top:1473.4px" width="10" height="10"><circle cx="5" cy="5" r="4.4" fill="#2c2c2c"/></svg><div class="b" style="left:256.70px;top:1421.50px;width:35.70px;height:26.00px;background:#4772b3;border-radius:6px;"></div><span class="t" style="left:265.04px;top:1427px;font-size:17px;line-height:17px;color:#fff;letter-spacing:0.8px;">26</span><div class="b" style="left:11.60px;top:1385.60px;width:45.10px;height:27.60px;background:#282828;border-radius:6px;border:1px solid #3a3a3a;"></div><svg class="b" style="left:16.60px;top:1387.80px;" width="23.60" height="23.60" viewBox="0 0 16 16"><circle cx="8" cy="8" r="6.8" fill="#e8e8e8"/><path d="M9.6 3.7L7.5 8.3L10.8 11.5" fill="none" stroke="#282828" stroke-width="1.7" stroke-linecap="round" stroke-linejoin="round" /></svg><svg class="b" style="left:36.20px;top:1389.40px;" width="23.00" height="23.00" viewBox="0 0 16 16"><path d="M5.3 6.7L8 9.4L10.7 6.7" fill="none" stroke="#dcdcdc" stroke-width="1.15" stroke-linecap="round" stroke-linejoin="round" /></svg><div class="b" style="left:64.50px;top:1385.60px;width:195.80px;height:27.60px;background:#282828;border-radius:6px;border:1px solid #3a3a3a;"></div><div class="b" style="left:169.20px;top:1386.60px;width:1.00px;height:25.60px;background:#3d3d3d;"></div><span class="t" style="left:76.10px;top:1391px;font-size:17px;line-height:17px;color:#e6e6e6;letter-spacing:-0.060px;">Playback</span><svg class="b" style="left:149.40px;top:1389.40px;" width="23.00" height="23.00" viewBox="0 0 16 16"><path d="M5.3 6.7L8 9.4L10.7 6.7" fill="none" stroke="#dcdcdc" stroke-width="1.15" stroke-linecap="round" stroke-linejoin="round" /></svg><span class="t" style="left:181.20px;top:1391px;font-size:17px;line-height:17px;color:#e6e6e6;letter-spacing:0.186px;">Keying</span><svg class="b" style="left:240.10px;top:1389.40px;" width="23.00" height="23.00" viewBox="0 0 16 16"><path d="M5.3 6.7L8 9.4L10.7 6.7" fill="none" stroke="#dcdcdc" stroke-width="1.15" stroke-linecap="round" stroke-linejoin="round" /></svg><span class="t" style="left:275.30px;top:1391px;font-size:17px;line-height:17px;color:#e0e0e0;letter-spacing:0.239px;">View</span><span class="t" style="left:335.40px;top:1391px;font-size:17px;line-height:17px;color:#e0e0e0;letter-spacing:0.201px;">Marker</span><div class="b" style="left:923.60px;top:1385.60px;width:56.40px;height:27.60px;background:#282828;border-radius:6px;border:1px solid #3a3a3a;"></div><div class="b" style="left:923.60px;top:1385.60px;width:28.70px;height:27.60px;background:#545454;border-radius:6px 0 0 6px;"></div><svg class="b" style="left:926.40px;top:1387.90px;" width="23.00" height="23.00" viewBox="0 0 16 16"><path d="M3.0999999999999996 8a4.9 4.9 0 1 0 9.8 0a4.9 4.9 0 1 0 -9.8 0z" fill="none" stroke="#d6d6d6" stroke-width="0.85" stroke-linecap="round" stroke-linejoin="round" /></svg><svg class="b" style="left:954.60px;top:1389.40px;" width="23.00" height="23.00" viewBox="0 0 16 16"><path d="M5.3 6.7L8 9.4L10.7 6.7" fill="none" stroke="#5c5c5c" stroke-width="1.15" stroke-linecap="round" stroke-linejoin="round" /></svg><div class="b" style="left:989px;top:1385.5px;width:172px;height:27.5px;border-radius:6px;overflow:hidden"><div class="b" style="left:0px;top:0;width:29px;height:100%;background:#545454"></div><div class="b" style="left:29px;top:0;width:28px;height:100%;background:#545454"></div><div class="b" style="left:57px;top:0;width:29px;height:100%;background:#545454"></div><div class="b" style="left:86px;top:0;width:29px;height:100%;background:#545454"></div><div class="b" style="left:115px;top:0;width:29px;height:100%;background:#545454"></div><div class="b" style="left:144px;top:0;width:28px;height:100%;background:#545454"></div><div class="b" style="left:29px;top:0;width:1px;height:100%;background:#3a3a3a"></div><div class="b" style="left:57px;top:0;width:1px;height:100%;background:#3a3a3a"></div><div class="b" style="left:86px;top:0;width:1px;height:100%;background:#3a3a3a"></div><div class="b" style="left:115px;top:0;width:1px;height:100%;background:#3a3a3a"></div><div class="b" style="left:144px;top:0;width:1px;height:100%;background:#3a3a3a"></div></div><svg class="b" style="left:991.77px;top:1387.90px;" width="23.00" height="23.00" viewBox="0 0 16 16"><path d="M2.6 2.7h2.5v10.6H2.6z M13.2 2.9v10.2L5.8 8z" fill="#ececec" fill-rule="evenodd" /></svg><svg class="b" style="left:1020.50px;top:1387.90px;" width="23.00" height="23.00" viewBox="0 0 16 16"><path d="M0.2 8L4.8 2.4L9.4 8L4.8 13.6z M15.8 3.7v8.6L10.2 8z" fill="#ececec" fill-rule="evenodd" /></svg><svg class="b" style="left:1049.23px;top:1387.90px;" width="23.00" height="23.00" viewBox="0 0 16 16"><path d="M12.8 2.2v11.6L3.2 8z" fill="#ececec" stroke="#ececec" stroke-width="1.2" stroke-linejoin="round"/></svg><svg class="b" style="left:1077.97px;top:1387.90px;" width="23.00" height="23.00" viewBox="0 0 16 16"><path d="M4 2.2v11.6L13.6 8z" fill="#ececec" stroke="#ececec" stroke-width="1.2" stroke-linejoin="round"/></svg><svg class="b" style="left:1106.70px;top:1387.90px;" width="23.00" height="23.00" viewBox="0 0 16 16"><path d="M15.8 8L11.2 2.4L6.6 8L11.2 13.6z M0.2 3.7v8.6L5.8 8z" fill="#ececec" fill-rule="evenodd" /></svg><svg class="b" style="left:1135.43px;top:1387.90px;" width="23.00" height="23.00" viewBox="0 0 16 16"><path d="M10.9 2.7h2.5v10.6h-2.5z M2.8 2.9v10.2L10.2 8z" fill="#ececec" fill-rule="evenodd" /></svg><div class="b" style="left:1707.80px;top:1385.60px;width:106.50px;height:27.60px;background:#545454;border-radius:6px;"></div><span class="t" style="left:1751.54px;top:1391px;font-size:17px;line-height:17px;color:#e6e6e6;letter-spacing:0.8px;">26</span><div class="b" style="left:1823px;top:1385.5px;width:281px;height:27.5px;border-radius:6px;overflow:hidden"><div class="b" style="left:0px;top:0;width:27px;height:100%;background:#545454"></div><div class="b" style="left:27px;top:0;width:130px;height:100%;background:#545454"></div><div class="b" style="left:157px;top:0;width:124px;height:100%;background:#545454"></div><div class="b" style="left:27px;top:0;width:1px;height:100%;background:#3a3a3a"></div><div class="b" style="left:157px;top:0;width:1px;height:100%;background:#3a3a3a"></div></div><svg class="b" style="left:1825.00px;top:1387.60px;" width="23.00" height="23.00" viewBox="0 0 16 16"><path d="M2.4000000000000004 9a5.6 5.6 0 1 0 11.2 0a5.6 5.6 0 1 0 -11.2 0zM8 9V5.6M8 9l2.4 1.6M6.2 1.6h3.6M8 1.8v1.6M12.6 4l1-1" fill="none" stroke="#e6e6e6" stroke-width="1.1" stroke-linecap="round" stroke-linejoin="round" /></svg><span class="t" style="left:1874.70px;top:1391px;font-size:17px;line-height:17px;color:#e6e6e6;letter-spacing:-0.040px;">Start</span><span class="t" style="left:1948.87px;top:1391px;font-size:17px;line-height:17px;color:#e6e6e6;">1</span><span class="t" style="left:2003.60px;top:1391px;font-size:17px;line-height:17px;color:#e6e6e6;letter-spacing:-0.417px;">End</span><span class="t" style="left:2050.70px;top:1391px;font-size:17px;line-height:17px;color:#e6e6e6;letter-spacing:1.178px;">250</span><div class="b" style="left:0.00px;top:1440.00px;width:11.00px;height:18.50px;background:#2a2a2a;border-radius:0 5px 5px 0;"></div><svg class="b" style="left:2px;top:1443px" width="9" height="13"><path d="M1.5 1.5L7 6.5L1.5 11.5" fill="none" stroke="#8c8c8c" stroke-width="1.4"/></svg><div class="b" style="left:2104.00px;top:1440.00px;width:10.00px;height:18.50px;background:#2a2a2a;border-radius:5px 0 0 5px;"></div><svg class="b" style="left:2105px;top:1443px" width="9" height="13"><path d="M7.5 1.5L2 6.5L7.5 11.5" fill="none" stroke="#8c8c8c" stroke-width="1.4"/></svg></div>
<div class="b" style="left:0;top:0;width:100%;height:100%;border:1px solid rgba(255,255,255,0.04);border-radius:7px"></div>
</div>
<span class="t" style="left:1440.30px;top:1496px;font-size:17px;line-height:17px;color:#9a9a9a;letter-spacing:0.099px;">Ground</span>
<span class="t" style="left:1511.60px;top:1496px;font-size:17px;line-height:17px;color:#9a9a9a;letter-spacing:0.130px;">AutomationStationBase</span>
<span class="t" style="left:1705.20px;top:1496px;font-size:17px;line-height:17px;color:#9a9a9a;letter-spacing:0.617px;">Verts:1,642</span>
<span class="t" style="left:1811.30px;top:1496px;font-size:17px;line-height:17px;color:#9a9a9a;letter-spacing:0.449px;">Faces:1,220</span>
<span class="t" style="left:1923.40px;top:1496px;font-size:17px;line-height:17px;color:#9a9a9a;letter-spacing:0.624px;">Tris:2,836</span>
<span class="t" style="left:2018.20px;top:1496px;font-size:17px;line-height:17px;color:#9a9a9a;letter-spacing:0.613px;">Objects:0/24</span>
<span class="t" style="left:2134.50px;top:1496px;font-size:17px;line-height:17px;color:#9a9a9a;letter-spacing:0.457px;">Memory: 113.2 MiB</span>
<span class="t" style="left:2301.50px;top:1496px;font-size:17px;line-height:17px;color:#9a9a9a;letter-spacing:0.064px;">VRAM: 2.5/8.0 GiB</span>
<span class="t" style="left:2501.80px;top:1496px;font-size:17px;line-height:17px;color:#9a9a9a;letter-spacing:0.438px;">4.4.1</span>
<div class="b" style="left:1503.50px;top:1494.20px;width:1.80px;height:20.00px;background:#8e8e8e;"></div>
<div class="b" style="left:1697.60px;top:1494.20px;width:1.80px;height:20.00px;background:#8e8e8e;"></div>
<div class="b" style="left:1803.70px;top:1494.20px;width:1.80px;height:20.00px;background:#8e8e8e;"></div>
<div class="b" style="left:1915.90px;top:1494.20px;width:1.80px;height:20.00px;background:#8e8e8e;"></div>
<div class="b" style="left:2010.70px;top:1494.20px;width:1.80px;height:20.00px;background:#8e8e8e;"></div>
<div class="b" style="left:2127.00px;top:1494.20px;width:1.80px;height:20.00px;background:#8e8e8e;"></div>
<div class="b" style="left:2294.00px;top:1494.20px;width:1.80px;height:20.00px;background:#8e8e8e;"></div>
<div class="b" style="left:2452.30px;top:1494.20px;width:1.80px;height:20.00px;background:#8e8e8e;"></div>
<div class="b" style="left:2493.20px;top:1494.20px;width:1.80px;height:20.00px;background:#8e8e8e;"></div>
<svg class="b" style="left:2459.80px;top:1492.80px;" width="24.00" height="24.00" viewBox="0 0 16 16"><path d="M1.4000000000000004 8a6.6 6.6 0 1 0 13.2 0a6.6 6.6 0 1 0 -13.2 0zM1.4 8h13.2M8 1.4c-3.6 3-3.6 10.2 0 13.2M8 1.4c3.6 3 3.6 10.2 0 13.2M2.6 4.4h10.8M2.6 11.6h10.8" fill="none" stroke="#9a9a9a" stroke-width="1.0" stroke-linecap="round" stroke-linejoin="round" /></svg>
<span class="t" style="left:2481.40px;top:1506px;font-size:12px;line-height:12px;color:#9a9a9a;">1</span>
</div></body></html>
